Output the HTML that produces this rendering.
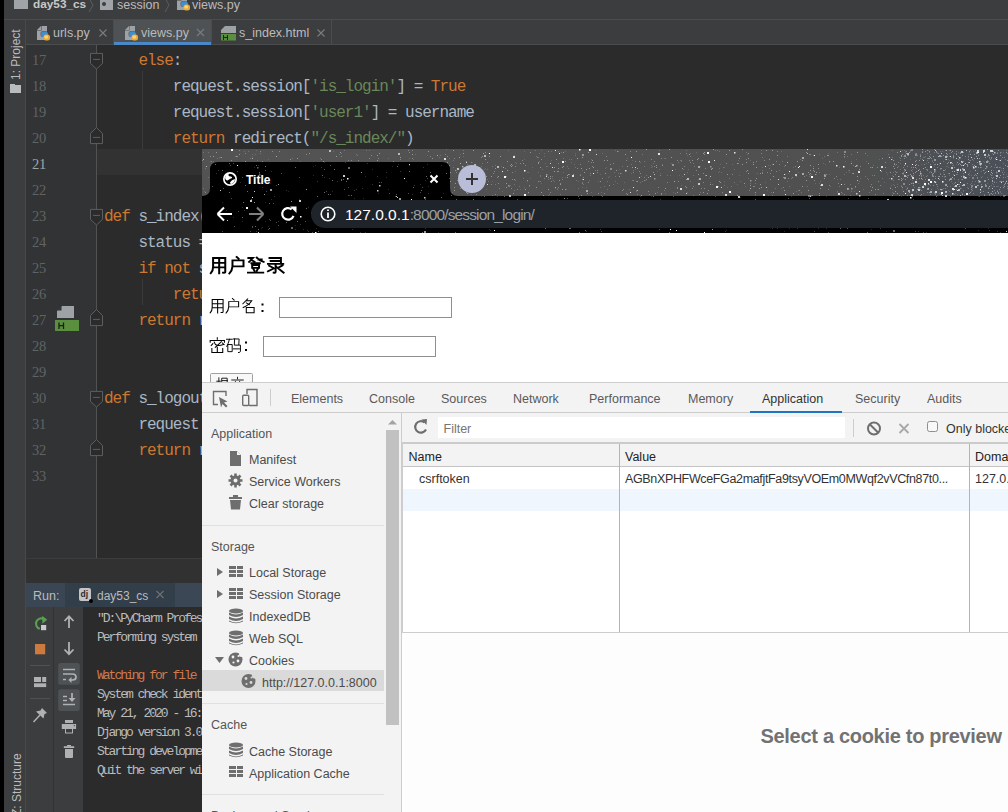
<!DOCTYPE html><html><head><meta charset="utf-8"><style>*{margin:0;padding:0;box-sizing:border-box}
html,body{width:1008px;height:812px;overflow:hidden;background:#2b2b2b;font-family:"Liberation Sans",sans-serif;position:relative}
.a{position:absolute}
.t{position:absolute;line-height:1;white-space:pre}
.kw{color:#cc7832}.st{color:#6a8759}
svg{position:absolute;overflow:visible}
</style></head><body><div class="a" style="left:0px;top:0px;width:4px;height:812px;background:#000000;"></div>
<div class="a" style="left:4px;top:0px;width:1004px;height:19px;background:#3c3d3f;"></div>
<div class="a" style="left:4px;top:19px;width:1004px;height:1px;background:#4a4c4e;"></div>
<div class="a" style="left:4px;top:20px;width:22px;height:792px;background:#3c3d3f;"></div>
<div class="a" style="left:25px;top:20px;width:1px;height:792px;background:#48494b;"></div>
<div class="a" style="left:26px;top:20px;width:982px;height:25px;background:#3c3d3f;"></div>
<div class="a" style="left:26px;top:44px;width:982px;height:1px;background:#4a4c4e;"></div>
<div class="a" style="left:114px;top:20px;width:97px;height:22px;background:#4e5254;"></div>
<div class="a" style="left:114px;top:42px;width:97px;height:3px;background:#4a88c7;"></div>
<div class="a" style="left:211px;top:20px;width:1px;height:25px;background:#4a4c4e;"></div>
<div class="a" style="left:113px;top:20px;width:1px;height:25px;background:#4a4c4e;"></div>
<div class="a" style="left:331px;top:20px;width:1px;height:25px;background:#4a4c4e;"></div>
<div class="a" style="left:14px;top:0px;width:14px;height:9px;background:#a0a4a8;"></div>
<div class="t" style="left:33px;top:-0.54px;font-size:11.8px;color:#c8c8c8;font-weight:bold;">day53_cs</div>
<svg style="left:0;top:0" width="1008" height="45"><path d="M89,-2 L93,5 L89,12 M165,-2 L169,5 L165,12" stroke="#5a5d60" stroke-width="1" fill="none"/><rect x="100" y="-2" width="13" height="12" fill="#a0a4a8"/><circle cx="104" cy="4" r="2" fill="#3c3d3f"/></svg>
<div class="t" style="left:117px;top:-1.08px;font-size:12.5px;color:#bbbbbb;">session</div>
<div class="t" style="left:192px;top:-1.08px;font-size:12.5px;color:#bbbbbb;">views.py</div>
<div class="t" style="left:53px;top:26.92px;font-size:12.5px;color:#bbbbbb;">urls.py</div>
<div class="t" style="left:141px;top:26.92px;font-size:12.5px;color:#bbbbbb;">views.py</div>
<div class="t" style="left:239px;top:26.92px;font-size:12.5px;color:#bbbbbb;">s_index.html</div>
<svg style="left:0;top:0" width="1008" height="45"><path d="M41.5,26 H47 V40 H37 V30.5 H41.5 Z" fill="#9ea2a6"/><path d="M37,30 L41,26 V30 Z" fill="#9ea2a6"/><rect x="40.5" y="31" width="7.5" height="6" rx="2.5" fill="#2b2b2b" opacity="0.6"/><rect x="41" y="31.5" width="7" height="5.5" rx="2.5" fill="#3d8fd1"/><rect x="43.5" y="34.5" width="6.5" height="6" rx="2.5" fill="#e9a93a"/><rect x="44.5" y="35.5" width="3.5" height="3" rx="1" fill="#f7d774"/><path d="M129.5,26 H135 V40 H125 V30.5 H129.5 Z" fill="#9ea2a6"/><path d="M125,30 L129,26 V30 Z" fill="#9ea2a6"/><rect x="128.5" y="31" width="7.5" height="6" rx="2.5" fill="#2b2b2b" opacity="0.6"/><rect x="129" y="31.5" width="7" height="5.5" rx="2.5" fill="#3d8fd1"/><rect x="131.5" y="34.5" width="6.5" height="6" rx="2.5" fill="#e9a93a"/><rect x="132.5" y="35.5" width="3.5" height="3" rx="1" fill="#f7d774"/><path d="M181.5,-4 H187 V10 H177 V0.5 H181.5 Z" fill="#9ea2a6"/><path d="M177,0 L181,-4 V0 Z" fill="#9ea2a6"/><rect x="180.5" y="1" width="7.5" height="6" rx="2.5" fill="#2b2b2b" opacity="0.6"/><rect x="181" y="1.5" width="7" height="5.5" rx="2.5" fill="#3d8fd1"/><rect x="183.5" y="4.5" width="6.5" height="6" rx="2.5" fill="#e9a93a"/><rect x="184.5" y="5.5" width="3.5" height="3" rx="1" fill="#f7d774"/><path d="M99.5,29.5 L106.5,36.5 M106.5,29.5 L99.5,36.5" stroke="#7a7d80" stroke-width="1.1"/><path d="M197.0,29.0 L204.0,36.0 M204.0,29.0 L197.0,36.0" stroke="#7a7d80" stroke-width="1.1"/><path d="M317.5,29.5 L324.5,36.5 M324.5,29.5 L317.5,36.5" stroke="#7a7d80" stroke-width="1.1"/><path d="M225,26 H236 V33 H221 V30 Z" fill="#9ea2a6"/><rect x="221" y="34" width="15" height="6.5" fill="#5a8f3f"/><path d="M223.5,35 V40 M227.5,35 V40 M223.5,37.5 H227.5" stroke="#222" stroke-width="1"/></svg>
<div class="t" style="left:10px;top:80px;font-size:12px;color:#bbbbbb;transform-origin:0 0;transform:rotate(-90deg);">1: Project</div>
<div class="a" style="left:10px;top:85px;width:11px;height:8px;background:#b9bcbf;"></div>
<div class="a" style="left:10px;top:84px;width:5px;height:2px;background:#b9bcbf;"></div>
<div class="t" style="left:10.5px;top:816px;font-size:12px;color:#bbbbbb;transform-origin:0 0;transform:rotate(-90deg);">Z: Structure</div>
<div class="a" style="left:26px;top:45px;width:70px;height:513px;background:#313335;"></div>
<div class="a" style="left:97px;top:149px;width:911px;height:26px;background:#323232;"></div>
<div class="a" style="left:96px;top:45px;width:1px;height:513px;background:#505254;"></div>
<div class="t" style="left:32px;top:52.86px;font-size:14.5px;color:#606366;font-family:'Liberation Serif',serif;letter-spacing:-0.3px;">17</div>
<div class="t" style="left:104px;top:52.74px;font-size:16px;color:#a9b7c6;font-family:'Liberation Mono',monospace;letter-spacing:-1px;">    <span class="kw">else</span>:</div>
<div class="t" style="left:32px;top:78.86px;font-size:14.5px;color:#606366;font-family:'Liberation Serif',serif;letter-spacing:-0.3px;">18</div>
<div class="t" style="left:104px;top:78.74px;font-size:16px;color:#a9b7c6;font-family:'Liberation Mono',monospace;letter-spacing:-1px;">        request.session[<span class="st">'is_login'</span>] = <span class="kw">True</span></div>
<div class="t" style="left:32px;top:104.86px;font-size:14.5px;color:#606366;font-family:'Liberation Serif',serif;letter-spacing:-0.3px;">19</div>
<div class="t" style="left:104px;top:104.74px;font-size:16px;color:#a9b7c6;font-family:'Liberation Mono',monospace;letter-spacing:-1px;">        request.session[<span class="st">'user1'</span>] = username</div>
<div class="t" style="left:32px;top:130.86px;font-size:14.5px;color:#606366;font-family:'Liberation Serif',serif;letter-spacing:-0.3px;">20</div>
<div class="t" style="left:104px;top:130.74px;font-size:16px;color:#a9b7c6;font-family:'Liberation Mono',monospace;letter-spacing:-1px;">        <span class="kw">return</span> redirect(<span class="st">"/s_index/"</span>)</div>
<div class="t" style="left:32px;top:156.86px;font-size:14.5px;color:#a4a3a3;font-family:'Liberation Serif',serif;letter-spacing:-0.3px;">21</div>
<div class="t" style="left:32px;top:182.86px;font-size:14.5px;color:#606366;font-family:'Liberation Serif',serif;letter-spacing:-0.3px;">22</div>
<div class="t" style="left:32px;top:208.86px;font-size:14.5px;color:#606366;font-family:'Liberation Serif',serif;letter-spacing:-0.3px;">23</div>
<div class="t" style="left:104px;top:208.74px;font-size:16px;color:#a9b7c6;font-family:'Liberation Mono',monospace;letter-spacing:-1px;"><span class="kw">def</span> s_index(request):</div>
<div class="t" style="left:32px;top:234.86px;font-size:14.5px;color:#606366;font-family:'Liberation Serif',serif;letter-spacing:-0.3px;">24</div>
<div class="t" style="left:104px;top:234.74px;font-size:16px;color:#a9b7c6;font-family:'Liberation Mono',monospace;letter-spacing:-1px;">    status = request.session.get()</div>
<div class="t" style="left:32px;top:260.86px;font-size:14.5px;color:#606366;font-family:'Liberation Serif',serif;letter-spacing:-0.3px;">25</div>
<div class="t" style="left:104px;top:260.74px;font-size:16px;color:#a9b7c6;font-family:'Liberation Mono',monospace;letter-spacing:-1px;">    <span class="kw">if not</span> status:</div>
<div class="t" style="left:32px;top:286.86px;font-size:14.5px;color:#606366;font-family:'Liberation Serif',serif;letter-spacing:-0.3px;">26</div>
<div class="t" style="left:104px;top:286.74px;font-size:16px;color:#a9b7c6;font-family:'Liberation Mono',monospace;letter-spacing:-1px;">        <span class="kw">return</span> redirect()</div>
<div class="t" style="left:32px;top:312.86px;font-size:14.5px;color:#606366;font-family:'Liberation Serif',serif;letter-spacing:-0.3px;">27</div>
<div class="t" style="left:104px;top:312.74px;font-size:16px;color:#a9b7c6;font-family:'Liberation Mono',monospace;letter-spacing:-1px;">    <span class="kw">return</span> render()</div>
<div class="t" style="left:32px;top:338.86px;font-size:14.5px;color:#606366;font-family:'Liberation Serif',serif;letter-spacing:-0.3px;">28</div>
<div class="t" style="left:32px;top:364.86px;font-size:14.5px;color:#606366;font-family:'Liberation Serif',serif;letter-spacing:-0.3px;">29</div>
<div class="t" style="left:32px;top:390.86px;font-size:14.5px;color:#606366;font-family:'Liberation Serif',serif;letter-spacing:-0.3px;">30</div>
<div class="t" style="left:104px;top:390.74px;font-size:16px;color:#a9b7c6;font-family:'Liberation Mono',monospace;letter-spacing:-1px;"><span class="kw">def</span> s_logout(request):</div>
<div class="t" style="left:32px;top:416.86px;font-size:14.5px;color:#606366;font-family:'Liberation Serif',serif;letter-spacing:-0.3px;">31</div>
<div class="t" style="left:104px;top:416.74px;font-size:16px;color:#a9b7c6;font-family:'Liberation Mono',monospace;letter-spacing:-1px;">    request.session.flush()</div>
<div class="t" style="left:32px;top:442.86px;font-size:14.5px;color:#606366;font-family:'Liberation Serif',serif;letter-spacing:-0.3px;">32</div>
<div class="t" style="left:104px;top:442.74px;font-size:16px;color:#a9b7c6;font-family:'Liberation Mono',monospace;letter-spacing:-1px;">    <span class="kw">return</span> redirect()</div>
<div class="t" style="left:32px;top:468.86px;font-size:14.5px;color:#606366;font-family:'Liberation Serif',serif;letter-spacing:-0.3px;">33</div>
<div class="a" style="left:142px;top:71px;width:1px;height:78px;background:#3b3b3b;"></div>
<div class="a" style="left:142px;top:279px;width:1px;height:26px;background:#3b3b3b;"></div>
<svg style="left:0;top:0" width="200" height="560"><path d="M90.5,53.4 H102.5 V63.4 L96.5,69 L90.5,63.4 Z" fill="#2b2b2b" stroke="#5c5f61" stroke-width="1"/><path d="M93,59.4 H100" stroke="#5c5f61"/><path d="M90.5,143.6 H102.5 V133.5 L96.5,127.5 L90.5,133.5 Z" fill="#2b2b2b" stroke="#5c5f61" stroke-width="1"/><path d="M93,137.4 H100" stroke="#5c5f61"/><path d="M90.5,209.4 H102.5 V219.4 L96.5,225 L90.5,219.4 Z" fill="#2b2b2b" stroke="#5c5f61" stroke-width="1"/><path d="M93,215.4 H100" stroke="#5c5f61"/><path d="M90.5,325.6 H102.5 V315.5 L96.5,309.5 L90.5,315.5 Z" fill="#2b2b2b" stroke="#5c5f61" stroke-width="1"/><path d="M93,319.4 H100" stroke="#5c5f61"/><path d="M90.5,391.4 H102.5 V401.4 L96.5,407 L90.5,401.4 Z" fill="#2b2b2b" stroke="#5c5f61" stroke-width="1"/><path d="M93,397.4 H100" stroke="#5c5f61"/><path d="M90.5,455.6 H102.5 V445.5 L96.5,439.5 L90.5,445.5 Z" fill="#2b2b2b" stroke="#5c5f61" stroke-width="1"/><path d="M93,449.4 H100" stroke="#5c5f61"/><path d="M62,306 H74 V318 H57 V311 Z" fill="#9ea2a6"/><path d="M57,310.5 L61.5,306 V310.5 Z" fill="#313335"/><rect x="55" y="320" width="24" height="11" fill="#5a8f3f"/><path d="M59,322.5 V329 M63.5,322.5 V329 M59,325.7 H63.5" stroke="#1e1e1e" stroke-width="1.3"/></svg>
<div class="a" style="left:26px;top:558px;width:982px;height:1px;background:#3a3c3e;"></div>
<div class="a" style="left:26px;top:559px;width:982px;height:24px;background:#313132;"></div>
<div class="a" style="left:26px;top:583px;width:982px;height:24px;background:#3b4754;"></div>
<div class="a" style="left:26px;top:583px;width:39px;height:24px;background:#3a4653;"></div>
<div class="a" style="left:65px;top:583px;width:110px;height:24px;background:#323e4a;"></div>
<div class="t" style="left:33px;top:589.92px;font-size:12.5px;color:#bbbbbb;">Run:</div>
<div class="t" style="left:97px;top:590.30px;font-size:12px;color:#bbbbbb;">day53_cs</div>
<svg style="left:0;top:583px" width="200" height="24"><rect x="79" y="5" width="12" height="13" rx="2" fill="#c2c4c6"/><text x="80.5" y="14" font-size="8.5" font-family="Liberation Sans" fill="#2b2b2b" font-weight="bold">dj</text><circle cx="91" cy="18" r="2" fill="#000"/><path d="M156.5,8.0 L163.5,15.0 M163.5,8.0 L156.5,15.0" stroke="#6e7275" stroke-width="1.1"/></svg>
<div class="a" style="left:26px;top:607px;width:28px;height:205px;background:#3c3d3f;"></div>
<div class="a" style="left:53px;top:607px;width:1px;height:205px;background:#323232;"></div>
<div class="a" style="left:54px;top:607px;width:29px;height:205px;background:#3c3d3f;"></div>
<div class="a" style="left:83px;top:607px;width:925px;height:205px;background:#2b2b2b;"></div>
<svg style="left:0;top:607px" width="90" height="205"><path d="M44.5,12.5 A5.3,5.3 0 1 0 39.8,21.8" fill="none" stroke="#59a14f" stroke-width="2.2"/><path d="M42.3,8.8 L47.2,12.8 L42.3,16.8 Z" fill="#59a14f"/><rect x="41" y="18" width="5.2" height="5.2" fill="#c9c9c9"/><rect x="35" y="37" width="10.2" height="10.3" fill="#cc7a3e"/><rect x="30" y="58" width="20" height="1" fill="#4f5254"/><rect x="34" y="70" width="7" height="5" fill="#afb1b3"/><rect x="42.2" y="70" width="4" height="5" fill="#afb1b3"/><rect x="34" y="76.3" width="12.2" height="3.8" fill="#afb1b3"/><rect x="30" y="91" width="20" height="1" fill="#4f5254"/><path d="M42,101 L47,106 L44.5,107 L43.5,111.5 L36,104.5 L40.5,103.5 Z" fill="#afb1b3"/><path d="M33.5,115 L40,108" stroke="#afb1b3" stroke-width="1.5"/><path d="M69,9.5 V21 M64.5,14 L69,9.3 L73.5,14" stroke="#afb1b3" stroke-width="1.8" fill="none"/><path d="M69,35 V47 M64.5,42.5 L69,47.2 L73.5,42.5" stroke="#afb1b3" stroke-width="1.8" fill="none"/><rect x="58.2" y="56" width="21.6" height="21.7" rx="2.5" fill="#4e5254"/><path d="M63,62.5 H75 M63,67 H72.5 Q76,67 76,70 Q76,73 72.5,73 H70 M63,72.5 H66" stroke="#afb1b3" stroke-width="1.7" fill="none"/><path d="M71.5,70 L68.3,73 L71.5,76 Z" fill="#afb1b3"/><rect x="58.2" y="82.2" width="21.6" height="21.8" rx="2.5" fill="#4e5254"/><path d="M63,89.5 H67 M63,93.5 H67 M63,97.5 H75 M72,86 V93.5" stroke="#afb1b3" stroke-width="1.7" fill="none"/><path d="M68.5,91 L72,95 L75.5,91 Z" fill="#afb1b3"/><rect x="65" y="113" width="8" height="3" fill="#afb1b3"/><rect x="61.8" y="117" width="14.3" height="5" fill="#afb1b3"/><rect x="65.5" y="121.5" width="7" height="4.5" fill="none" stroke="#afb1b3" stroke-width="1"/><circle cx="74.3" cy="118.6" r="0.6" fill="#3c3d3f"/><rect x="63.8" y="139.2" width="10.4" height="1.8" fill="#afb1b3"/><rect x="67" y="138" width="4" height="1.5" fill="#afb1b3"/><path d="M65,142 H73 V150 Q73,151 72,151 H66 Q65,151 65,150 Z" fill="#afb1b3"/></svg>
<div class="t" style="left:97px;top:612.04px;font-size:13px;color:#bbbbbb;font-family:'Liberation Mono',monospace;letter-spacing:-2px;">"D:\PyCharm Professional\bin\python.exe" manage.py runserver</div>
<div class="t" style="left:97px;top:631.04px;font-size:13px;color:#bbbbbb;font-family:'Liberation Mono',monospace;letter-spacing:-2px;">Performing system checks...</div>
<div class="t" style="left:97px;top:669.04px;font-size:13px;color:#cf7a4e;font-family:'Liberation Mono',monospace;letter-spacing:-2px;">Watching for file changes with StatReloader</div>
<div class="t" style="left:97px;top:688.04px;font-size:13px;color:#bbbbbb;font-family:'Liberation Mono',monospace;letter-spacing:-2px;">System check identified no issues (0 silenced).</div>
<div class="t" style="left:97px;top:707.04px;font-size:13px;color:#bbbbbb;font-family:'Liberation Mono',monospace;letter-spacing:-2px;">May 21, 2020 - 16:20:11</div>
<div class="t" style="left:97px;top:726.04px;font-size:13px;color:#bbbbbb;font-family:'Liberation Mono',monospace;letter-spacing:-2px;">Django version 3.0.6, using settings</div>
<div class="t" style="left:97px;top:745.04px;font-size:13px;color:#bbbbbb;font-family:'Liberation Mono',monospace;letter-spacing:-2px;">Starting development server at http://127.0.0.1:8000/</div>
<div class="t" style="left:97px;top:764.04px;font-size:13px;color:#bbbbbb;font-family:'Liberation Mono',monospace;letter-spacing:-2px;">Quit the server with CTRL-BREAK.</div>
<div class="a" style="left:202px;top:149px;width:806px;height:663px;overflow:hidden">
<div class="a" style="left:0;top:0;width:806px;height:47px;background:linear-gradient(90deg,#535353 0%,#505050 82%,#4b5059 100%)"></div>
<div class="a" style="left:0;top:47px;width:806px;height:37px;background:#000"></div>
<svg style="left:0;top:0" width="806" height="84"><rect x="365" y="26" width="1" height="1" fill="#fff" opacity="0.4"/><rect x="364" y="40" width="1" height="1" fill="#fff" opacity="0.2"/><rect x="149" y="24" width="1" height="1" fill="#fff" opacity="0.2"/><rect x="76" y="14" width="1" height="1" fill="#fff" opacity="0.15"/><rect x="434" y="42" width="1" height="1" fill="#fff" opacity="0.15"/><rect x="480" y="19" width="1" height="1" fill="#fff" opacity="0.4"/><rect x="527" y="29" width="1" height="1" fill="#fff" opacity="0.2"/><rect x="502" y="39" width="1" height="1" fill="#fff" opacity="0.15"/><rect x="48" y="9" width="1" height="1" fill="#fff" opacity="0.2"/><rect x="483" y="37" width="1" height="1" fill="#fff" opacity="0.3"/><rect x="355" y="40" width="1" height="1" fill="#fff" opacity="0.2"/><rect x="516" y="23" width="1" height="1" fill="#fff" opacity="0.15"/><rect x="369" y="13" width="1" height="1" fill="#fff" opacity="0.15"/><rect x="570" y="15" width="1" height="1" fill="#fff" opacity="0.2"/><rect x="413" y="1" width="1" height="1" fill="#fff" opacity="0.15"/><rect x="323" y="40" width="1" height="1" fill="#fff" opacity="0.4"/><rect x="54" y="1" width="1" height="1" fill="#fff" opacity="0.15"/><rect x="172" y="44" width="1" height="1" fill="#fff" opacity="0.15"/><rect x="379" y="46" width="1" height="1" fill="#fff" opacity="0.4"/><rect x="338" y="27" width="1" height="1" fill="#fff" opacity="0.2"/><rect x="627" y="13" width="1" height="1" fill="#fff" opacity="0.15"/><rect x="251" y="1" width="1" height="1" fill="#fff" opacity="0.4"/><rect x="611" y="6" width="1" height="1" fill="#fff" opacity="0.2"/><rect x="570" y="1" width="1" height="1" fill="#fff" opacity="0.4"/><rect x="642" y="8" width="1" height="1" fill="#fff" opacity="0.2"/><rect x="361" y="9" width="1" height="1" fill="#fff" opacity="0.2"/><rect x="338" y="18" width="1" height="1" fill="#fff" opacity="0.4"/><rect x="339" y="10" width="1" height="1" fill="#fff" opacity="0.3"/><rect x="697" y="46" width="1" height="1" fill="#fff" opacity="0.3"/><rect x="804" y="1" width="1" height="1" fill="#fff" opacity="0.2"/><rect x="318" y="40" width="1" height="1" fill="#fff" opacity="0.15"/><rect x="34" y="7" width="1" height="1" fill="#fff" opacity="0.4"/><rect x="208" y="36" width="1" height="1" fill="#fff" opacity="0.3"/><rect x="669" y="18" width="1" height="1" fill="#fff" opacity="0.15"/><rect x="73" y="27" width="1" height="1" fill="#fff" opacity="0.2"/><rect x="13" y="17" width="1" height="1" fill="#fff" opacity="0.4"/><rect x="103" y="28" width="1" height="1" fill="#fff" opacity="0.2"/><rect x="698" y="9" width="1" height="1" fill="#fff" opacity="0.2"/><rect x="251" y="11" width="1" height="1" fill="#fff" opacity="0.2"/><rect x="585" y="7" width="1" height="1" fill="#fff" opacity="0.2"/><rect x="554" y="18" width="1" height="1" fill="#fff" opacity="0.4"/><rect x="486" y="20" width="1" height="1" fill="#fff" opacity="0.15"/><rect x="88" y="24" width="1" height="1" fill="#fff" opacity="0.3"/><rect x="192" y="33" width="1" height="1" fill="#fff" opacity="0.3"/><rect x="339" y="43" width="1" height="1" fill="#fff" opacity="0.4"/><rect x="237" y="8" width="1" height="1" fill="#fff" opacity="0.15"/><rect x="102" y="23" width="1" height="1" fill="#fff" opacity="0.15"/><rect x="226" y="43" width="1" height="1" fill="#fff" opacity="0.2"/><rect x="604" y="3" width="1" height="1" fill="#fff" opacity="0.4"/><rect x="359" y="3" width="1" height="1" fill="#fff" opacity="0.2"/><rect x="227" y="25" width="1" height="1" fill="#fff" opacity="0.2"/><rect x="74" y="7" width="1" height="1" fill="#fff" opacity="0.4"/><rect x="790" y="31" width="1" height="1" fill="#fff" opacity="0.2"/><rect x="475" y="43" width="1" height="1" fill="#fff" opacity="0.4"/><rect x="734" y="33" width="1" height="1" fill="#fff" opacity="0.15"/><rect x="17" y="30" width="1" height="1" fill="#fff" opacity="0.4"/><rect x="54" y="15" width="1" height="1" fill="#fff" opacity="0.2"/><rect x="805" y="4" width="1" height="1" fill="#fff" opacity="0.3"/><rect x="594" y="42" width="1" height="1" fill="#fff" opacity="0.2"/><rect x="639" y="43" width="1" height="1" fill="#fff" opacity="0.3"/><rect x="68" y="22" width="1" height="1" fill="#fff" opacity="0.15"/><rect x="702" y="20" width="1" height="1" fill="#fff" opacity="0.15"/><rect x="696" y="27" width="1" height="1" fill="#fff" opacity="0.4"/><rect x="306" y="1" width="1" height="1" fill="#fff" opacity="0.15"/><rect x="65" y="30" width="1" height="1" fill="#fff" opacity="0.3"/><rect x="709" y="34" width="1" height="1" fill="#fff" opacity="0.4"/><rect x="753" y="33" width="1" height="1" fill="#fff" opacity="0.4"/><rect x="355" y="39" width="1" height="1" fill="#fff" opacity="0.15"/><rect x="418" y="24" width="1" height="1" fill="#fff" opacity="0.3"/><rect x="485" y="23" width="1" height="1" fill="#fff" opacity="0.2"/><rect x="772" y="5" width="1" height="1" fill="#fff" opacity="0.4"/><rect x="206" y="1" width="1" height="1" fill="#fff" opacity="0.3"/><rect x="115" y="29" width="1" height="1" fill="#fff" opacity="0.2"/><rect x="608" y="16" width="1" height="1" fill="#fff" opacity="0.4"/><rect x="402" y="11" width="1" height="1" fill="#fff" opacity="0.4"/><rect x="537" y="9" width="1" height="1" fill="#fff" opacity="0.4"/><rect x="648" y="35" width="1" height="1" fill="#fff" opacity="0.2"/><rect x="709" y="18" width="1" height="1" fill="#fff" opacity="0.3"/><rect x="169" y="6" width="1" height="1" fill="#fff" opacity="0.3"/><rect x="675" y="40" width="1" height="1" fill="#fff" opacity="0.15"/><rect x="766" y="13" width="1" height="1" fill="#fff" opacity="0.2"/><rect x="91" y="22" width="1" height="1" fill="#fff" opacity="0.2"/><rect x="670" y="18" width="1" height="1" fill="#fff" opacity="0.4"/><rect x="542" y="34" width="1" height="1" fill="#fff" opacity="0.4"/><rect x="258" y="39" width="1" height="1" fill="#fff" opacity="0.3"/><rect x="704" y="2" width="1" height="1" fill="#fff" opacity="0.3"/><rect x="460" y="15" width="1" height="1" fill="#fff" opacity="0.15"/><rect x="517" y="19" width="1" height="1" fill="#fff" opacity="0.2"/><rect x="20" y="39" width="1" height="1" fill="#fff" opacity="0.2"/><rect x="628" y="37" width="1" height="1" fill="#fff" opacity="0.15"/><rect x="360" y="30" width="1" height="1" fill="#fff" opacity="0.3"/><rect x="773" y="32" width="1" height="1" fill="#fff" opacity="0.2"/><rect x="664" y="12" width="1" height="1" fill="#fff" opacity="0.15"/><rect x="609" y="25" width="1" height="1" fill="#fff" opacity="0.15"/><rect x="144" y="13" width="1" height="1" fill="#fff" opacity="0.3"/><rect x="435" y="45" width="1" height="1" fill="#fff" opacity="0.2"/><rect x="317" y="37" width="1" height="1" fill="#fff" opacity="0.2"/><rect x="70" y="44" width="1" height="1" fill="#fff" opacity="0.4"/><rect x="105" y="21" width="1" height="1" fill="#fff" opacity="0.15"/><rect x="304" y="27" width="1" height="1" fill="#fff" opacity="0.3"/><rect x="374" y="31" width="1" height="1" fill="#fff" opacity="0.2"/><rect x="80" y="41" width="1" height="1" fill="#fff" opacity="0.15"/><rect x="172" y="42" width="1" height="1" fill="#fff" opacity="0.15"/><rect x="788" y="25" width="1" height="1" fill="#fff" opacity="0.3"/><rect x="211" y="34" width="1" height="1" fill="#fff" opacity="0.15"/><rect x="281" y="4" width="1" height="1" fill="#fff" opacity="0.4"/><rect x="276" y="20" width="1" height="1" fill="#fff" opacity="0.3"/><rect x="393" y="1" width="1" height="1" fill="#fff" opacity="0.15"/><rect x="346" y="2" width="1" height="1" fill="#fff" opacity="0.3"/><rect x="553" y="43" width="1" height="1" fill="#fff" opacity="0.4"/><rect x="120" y="24" width="1" height="1" fill="#fff" opacity="0.4"/><rect x="762" y="23" width="1" height="1" fill="#fff" opacity="0.15"/><rect x="611" y="21" width="1" height="1" fill="#fff" opacity="0.3"/><rect x="670" y="26" width="1" height="1" fill="#fff" opacity="0.2"/><rect x="421" y="40" width="1" height="1" fill="#fff" opacity="0.3"/><rect x="251" y="18" width="1" height="1" fill="#fff" opacity="0.2"/><rect x="245" y="7" width="1" height="1" fill="#fff" opacity="0.3"/><rect x="462" y="9" width="1" height="1" fill="#fff" opacity="0.15"/><rect x="406" y="28" width="1" height="1" fill="#fff" opacity="0.15"/><rect x="434" y="2" width="1" height="1" fill="#fff" opacity="0.4"/><rect x="438" y="47" width="1" height="1" fill="#fff" opacity="0.15"/><rect x="396" y="32" width="1" height="1" fill="#fff" opacity="0.15"/><rect x="750" y="22" width="1" height="1" fill="#fff" opacity="0.4"/><rect x="217" y="22" width="1" height="1" fill="#fff" opacity="0.2"/><rect x="274" y="42" width="1" height="1" fill="#fff" opacity="0.4"/><rect x="423" y="5" width="1" height="1" fill="#fff" opacity="0.4"/><rect x="498" y="43" width="1" height="1" fill="#fff" opacity="0.2"/><rect x="566" y="46" width="1" height="1" fill="#fff" opacity="0.15"/><rect x="156" y="11" width="1" height="1" fill="#fff" opacity="0.3"/><rect x="260" y="17" width="1" height="1" fill="#fff" opacity="0.4"/><rect x="85" y="34" width="1" height="1" fill="#fff" opacity="0.15"/><rect x="687" y="29" width="1" height="1" fill="#fff" opacity="0.2"/><rect x="565" y="41" width="1" height="1" fill="#fff" opacity="0.15"/><rect x="303" y="19" width="1" height="1" fill="#fff" opacity="0.2"/><rect x="434" y="41" width="1" height="1" fill="#fff" opacity="0.2"/><rect x="427" y="40" width="1" height="1" fill="#fff" opacity="0.2"/><rect x="188" y="35" width="1" height="1" fill="#fff" opacity="0.3"/><rect x="728" y="15" width="1" height="1" fill="#fff" opacity="0.3"/><rect x="718" y="9" width="1" height="1" fill="#fff" opacity="0.2"/><rect x="715" y="6" width="1" height="1" fill="#fff" opacity="0.2"/><rect x="107" y="4" width="1" height="1" fill="#fff" opacity="0.4"/><rect x="78" y="39" width="1" height="1" fill="#fff" opacity="0.4"/><rect x="438" y="33" width="1" height="1" fill="#fff" opacity="0.2"/><rect x="325" y="32" width="1" height="1" fill="#fff" opacity="0.15"/><rect x="77" y="27" width="1" height="1" fill="#fff" opacity="0.3"/><rect x="735" y="46" width="1" height="1" fill="#fff" opacity="0.15"/><rect x="568" y="30" width="1" height="1" fill="#fff" opacity="0.3"/><rect x="405" y="32" width="1" height="1" fill="#fff" opacity="0.2"/><rect x="647" y="23" width="1" height="1" fill="#fff" opacity="0.15"/><rect x="30" y="26" width="1" height="1" fill="#fff" opacity="0.4"/><rect x="118" y="9" width="1" height="1" fill="#fff" opacity="0.2"/><rect x="139" y="7" width="1" height="1" fill="#fff" opacity="0.3"/><rect x="747" y="4" width="1" height="1" fill="#fff" opacity="0.15"/><rect x="108" y="32" width="1" height="1" fill="#fff" opacity="0.15"/><rect x="616" y="15" width="1" height="1" fill="#fff" opacity="0.4"/><rect x="344" y="17" width="1" height="1" fill="#fff" opacity="0.2"/><rect x="484" y="1" width="1" height="1" fill="#fff" opacity="0.15"/><rect x="680" y="9" width="1" height="1" fill="#fff" opacity="0.4"/><rect x="290" y="17" width="1" height="1" fill="#fff" opacity="0.2"/><rect x="488" y="4" width="1" height="1" fill="#fff" opacity="0.15"/><rect x="261" y="4" width="1" height="1" fill="#fff" opacity="0.4"/><rect x="459" y="9" width="1" height="1" fill="#fff" opacity="0.3"/><rect x="649" y="12" width="1" height="1" fill="#fff" opacity="0.15"/><rect x="600" y="37" width="1" height="1" fill="#fff" opacity="0.4"/><rect x="107" y="16" width="1" height="1" fill="#fff" opacity="0.3"/><rect x="618" y="36" width="1" height="1" fill="#fff" opacity="0.4"/><rect x="167" y="9" width="1" height="1" fill="#fff" opacity="0.3"/><rect x="243" y="5" width="1" height="1" fill="#fff" opacity="0.3"/><rect x="798" y="42" width="1" height="1" fill="#fff" opacity="0.15"/><rect x="187" y="44" width="1" height="1" fill="#fff" opacity="0.3"/><rect x="272" y="31" width="1" height="1" fill="#fff" opacity="0.2"/><rect x="430" y="18" width="1" height="1" fill="#fff" opacity="0.4"/><rect x="518" y="33" width="1" height="1" fill="#fff" opacity="0.4"/><rect x="790" y="1" width="1" height="1" fill="#fff" opacity="0.15"/><rect x="595" y="12" width="1" height="1" fill="#fff" opacity="0.4"/><rect x="407" y="36" width="1" height="1" fill="#fff" opacity="0.4"/><rect x="9" y="12" width="1" height="1" fill="#fff" opacity="0.3"/><rect x="730" y="26" width="1" height="1" fill="#fff" opacity="0.4"/><rect x="780" y="27" width="1" height="1" fill="#fff" opacity="0.15"/><rect x="514" y="38" width="1" height="1" fill="#fff" opacity="0.15"/><rect x="443" y="31" width="1" height="1" fill="#fff" opacity="0.15"/><rect x="311" y="44" width="1" height="1" fill="#fff" opacity="0.4"/><rect x="380" y="8" width="1" height="1" fill="#fff" opacity="0.4"/><rect x="437" y="28" width="1" height="1" fill="#fff" opacity="0.4"/><rect x="762" y="20" width="1" height="1" fill="#fff" opacity="0.4"/><rect x="482" y="17" width="1" height="1" fill="#fff" opacity="0.3"/><rect x="389" y="13" width="1" height="1" fill="#fff" opacity="0.3"/><rect x="535" y="35" width="1" height="1" fill="#fff" opacity="0.15"/><rect x="11" y="12" width="1" height="1" fill="#fff" opacity="0.15"/><rect x="510" y="19" width="1" height="1" fill="#fff" opacity="0.4"/><rect x="43" y="15" width="1" height="1" fill="#fff" opacity="0.4"/><rect x="40" y="46" width="1" height="1" fill="#fff" opacity="0.3"/><rect x="59" y="43" width="1" height="1" fill="#fff" opacity="0.4"/><rect x="580" y="12" width="1" height="1" fill="#fff" opacity="0.2"/><rect x="37" y="5" width="1" height="1" fill="#fff" opacity="0.4"/><rect x="116" y="45" width="1" height="1" fill="#fff" opacity="0.2"/><rect x="487" y="5" width="1" height="1" fill="#fff" opacity="0.4"/><rect x="367" y="10" width="1" height="1" fill="#fff" opacity="0.15"/><rect x="287" y="7" width="1" height="1" fill="#fff" opacity="0.3"/><rect x="357" y="31" width="1" height="1" fill="#fff" opacity="0.4"/><rect x="484" y="30" width="1" height="1" fill="#fff" opacity="0.4"/><rect x="293" y="35" width="1" height="1" fill="#fff" opacity="0.2"/><rect x="768" y="35" width="1" height="1" fill="#fff" opacity="0.2"/><rect x="388" y="24" width="1" height="1" fill="#fff" opacity="0.3"/><rect x="632" y="29" width="1" height="1" fill="#fff" opacity="0.3"/><rect x="221" y="29" width="1" height="1" fill="#fff" opacity="0.2"/><rect x="510" y="35" width="1" height="1" fill="#fff" opacity="0.2"/><rect x="767" y="24" width="1" height="1" fill="#fff" opacity="0.2"/><rect x="708" y="2" width="1" height="1" fill="#fff" opacity="0.15"/><rect x="8" y="12" width="1" height="1" fill="#fff" opacity="0.15"/><rect x="502" y="5" width="1" height="1" fill="#fff" opacity="0.3"/><rect x="58" y="4" width="1" height="1" fill="#fff" opacity="0.2"/><rect x="444" y="30" width="1" height="1" fill="#fff" opacity="0.3"/><rect x="390" y="17" width="1" height="1" fill="#fff" opacity="0.3"/><rect x="277" y="35" width="1" height="1" fill="#fff" opacity="0.15"/><rect x="647" y="21" width="1" height="1" fill="#fff" opacity="0.2"/><rect x="358" y="35" width="1" height="1" fill="#fff" opacity="0.4"/><rect x="653" y="17" width="1" height="1" fill="#fff" opacity="0.3"/><rect x="234" y="36" width="1" height="1" fill="#fff" opacity="0.2"/><rect x="345" y="17" width="1" height="1" fill="#fff" opacity="0.15"/><rect x="372" y="15" width="1" height="1" fill="#fff" opacity="0.15"/><rect x="348" y="27" width="1" height="1" fill="#fff" opacity="0.4"/><rect x="241" y="36" width="1" height="1" fill="#fff" opacity="0.15"/><rect x="250" y="43" width="1" height="1" fill="#fff" opacity="0.15"/><rect x="560" y="23" width="1" height="1" fill="#fff" opacity="0.3"/><rect x="228" y="7" width="1" height="1" fill="#fff" opacity="0.3"/><rect x="530" y="15" width="1" height="1" fill="#fff" opacity="0.15"/><rect x="260" y="21" width="1" height="1" fill="#fff" opacity="0.3"/><rect x="353" y="38" width="1" height="1" fill="#fff" opacity="0.3"/><rect x="369" y="10" width="1" height="1" fill="#fff" opacity="0.2"/><rect x="68" y="39" width="1" height="1" fill="#fff" opacity="0.15"/><rect x="293" y="19" width="1" height="1" fill="#fff" opacity="0.4"/><rect x="642" y="35" width="1" height="1" fill="#fff" opacity="0.3"/><rect x="642" y="25" width="1" height="1" fill="#fff" opacity="0.2"/><rect x="142" y="36" width="1" height="1" fill="#fff" opacity="0.3"/><rect x="654" y="10" width="1" height="1" fill="#fff" opacity="0.15"/><rect x="439" y="27" width="1" height="1" fill="#fff" opacity="0.15"/><rect x="525" y="38" width="1" height="1" fill="#fff" opacity="0.15"/><rect x="469" y="14" width="1" height="1" fill="#fff" opacity="0.15"/><rect x="270" y="13" width="1" height="1" fill="#fff" opacity="0.15"/><rect x="725" y="4" width="1" height="1" fill="#fff" opacity="0.2"/><rect x="79" y="38" width="1" height="1" fill="#fff" opacity="0.4"/><rect x="198" y="10" width="1" height="1" fill="#fff" opacity="0.3"/><rect x="616" y="19" width="1" height="1" fill="#fff" opacity="0.3"/><rect x="651" y="16" width="1" height="1" fill="#fff" opacity="0.2"/><rect x="398" y="25" width="1" height="1" fill="#fff" opacity="0.15"/><rect x="571" y="43" width="1" height="1" fill="#fff" opacity="0.4"/><rect x="610" y="46" width="1" height="1" fill="#fff" opacity="0.3"/><rect x="688" y="38" width="1" height="1" fill="#fff" opacity="0.15"/><rect x="716" y="45" width="1" height="1" fill="#fff" opacity="0.15"/><rect x="422" y="33" width="1" height="1" fill="#fff" opacity="0.15"/><rect x="340" y="20" width="1" height="1" fill="#fff" opacity="0.2"/><rect x="198" y="8" width="1" height="1" fill="#fff" opacity="0.4"/><rect x="551" y="15" width="1" height="1" fill="#fff" opacity="0.4"/><rect x="343" y="14" width="1" height="1" fill="#fff" opacity="0.15"/><rect x="380" y="34" width="1" height="1" fill="#fff" opacity="0.3"/><rect x="522" y="36" width="1" height="1" fill="#fff" opacity="0.2"/><rect x="735" y="35" width="1" height="1" fill="#fff" opacity="0.15"/><rect x="471" y="43" width="1" height="1" fill="#fff" opacity="0.15"/><rect x="252" y="9" width="1" height="1" fill="#fff" opacity="0.3"/><rect x="175" y="11" width="1" height="1" fill="#fff" opacity="0.4"/><rect x="479" y="11" width="1" height="1" fill="#fff" opacity="0.2"/><rect x="721" y="19" width="1" height="1" fill="#fff" opacity="0.3"/><rect x="505" y="44" width="1" height="1" fill="#fff" opacity="0.4"/><rect x="688" y="23" width="1" height="1" fill="#fff" opacity="0.4"/><rect x="737" y="16" width="1" height="1" fill="#fff" opacity="0.15"/><rect x="389" y="10" width="1" height="1" fill="#fff" opacity="0.15"/><rect x="175" y="6" width="1" height="1" fill="#fff" opacity="0.4"/><rect x="787" y="37" width="1" height="1" fill="#fff" opacity="0.3"/><rect x="635" y="3" width="1" height="1" fill="#fff" opacity="0.2"/><rect x="719" y="41" width="1" height="1" fill="#fff" opacity="0.3"/><rect x="363" y="12" width="1" height="1" fill="#fff" opacity="0.4"/><rect x="488" y="7" width="1" height="1" fill="#fff" opacity="0.2"/><rect x="622" y="7" width="1" height="1" fill="#fff" opacity="0.2"/><rect x="513" y="47" width="1" height="1" fill="#fff" opacity="0.3"/><rect x="416" y="2" width="1" height="1" fill="#fff" opacity="0.2"/><rect x="1" y="39" width="1" height="1" fill="#fff" opacity="0.2"/><rect x="663" y="4" width="1" height="1" fill="#fff" opacity="0.3"/><rect x="496" y="25" width="1" height="1" fill="#fff" opacity="0.4"/><rect x="559" y="4" width="1" height="1" fill="#fff" opacity="0.3"/><rect x="15" y="9" width="1" height="1" fill="#fff" opacity="0.2"/><rect x="739" y="4" width="1" height="1" fill="#fff" opacity="0.4"/><rect x="168" y="26" width="1" height="1" fill="#fff" opacity="0.4"/><rect x="127" y="39" width="1" height="1" fill="#fff" opacity="0.3"/><rect x="255" y="19" width="1" height="1" fill="#fff" opacity="0.3"/><rect x="804" y="31" width="1" height="1" fill="#fff" opacity="0.15"/><rect x="290" y="32" width="1" height="1" fill="#fff" opacity="0.15"/><rect x="538" y="32" width="1" height="1" fill="#fff" opacity="0.15"/><rect x="527" y="1" width="1" height="1" fill="#fff" opacity="0.4"/><rect x="574" y="22" width="1" height="1" fill="#fff" opacity="0.3"/><rect x="455" y="22" width="1" height="1" fill="#fff" opacity="0.15"/><rect x="690" y="40" width="1" height="1" fill="#fff" opacity="0.2"/><rect x="727" y="7" width="1" height="1" fill="#fff" opacity="0.4"/><rect x="756" y="35" width="1" height="1" fill="#fff" opacity="0.3"/><rect x="608" y="26" width="1" height="1" fill="#fff" opacity="0.15"/><rect x="207" y="9" width="1" height="1" fill="#fff" opacity="0.15"/><rect x="265" y="44" width="1" height="1" fill="#fff" opacity="0.4"/><rect x="583" y="16" width="1" height="1" fill="#fff" opacity="0.4"/><rect x="74" y="7" width="1" height="1" fill="#fff" opacity="0.15"/><rect x="106" y="30" width="1" height="1" fill="#fff" opacity="0.2"/><rect x="145" y="19" width="1" height="1" fill="#fff" opacity="0.4"/><rect x="478" y="4" width="1" height="1" fill="#fff" opacity="0.2"/><rect x="26" y="46" width="1" height="1" fill="#fff" opacity="0.4"/><rect x="328" y="3" width="1" height="1" fill="#fff" opacity="0.4"/><rect x="747" y="7" width="1" height="1" fill="#fff" opacity="0.2"/><rect x="618" y="39" width="1" height="1" fill="#fff" opacity="0.4"/><rect x="389" y="43" width="1" height="1" fill="#fff" opacity="0.15"/><rect x="586" y="29" width="1" height="1" fill="#fff" opacity="0.3"/><rect x="791" y="37" width="1" height="1" fill="#fff" opacity="0.15"/><rect x="210" y="9" width="1" height="1" fill="#fff" opacity="0.3"/><rect x="524" y="5" width="1" height="1" fill="#fff" opacity="0.4"/><rect x="165" y="16" width="1" height="1" fill="#fff" opacity="0.3"/><rect x="665" y="29" width="1" height="1" fill="#fff" opacity="0.2"/><rect x="205" y="25" width="1" height="1" fill="#fff" opacity="0.3"/><rect x="442" y="17" width="1" height="1" fill="#fff" opacity="0.2"/><rect x="463" y="9" width="1" height="1" fill="#fff" opacity="0.2"/><rect x="457" y="1" width="1" height="1" fill="#fff" opacity="0.2"/><rect x="626" y="6" width="1" height="1" fill="#fff" opacity="0.4"/><rect x="465" y="33" width="1" height="1" fill="#fff" opacity="0.3"/><rect x="74" y="41" width="1" height="1" fill="#fff" opacity="0.3"/><rect x="373" y="6" width="1" height="1" fill="#fff" opacity="0.2"/><rect x="192" y="27" width="1" height="1" fill="#fff" opacity="0.15"/><rect x="452" y="12" width="1" height="1" fill="#fff" opacity="0.3"/><rect x="485" y="6" width="1" height="1" fill="#fff" opacity="0.15"/><rect x="233" y="42" width="1" height="1" fill="#fff" opacity="0.2"/><rect x="611" y="17" width="1" height="1" fill="#fff" opacity="0.2"/><rect x="150" y="26" width="1" height="1" fill="#fff" opacity="0.15"/><rect x="366" y="19" width="1" height="1" fill="#fff" opacity="0.2"/><rect x="248" y="32" width="1" height="1" fill="#fff" opacity="0.4"/><rect x="496" y="30" width="1" height="1" fill="#fff" opacity="0.15"/><rect x="128" y="19" width="1" height="1" fill="#fff" opacity="0.15"/><rect x="115" y="18" width="1" height="1" fill="#fff" opacity="0.4"/><rect x="140" y="24" width="1" height="1" fill="#fff" opacity="0.3"/><rect x="197" y="44" width="1" height="1" fill="#fff" opacity="0.15"/><rect x="517" y="2" width="1" height="1" fill="#fff" opacity="0.2"/><rect x="325" y="23" width="1" height="1" fill="#fff" opacity="0.15"/><rect x="379" y="19" width="1" height="1" fill="#fff" opacity="0.4"/><rect x="606" y="23" width="1" height="1" fill="#fff" opacity="0.4"/><rect x="676" y="40" width="1" height="1" fill="#fff" opacity="0.4"/><rect x="665" y="6" width="1" height="1" fill="#fff" opacity="0.15"/><rect x="730" y="25" width="1" height="1" fill="#fff" opacity="0.4"/><rect x="339" y="1" width="1" height="1" fill="#fff" opacity="0.15"/><rect x="239" y="29" width="1" height="1" fill="#fff" opacity="0.4"/><rect x="590" y="28" width="1" height="1" fill="#fff" opacity="0.3"/><rect x="711" y="41" width="1" height="1" fill="#fff" opacity="0.2"/><rect x="100" y="21" width="1" height="1" fill="#fff" opacity="0.4"/><rect x="784" y="22" width="1" height="1" fill="#fff" opacity="0.15"/><rect x="424" y="11" width="1" height="1" fill="#fff" opacity="0.3"/><rect x="529" y="44" width="1" height="1" fill="#fff" opacity="0.15"/><rect x="805" y="34" width="1" height="1" fill="#fff" opacity="0.3"/><rect x="698" y="20" width="1" height="1" fill="#fff" opacity="0.2"/><rect x="179" y="35" width="1" height="1" fill="#fff" opacity="0.15"/><rect x="728" y="5" width="1" height="1" fill="#fff" opacity="0.2"/><rect x="100" y="25" width="1" height="1" fill="#fff" opacity="0.4"/><rect x="0" y="11" width="1" height="1" fill="#fff" opacity="0.3"/><rect x="19" y="8" width="1" height="1" fill="#fff" opacity="0.4"/><rect x="721" y="38" width="1" height="1" fill="#fff" opacity="0.4"/><rect x="114" y="33" width="1" height="1" fill="#fff" opacity="0.2"/><rect x="37" y="1" width="1" height="1" fill="#fff" opacity="0.3"/><rect x="248" y="23" width="1" height="1" fill="#fff" opacity="0.4"/><rect x="708" y="10" width="1" height="1" fill="#fff" opacity="0.15"/><rect x="158" y="39" width="1" height="1" fill="#fff" opacity="0.3"/><rect x="725" y="1" width="1" height="1" fill="#fff" opacity="0.2"/><rect x="430" y="11" width="1" height="1" fill="#fff" opacity="0.15"/><rect x="524" y="14" width="1" height="1" fill="#fff" opacity="0.3"/><rect x="775" y="13" width="1" height="1" fill="#fff" opacity="0.4"/><rect x="575" y="6" width="1" height="1" fill="#fff" opacity="0.4"/><rect x="335" y="8" width="1" height="1" fill="#fff" opacity="0.3"/><rect x="97" y="32" width="1" height="1" fill="#fff" opacity="0.3"/><rect x="146" y="11" width="1" height="1" fill="#fff" opacity="0.3"/><rect x="637" y="18" width="1" height="1" fill="#fff" opacity="0.15"/><rect x="475" y="11" width="1" height="1" fill="#fff" opacity="0.3"/><rect x="722" y="8" width="1" height="1" fill="#fff" opacity="0.2"/><rect x="223" y="30" width="1" height="1" fill="#fff" opacity="0.15"/><rect x="373" y="4" width="1" height="1" fill="#fff" opacity="0.15"/><rect x="428" y="2" width="1" height="1" fill="#fff" opacity="0.3"/><rect x="433" y="20" width="1" height="1" fill="#fff" opacity="0.15"/><rect x="133" y="46" width="1" height="1" fill="#fff" opacity="0.2"/><rect x="198" y="13" width="1" height="1" fill="#fff" opacity="0.15"/><rect x="150" y="42" width="1" height="1" fill="#fff" opacity="0.15"/><rect x="501" y="43" width="1" height="1" fill="#fff" opacity="0.4"/><rect x="2" y="42" width="1" height="1" fill="#fff" opacity="0.15"/><rect x="145" y="26" width="1" height="1" fill="#fff" opacity="0.3"/><rect x="259" y="23" width="1" height="1" fill="#fff" opacity="0.15"/><rect x="416" y="24" width="1" height="1" fill="#fff" opacity="0.2"/><rect x="479" y="36" width="1" height="1" fill="#fff" opacity="0.15"/><rect x="490" y="11" width="1" height="1" fill="#fff" opacity="0.4"/><rect x="442" y="12" width="1" height="1" fill="#fff" opacity="0.2"/><rect x="209" y="26" width="1" height="1" fill="#fff" opacity="0.4"/><rect x="211" y="10" width="1" height="1" fill="#fff" opacity="0.15"/><rect x="462" y="41" width="1" height="1" fill="#fff" opacity="0.2"/><rect x="262" y="29" width="1" height="1" fill="#fff" opacity="0.4"/><rect x="650" y="24" width="1" height="1" fill="#fff" opacity="0.3"/><rect x="690" y="1" width="1" height="1" fill="#fff" opacity="0.15"/><rect x="731" y="27" width="1" height="1" fill="#fff" opacity="0.2"/><rect x="502" y="3" width="1" height="1" fill="#fff" opacity="0.4"/><rect x="34" y="15" width="1" height="1" fill="#fff" opacity="0.3"/><rect x="617" y="23" width="1" height="1" fill="#fff" opacity="0.2"/><rect x="305" y="12" width="1" height="1" fill="#fff" opacity="0.4"/><rect x="557" y="39" width="1" height="1" fill="#fff" opacity="0.4"/><rect x="49" y="19" width="1" height="1" fill="#fff" opacity="0.3"/><rect x="563" y="33" width="1" height="1" fill="#fff" opacity="0.15"/><rect x="104" y="36" width="1" height="1" fill="#fff" opacity="0.2"/><rect x="117" y="21" width="1" height="1" fill="#fff" opacity="0.15"/><rect x="3" y="19" width="1" height="1" fill="#fff" opacity="0.2"/><rect x="74" y="26" width="1" height="1" fill="#fff" opacity="0.4"/><rect x="342" y="4" width="1" height="1" fill="#fff" opacity="0.15"/><rect x="548" y="34" width="1" height="1" fill="#fff" opacity="0.2"/><rect x="238" y="6" width="1" height="1" fill="#fff" opacity="0.2"/><rect x="337" y="4" width="1" height="1" fill="#fff" opacity="0.2"/><rect x="293" y="16" width="1" height="1" fill="#fff" opacity="0.2"/><rect x="32" y="19" width="1" height="1" fill="#fff" opacity="0.15"/><rect x="594" y="27" width="1" height="1" fill="#fff" opacity="0.2"/><rect x="373" y="18" width="1" height="1" fill="#fff" opacity="0.2"/><rect x="307" y="37" width="1" height="1" fill="#fff" opacity="0.2"/><rect x="337" y="12" width="1" height="1" fill="#fff" opacity="0.2"/><rect x="387" y="19" width="1" height="1" fill="#fff" opacity="0.4"/><rect x="612" y="22" width="1" height="1" fill="#fff" opacity="0.4"/><rect x="801" y="32" width="1" height="1" fill="#fff" opacity="0.4"/><rect x="165" y="18" width="1" height="1" fill="#fff" opacity="0.15"/><rect x="38" y="13" width="1" height="1" fill="#fff" opacity="0.3"/><rect x="501" y="24" width="1" height="1" fill="#fff" opacity="0.3"/><rect x="413" y="27" width="1" height="1" fill="#fff" opacity="0.2"/><rect x="217" y="17" width="1" height="1" fill="#fff" opacity="0.2"/><rect x="587" y="37" width="1" height="1" fill="#fff" opacity="0.2"/><rect x="617" y="34" width="1" height="1" fill="#fff" opacity="0.15"/><rect x="16" y="15" width="1" height="1" fill="#fff" opacity="0.4"/><rect x="363" y="40" width="1" height="1" fill="#fff" opacity="0.4"/><rect x="262" y="36" width="1" height="1" fill="#fff" opacity="0.15"/><rect x="244" y="29" width="1" height="1" fill="#fff" opacity="0.4"/><rect x="33" y="7" width="1" height="1" fill="#fff" opacity="0.2"/><rect x="26" y="15" width="1" height="1" fill="#fff" opacity="0.4"/><rect x="386" y="33" width="1" height="1" fill="#fff" opacity="0.3"/><rect x="253" y="21" width="1" height="1" fill="#fff" opacity="0.4"/><rect x="119" y="10" width="1" height="1" fill="#fff" opacity="0.3"/><rect x="431" y="21" width="1" height="1" fill="#fff" opacity="0.2"/><rect x="312" y="41" width="1" height="1" fill="#fff" opacity="0.2"/><rect x="83" y="17" width="1" height="1" fill="#fff" opacity="0.2"/><rect x="113" y="40" width="1" height="1" fill="#fff" opacity="0.4"/><rect x="456" y="38" width="1" height="1" fill="#fff" opacity="0.3"/><rect x="532" y="3" width="1" height="1" fill="#fff" opacity="0.2"/><rect x="450" y="17" width="1" height="1" fill="#fff" opacity="0.15"/><rect x="770" y="41" width="1" height="1" fill="#fff" opacity="0.2"/><rect x="631" y="12" width="1" height="1" fill="#fff" opacity="0.4"/><rect x="97" y="23" width="1" height="1" fill="#fff" opacity="0.4"/><rect x="309" y="15" width="1" height="1" fill="#fff" opacity="0.4"/><rect x="567" y="10" width="1" height="1" fill="#fff" opacity="0.4"/><rect x="163" y="36" width="1" height="1" fill="#fff" opacity="0.3"/><rect x="536" y="11" width="1" height="1" fill="#fff" opacity="0.15"/><rect x="599" y="43" width="1" height="1" fill="#fff" opacity="0.2"/><rect x="386" y="12" width="1" height="1" fill="#fff" opacity="0.3"/><rect x="564" y="1" width="1" height="1" fill="#fff" opacity="0.4"/><rect x="97" y="43" width="1" height="1" fill="#fff" opacity="0.4"/><rect x="219" y="18" width="1" height="1" fill="#fff" opacity="0.3"/><rect x="378" y="15" width="1" height="1" fill="#fff" opacity="0.3"/><rect x="58" y="2" width="1" height="1" fill="#fff" opacity="0.3"/><rect x="719" y="27" width="1" height="1" fill="#fff" opacity="0.3"/><rect x="657" y="42" width="1" height="1" fill="#fff" opacity="0.4"/><rect x="310" y="16" width="1" height="1" fill="#fff" opacity="0.3"/><rect x="25" y="33" width="1" height="1" fill="#fff" opacity="0.2"/><rect x="622" y="29" width="1" height="1" fill="#fff" opacity="0.4"/><rect x="494" y="3" width="1" height="1" fill="#fff" opacity="0.15"/><rect x="669" y="41" width="1" height="1" fill="#fff" opacity="0.4"/><rect x="779" y="18" width="1" height="1" fill="#fff" opacity="0.2"/><rect x="551" y="13" width="1" height="1" fill="#fff" opacity="0.4"/><rect x="290" y="46" width="1" height="1" fill="#fff" opacity="0.2"/><rect x="488" y="13" width="1" height="1" fill="#fff" opacity="0.3"/><rect x="548" y="11" width="1" height="1" fill="#fff" opacity="0.15"/><rect x="747" y="46" width="1" height="1" fill="#fff" opacity="0.15"/><rect x="193" y="23" width="1" height="1" fill="#fff" opacity="0.15"/><rect x="503" y="26" width="1" height="1" fill="#fff" opacity="0.3"/><rect x="213" y="5" width="1" height="1" fill="#fff" opacity="0.15"/><rect x="253" y="34" width="1" height="1" fill="#fff" opacity="0.4"/><rect x="553" y="45" width="1" height="1" fill="#fff" opacity="0.2"/><rect x="129" y="29" width="1" height="1" fill="#fff" opacity="0.4"/><rect x="649" y="14" width="1" height="1" fill="#fff" opacity="0.4"/><rect x="230" y="35" width="1" height="1" fill="#fff" opacity="0.4"/><rect x="191" y="12" width="1" height="1" fill="#fff" opacity="0.3"/><rect x="569" y="43" width="1" height="1" fill="#fff" opacity="0.2"/><rect x="707" y="46" width="1" height="1" fill="#fff" opacity="0.15"/><rect x="714" y="15" width="1" height="1" fill="#fff" opacity="0.4"/><rect x="413" y="32" width="1" height="1" fill="#fff" opacity="0.15"/><rect x="131" y="41" width="1" height="1" fill="#fff" opacity="0.4"/><rect x="43" y="12" width="1" height="1" fill="#fff" opacity="0.4"/><rect x="204" y="30" width="1" height="1" fill="#fff" opacity="0.3"/><rect x="577" y="15" width="1" height="1" fill="#fff" opacity="0.3"/><rect x="690" y="10" width="1" height="1" fill="#fff" opacity="0.2"/><rect x="457" y="20" width="1" height="1" fill="#fff" opacity="0.2"/><rect x="502" y="39" width="1" height="1" fill="#fff" opacity="0.2"/><rect x="101" y="18" width="1" height="1" fill="#fff" opacity="0.3"/><rect x="186" y="9" width="1" height="1" fill="#fff" opacity="0.15"/><rect x="380" y="33" width="1" height="1" fill="#fff" opacity="0.2"/><rect x="216" y="13" width="1" height="1" fill="#fff" opacity="0.3"/><rect x="509" y="19" width="1" height="1" fill="#fff" opacity="0.2"/><rect x="39" y="34" width="1" height="1" fill="#fff" opacity="0.15"/><rect x="702" y="9" width="1" height="1" fill="#fff" opacity="0.3"/><rect x="589" y="47" width="1" height="1" fill="#fff" opacity="0.15"/><rect x="326" y="43" width="1" height="1" fill="#fff" opacity="0.4"/><rect x="138" y="3" width="1" height="1" fill="#fff" opacity="0.4"/><rect x="645" y="39" width="1" height="1" fill="#fff" opacity="0.3"/><rect x="180" y="34" width="1" height="1" fill="#fff" opacity="0.4"/><rect x="617" y="46" width="1" height="1" fill="#fff" opacity="0.4"/><rect x="544" y="10" width="1" height="1" fill="#fff" opacity="0.3"/><rect x="645" y="7" width="1" height="1" fill="#fff" opacity="0.2"/><rect x="672" y="26" width="1" height="1" fill="#fff" opacity="0.3"/><rect x="710" y="20" width="1" height="1" fill="#fff" opacity="0.2"/><rect x="261" y="1" width="1" height="1" fill="#fff" opacity="0.2"/><rect x="221" y="19" width="1" height="1" fill="#fff" opacity="0.3"/><rect x="183" y="23" width="1" height="1" fill="#fff" opacity="0.3"/><rect x="444" y="26" width="1" height="1" fill="#fff" opacity="0.2"/><rect x="52" y="42" width="1" height="1" fill="#fff" opacity="0.3"/><rect x="540" y="0" width="1" height="1" fill="#fff" opacity="0.3"/><rect x="390" y="47" width="1" height="1" fill="#fff" opacity="0.2"/><rect x="799" y="19" width="1" height="1" fill="#fff" opacity="0.15"/><rect x="334" y="38" width="1" height="1" fill="#fff" opacity="0.4"/><rect x="449" y="10" width="1" height="1" fill="#fff" opacity="0.3"/><rect x="223" y="44" width="1" height="1" fill="#fff" opacity="0.2"/><rect x="801" y="21" width="1" height="1" fill="#fff" opacity="0.15"/><rect x="142" y="1" width="1" height="1" fill="#fff" opacity="0.2"/><rect x="434" y="32" width="1" height="1" fill="#fff" opacity="0.3"/><rect x="289" y="35" width="1" height="1" fill="#fff" opacity="0.3"/><rect x="51" y="22" width="1" height="1" fill="#fff" opacity="0.2"/><rect x="51" y="17" width="1" height="1" fill="#fff" opacity="0.3"/><rect x="653" y="37" width="1" height="1" fill="#fff" opacity="0.4"/><rect x="322" y="38" width="1" height="1" fill="#fff" opacity="0.15"/><rect x="755" y="23" width="1" height="1" fill="#fff" opacity="0.4"/><rect x="202" y="43" width="1" height="1" fill="#fff" opacity="0.15"/><rect x="8" y="7" width="1" height="1" fill="#fff" opacity="0.3"/><rect x="313" y="17" width="1" height="1" fill="#fff" opacity="0.3"/><rect x="653" y="17" width="1" height="1" fill="#fff" opacity="0.4"/><rect x="285" y="13" width="1" height="1" fill="#fff" opacity="0.3"/><rect x="479" y="12" width="1" height="1" fill="#fff" opacity="0.2"/><rect x="598" y="10" width="1" height="1" fill="#fff" opacity="0.2"/><rect x="440" y="32" width="1" height="1" fill="#fff" opacity="0.2"/><rect x="280" y="7" width="1" height="1" fill="#fff" opacity="0.3"/><rect x="282" y="20" width="1" height="1" fill="#fff" opacity="0.15"/><rect x="322" y="2" width="1" height="1" fill="#fff" opacity="0.15"/><rect x="259" y="25" width="1" height="1" fill="#fff" opacity="0.2"/><rect x="17" y="8" width="1" height="1" fill="#fff" opacity="0.15"/><rect x="608" y="5" width="1" height="1" fill="#fff" opacity="0.3"/><rect x="347" y="45" width="1" height="1" fill="#fff" opacity="0.2"/><rect x="402" y="37" width="1" height="1" fill="#fff" opacity="0.2"/><rect x="655" y="3" width="1" height="1" fill="#fff" opacity="0.4"/><rect x="764" y="15" width="1" height="1" fill="#fff" opacity="0.2"/><rect x="627" y="25" width="1" height="1" fill="#fff" opacity="0.15"/><rect x="119" y="30" width="1" height="1" fill="#fff" opacity="0.4"/><rect x="734" y="3" width="1" height="1" fill="#fff" opacity="0.3"/><rect x="715" y="40" width="1" height="1" fill="#fff" opacity="0.4"/><rect x="407" y="27" width="1" height="1" fill="#fff" opacity="0.15"/><rect x="98" y="35" width="1" height="1" fill="#fff" opacity="0.4"/><rect x="352" y="22" width="1" height="1" fill="#fff" opacity="0.4"/><rect x="404" y="18" width="1" height="1" fill="#fff" opacity="0.15"/><rect x="415" y="2" width="1" height="1" fill="#fff" opacity="0.4"/><rect x="360" y="28" width="1" height="1" fill="#fff" opacity="0.15"/><rect x="751" y="7" width="1" height="1" fill="#fff" opacity="0.4"/><rect x="264" y="12" width="1" height="1" fill="#fff" opacity="0.3"/><rect x="152" y="22" width="1" height="1" fill="#fff" opacity="0.4"/><rect x="42" y="46" width="1" height="1" fill="#fff" opacity="0.4"/><rect x="90" y="9" width="1" height="1" fill="#fff" opacity="0.2"/><rect x="668" y="37" width="1" height="1" fill="#fff" opacity="0.3"/><rect x="801" y="3" width="1" height="1" fill="#fff" opacity="0.15"/><rect x="574" y="12" width="1" height="1" fill="#fff" opacity="0.3"/><rect x="366" y="25" width="1" height="1" fill="#fff" opacity="0.4"/><rect x="158" y="13" width="1" height="1" fill="#fff" opacity="0.2"/><rect x="59" y="26" width="1" height="1" fill="#fff" opacity="0.4"/><rect x="707" y="3" width="1" height="1" fill="#fff" opacity="0.4"/><rect x="689" y="36" width="1" height="1" fill="#fff" opacity="0.15"/><rect x="642" y="7" width="1" height="1" fill="#fff" opacity="0.3"/><rect x="144" y="16" width="1" height="1" fill="#fff" opacity="0.3"/><rect x="770" y="10" width="1" height="1" fill="#fff" opacity="0.3"/><rect x="95" y="9" width="1" height="1" fill="#fff" opacity="0.4"/><rect x="25" y="32" width="1" height="1" fill="#fff" opacity="0.4"/><rect x="727" y="3" width="1" height="1" fill="#fff" opacity="0.2"/><rect x="429" y="15" width="1" height="1" fill="#fff" opacity="0.2"/><rect x="451" y="47" width="1" height="1" fill="#fff" opacity="0.4"/><rect x="12" y="16" width="1" height="1" fill="#fff" opacity="0.3"/><rect x="681" y="44" width="1" height="1" fill="#fff" opacity="0.2"/><rect x="560" y="8" width="1" height="1" fill="#fff" opacity="0.2"/><rect x="138" y="27" width="1" height="1" fill="#fff" opacity="0.15"/><rect x="104" y="5" width="1" height="1" fill="#fff" opacity="0.3"/><rect x="492" y="17" width="1" height="1" fill="#fff" opacity="0.2"/><rect x="6" y="3" width="1" height="1" fill="#fff" opacity="0.2"/><rect x="593" y="17" width="1" height="1" fill="#fff" opacity="0.3"/><rect x="620" y="9" width="1" height="1" fill="#fff" opacity="0.15"/><rect x="509" y="20" width="1" height="1" fill="#fff" opacity="0.4"/><rect x="225" y="6" width="1" height="1" fill="#fff" opacity="0.15"/><rect x="759" y="16" width="1" height="1" fill="#fff" opacity="0.4"/><rect x="189" y="27" width="1" height="1" fill="#fff" opacity="0.3"/><rect x="99" y="41" width="1" height="1" fill="#fff" opacity="0.15"/><rect x="545" y="21" width="1" height="1" fill="#fff" opacity="0.4"/><rect x="312" y="35" width="1" height="1" fill="#fff" opacity="0.2"/><rect x="361" y="3" width="1" height="1" fill="#fff" opacity="0.4"/><rect x="269" y="27" width="1" height="1" fill="#fff" opacity="0.3"/><rect x="236" y="33" width="1" height="1" fill="#fff" opacity="0.2"/><rect x="12" y="18" width="1" height="1" fill="#fff" opacity="0.3"/><rect x="313" y="13" width="1" height="1" fill="#fff" opacity="0.15"/><rect x="661" y="40" width="1" height="1" fill="#fff" opacity="0.15"/><rect x="440" y="5" width="1" height="1" fill="#fff" opacity="0.2"/><rect x="71" y="17" width="1" height="1" fill="#fff" opacity="0.3"/><rect x="24" y="28" width="1" height="1" fill="#fff" opacity="0.3"/><rect x="798" y="38" width="1" height="1" fill="#fff" opacity="0.15"/><rect x="538" y="7" width="1" height="1" fill="#fff" opacity="0.15"/><rect x="292" y="22" width="1" height="1" fill="#fff" opacity="0.3"/><rect x="387" y="31" width="1" height="1" fill="#fff" opacity="0.15"/><rect x="782" y="46" width="1" height="1" fill="#fff" opacity="0.4"/><rect x="349" y="11" width="1" height="1" fill="#fff" opacity="0.15"/><rect x="804" y="3" width="1" height="1" fill="#fff" opacity="0.4"/><rect x="529" y="37" width="1" height="1" fill="#fff" opacity="0.2"/><rect x="417" y="27" width="1" height="1" fill="#fff" opacity="0.4"/><rect x="298" y="7" width="1" height="1" fill="#fff" opacity="0.4"/><rect x="77" y="37" width="1" height="1" fill="#fff" opacity="0.15"/><rect x="134" y="31" width="1" height="1" fill="#fff" opacity="0.3"/><rect x="535" y="46" width="1" height="1" fill="#fff" opacity="0.4"/><rect x="625" y="6" width="1" height="1" fill="#fff" opacity="0.4"/><rect x="126" y="17" width="1" height="1" fill="#fff" opacity="0.3"/><rect x="761" y="42" width="1" height="1" fill="#fff" opacity="0.15"/><rect x="88" y="19" width="1" height="1" fill="#fff" opacity="0.15"/><rect x="626" y="4" width="1" height="1" fill="#fff" opacity="0.15"/><rect x="55" y="11" width="1" height="1" fill="#fff" opacity="0.15"/><rect x="411" y="14" width="1" height="1" fill="#fff" opacity="0.3"/><rect x="627" y="12" width="1" height="1" fill="#fff" opacity="0.4"/><rect x="376" y="47" width="1" height="1" fill="#fff" opacity="0.4"/><rect x="137" y="5" width="1" height="1" fill="#fff" opacity="0.2"/><rect x="686" y="5" width="1" height="1" fill="#fff" opacity="0.2"/><rect x="116" y="27" width="1" height="1" fill="#fff" opacity="0.2"/><rect x="328" y="29" width="1" height="1" fill="#fff" opacity="0.15"/><rect x="333" y="1" width="1" height="1" fill="#fff" opacity="0.2"/><rect x="642" y="5" width="1" height="1" fill="#fff" opacity="0.4"/><rect x="126" y="25" width="1" height="1" fill="#fff" opacity="0.15"/><rect x="326" y="23" width="1" height="1" fill="#fff" opacity="0.15"/><rect x="314" y="14" width="1" height="1" fill="#fff" opacity="0.2"/><rect x="210" y="5" width="1" height="1" fill="#fff" opacity="0.4"/><rect x="265" y="23" width="1" height="1" fill="#fff" opacity="0.2"/><rect x="458" y="24" width="1" height="1" fill="#fff" opacity="0.15"/><rect x="318" y="14" width="1" height="1" fill="#fff" opacity="0.3"/><rect x="177" y="4" width="1" height="1" fill="#fff" opacity="0.4"/><rect x="310" y="30" width="1" height="1" fill="#fff" opacity="0.3"/><rect x="363" y="2" width="1" height="1" fill="#fff" opacity="0.15"/><rect x="132" y="18" width="1" height="1" fill="#fff" opacity="0.3"/><rect x="322" y="10" width="1" height="1" fill="#fff" opacity="0.15"/><rect x="575" y="2" width="1" height="1" fill="#fff" opacity="0.3"/><rect x="390" y="11" width="1" height="1" fill="#fff" opacity="0.4"/><rect x="591" y="18" width="1" height="1" fill="#fff" opacity="0.15"/><rect x="6" y="28" width="1" height="1" fill="#fff" opacity="0.2"/><rect x="295" y="28" width="1" height="1" fill="#fff" opacity="0.3"/><rect x="677" y="10" width="1" height="1" fill="#fff" opacity="0.15"/><rect x="254" y="23" width="1" height="1" fill="#fff" opacity="0.3"/><rect x="43" y="4" width="1" height="1" fill="#fff" opacity="0.3"/><rect x="475" y="38" width="1" height="1" fill="#fff" opacity="0.4"/><rect x="522" y="18" width="1" height="1" fill="#fff" opacity="0.15"/><rect x="230" y="32" width="1" height="1" fill="#fff" opacity="0.15"/><rect x="320" y="11" width="1" height="1" fill="#fff" opacity="0.3"/><rect x="265" y="15" width="1" height="1" fill="#fff" opacity="0.2"/><rect x="635" y="30" width="1" height="1" fill="#fff" opacity="0.15"/><rect x="806" y="23" width="1" height="1" fill="#fff" opacity="0.4"/><rect x="504" y="26" width="1" height="1" fill="#fff" opacity="0.3"/><rect x="515" y="1" width="1" height="1" fill="#fff" opacity="0.2"/><rect x="467" y="0" width="1" height="1" fill="#fff" opacity="0.4"/><rect x="337" y="32" width="1" height="1" fill="#fff" opacity="0.15"/><rect x="139" y="4" width="1" height="1" fill="#fff" opacity="0.2"/><rect x="305" y="21" width="1" height="1" fill="#fff" opacity="0.4"/><rect x="646" y="21" width="1" height="1" fill="#fff" opacity="0.15"/><rect x="673" y="45" width="1" height="1" fill="#fff" opacity="0.3"/><rect x="537" y="26" width="1" height="1" fill="#fff" opacity="0.15"/><rect x="567" y="19" width="1" height="1" fill="#fff" opacity="0.15"/><rect x="743" y="10" width="1" height="1" fill="#fff" opacity="0.4"/><rect x="261" y="7" width="1" height="1" fill="#fff" opacity="0.15"/><rect x="125" y="13" width="1" height="1" fill="#fff" opacity="0.4"/><rect x="25" y="20" width="1" height="1" fill="#fff" opacity="0.4"/><rect x="161" y="33" width="1" height="1" fill="#fff" opacity="0.4"/><rect x="398" y="32" width="1" height="1" fill="#fff" opacity="0.4"/><rect x="412" y="23" width="1" height="1" fill="#fff" opacity="0.2"/><rect x="623" y="15" width="1" height="1" fill="#fff" opacity="0.15"/><rect x="279" y="8" width="1" height="1" fill="#fff" opacity="0.3"/><rect x="304" y="38" width="1" height="1" fill="#fff" opacity="0.4"/><rect x="365" y="28" width="1" height="1" fill="#fff" opacity="0.4"/><rect x="289" y="27" width="1" height="1" fill="#fff" opacity="0.4"/><rect x="567" y="19" width="1" height="1" fill="#fff" opacity="0.15"/><rect x="562" y="11" width="1" height="1" fill="#fff" opacity="0.3"/><rect x="283" y="19" width="1" height="1" fill="#fff" opacity="0.15"/><rect x="207" y="3" width="1" height="1" fill="#fff" opacity="0.3"/><rect x="304" y="34" width="1" height="1" fill="#fff" opacity="0.4"/><rect x="732" y="3" width="1" height="1" fill="#fff" opacity="0.2"/><rect x="786" y="43" width="1" height="1" fill="#fff" opacity="0.4"/><rect x="312" y="6" width="1" height="1" fill="#fff" opacity="0.2"/><rect x="607" y="5" width="1" height="1" fill="#fff" opacity="0.3"/><rect x="404" y="7" width="1" height="1" fill="#fff" opacity="0.3"/><rect x="458" y="26" width="1" height="1" fill="#fff" opacity="0.3"/><rect x="395" y="21" width="1" height="1" fill="#fff" opacity="0.3"/><rect x="649" y="5" width="1" height="1" fill="#fff" opacity="0.2"/><rect x="176" y="9" width="1" height="1" fill="#fff" opacity="0.3"/><rect x="97" y="36" width="1" height="1" fill="#fff" opacity="0.2"/><rect x="725" y="43" width="1" height="1" fill="#fff" opacity="0.3"/><rect x="293" y="45" width="1" height="1" fill="#fff" opacity="0.3"/><rect x="490" y="39" width="1" height="1" fill="#fff" opacity="0.3"/><rect x="89" y="17" width="1" height="1" fill="#fff" opacity="0.2"/><rect x="433" y="12" width="1" height="1" fill="#fff" opacity="0.3"/><rect x="231" y="26" width="1" height="1" fill="#fff" opacity="0.3"/><rect x="391" y="13" width="1" height="1" fill="#fff" opacity="0.3"/><rect x="640" y="44" width="1" height="1" fill="#fff" opacity="0.2"/><rect x="704" y="8" width="1" height="1" fill="#fff" opacity="0.2"/><rect x="491" y="26" width="1" height="1" fill="#fff" opacity="0.2"/><rect x="431" y="31" width="1" height="1" fill="#fff" opacity="0.3"/><rect x="247" y="20" width="1" height="1" fill="#fff" opacity="0.3"/><rect x="525" y="25" width="1" height="1" fill="#fff" opacity="0.4"/><rect x="365" y="17" width="1" height="1" fill="#fff" opacity="0.2"/><rect x="761" y="24" width="1" height="1" fill="#fff" opacity="0.3"/><rect x="714" y="4" width="1" height="1" fill="#fff" opacity="0.15"/><rect x="463" y="44" width="1" height="1" fill="#fff" opacity="0.15"/><rect x="244" y="0" width="1" height="1" fill="#fff" opacity="0.15"/><rect x="157" y="17" width="1" height="1" fill="#fff" opacity="0.3"/><rect x="703" y="3" width="1" height="1" fill="#fff" opacity="0.15"/><rect x="113" y="19" width="1" height="1" fill="#fff" opacity="0.2"/><rect x="792" y="32" width="1" height="1" fill="#fff" opacity="0.15"/><rect x="352" y="32" width="1" height="1" fill="#fff" opacity="0.15"/><rect x="425" y="17" width="1" height="1" fill="#fff" opacity="0.4"/><rect x="746" y="41" width="1" height="1" fill="#fff" opacity="0.15"/><rect x="336" y="23" width="1" height="1" fill="#fff" opacity="0.15"/><rect x="559" y="1" width="1" height="1" fill="#fff" opacity="0.15"/><rect x="109" y="14" width="1" height="1" fill="#fff" opacity="0.3"/><rect x="177" y="13" width="1" height="1" fill="#fff" opacity="0.2"/><rect x="787" y="45" width="1" height="1" fill="#fff" opacity="0.2"/><rect x="692" y="44" width="1" height="1" fill="#fff" opacity="0.15"/><rect x="491" y="37" width="1" height="1" fill="#fff" opacity="0.3"/><rect x="752" y="4" width="1" height="1" fill="#fff" opacity="0.2"/><rect x="773" y="1" width="1" height="1" fill="#fff" opacity="0.15"/><rect x="240" y="14" width="1" height="1" fill="#fff" opacity="0.15"/><rect x="334" y="7" width="1" height="1" fill="#fff" opacity="0.2"/><rect x="555" y="24" width="1" height="1" fill="#fff" opacity="0.15"/><rect x="1" y="3" width="1" height="1" fill="#fff" opacity="0.2"/><rect x="786" y="39" width="1" height="1" fill="#fff" opacity="0.4"/><rect x="283" y="10" width="1" height="1" fill="#fff" opacity="0.4"/><rect x="12" y="36" width="1" height="1" fill="#fff" opacity="0.3"/><rect x="39" y="17" width="1" height="1" fill="#fff" opacity="0.3"/><rect x="420" y="17" width="1" height="1" fill="#fff" opacity="0.2"/><rect x="750" y="19" width="1" height="1" fill="#fff" opacity="0.2"/><rect x="121" y="12" width="1" height="1" fill="#fff" opacity="0.4"/><rect x="178" y="43" width="1" height="1" fill="#fff" opacity="0.2"/><rect x="192" y="31" width="1" height="1" fill="#fff" opacity="0.3"/><rect x="480" y="27" width="1" height="1" fill="#fff" opacity="0.15"/><rect x="149" y="11" width="1" height="1" fill="#fff" opacity="0.3"/><rect x="411" y="35" width="1" height="1" fill="#fff" opacity="0.2"/><rect x="543" y="37" width="1" height="1" fill="#fff" opacity="0.15"/><rect x="63" y="36" width="1" height="1" fill="#fff" opacity="0.2"/><rect x="356" y="2" width="1" height="1" fill="#fff" opacity="0.2"/><rect x="299" y="17" width="1" height="1" fill="#fff" opacity="0.15"/><rect x="798" y="18" width="1" height="1" fill="#fff" opacity="0.2"/><rect x="338" y="32" width="1" height="1" fill="#fff" opacity="0.2"/><rect x="273" y="37" width="1" height="1" fill="#fff" opacity="0.4"/><rect x="731" y="26" width="1" height="1" fill="#fff" opacity="0.15"/><rect x="384" y="38" width="1" height="1" fill="#fff" opacity="0.15"/><rect x="42" y="2" width="1" height="1" fill="#fff" opacity="0.15"/><rect x="342" y="7" width="1" height="1" fill="#fff" opacity="0.15"/><rect x="166" y="41" width="1" height="1" fill="#fff" opacity="0.2"/><rect x="751" y="16" width="1" height="1" fill="#fff" opacity="0.2"/><rect x="114" y="34" width="1" height="1" fill="#fff" opacity="0.15"/><rect x="155" y="6" width="1" height="1" fill="#fff" opacity="0.2"/><rect x="711" y="34" width="1" height="1" fill="#fff" opacity="0.4"/><rect x="296" y="34" width="1" height="1" fill="#fff" opacity="0.3"/><rect x="118" y="41" width="1" height="1" fill="#fff" opacity="0.2"/><rect x="585" y="32" width="1" height="1" fill="#fff" opacity="0.15"/><rect x="247" y="9" width="1" height="1" fill="#fff" opacity="0.15"/><rect x="221" y="25" width="1" height="1" fill="#fff" opacity="0.4"/><rect x="614" y="25" width="1" height="1" fill="#fff" opacity="0.15"/><rect x="66" y="10" width="1" height="1" fill="#fff" opacity="0.15"/><rect x="743" y="46" width="1" height="1" fill="#fff" opacity="0.2"/><rect x="129" y="16" width="1" height="1" fill="#fff" opacity="0.15"/><rect x="237" y="37" width="1" height="1" fill="#fff" opacity="0.4"/><rect x="282" y="47" width="1" height="1" fill="#fff" opacity="0.4"/><rect x="375" y="9" width="1" height="1" fill="#fff" opacity="0.4"/><rect x="788" y="1" width="1" height="1" fill="#fff" opacity="0.4"/><rect x="438" y="13" width="1" height="1" fill="#fff" opacity="0.15"/><rect x="139" y="35" width="1" height="1" fill="#fff" opacity="0.2"/><rect x="775" y="1" width="1" height="1" fill="#fff" opacity="0.4"/><rect x="644" y="23" width="1" height="1" fill="#fff" opacity="0.15"/><rect x="375" y="9" width="1" height="1" fill="#fff" opacity="0.15"/><rect x="134" y="46" width="1" height="1" fill="#fff" opacity="0.3"/><rect x="210" y="29" width="1" height="1" fill="#fff" opacity="0.3"/><rect x="554" y="12" width="1" height="1" fill="#fff" opacity="0.3"/><rect x="134" y="7" width="1" height="1" fill="#fff" opacity="0.4"/><rect x="346" y="28" width="1" height="1" fill="#fff" opacity="0.3"/><rect x="268" y="43" width="1" height="1" fill="#fff" opacity="0.2"/><rect x="546" y="29" width="1" height="1" fill="#fff" opacity="0.2"/><rect x="378" y="26" width="1" height="1" fill="#fff" opacity="0.3"/><rect x="617" y="44" width="1" height="1" fill="#fff" opacity="0.3"/><rect x="190" y="27" width="1" height="1" fill="#fff" opacity="0.2"/><rect x="566" y="16" width="1" height="1" fill="#fff" opacity="0.15"/><rect x="511" y="0" width="1" height="1" fill="#fff" opacity="0.4"/><rect x="451" y="23" width="1" height="1" fill="#fff" opacity="0.4"/><rect x="553" y="31" width="1" height="1" fill="#fff" opacity="0.4"/><rect x="217" y="27" width="1" height="1" fill="#fff" opacity="0.4"/><rect x="45" y="15" width="1" height="1" fill="#fff" opacity="0.4"/><rect x="50" y="7" width="1" height="1" fill="#fff" opacity="0.15"/><rect x="226" y="21" width="1" height="1" fill="#fff" opacity="0.15"/><rect x="226" y="2" width="1" height="1" fill="#fff" opacity="0.4"/><rect x="643" y="12" width="1" height="1" fill="#fff" opacity="0.15"/><rect x="344" y="26" width="1" height="1" fill="#fff" opacity="0.15"/><rect x="395" y="23" width="1" height="1" fill="#fff" opacity="0.3"/><rect x="255" y="31" width="1" height="1" fill="#fff" opacity="0.3"/><rect x="747" y="30" width="1" height="1" fill="#fff" opacity="0.4"/><rect x="648" y="46" width="1" height="1" fill="#fff" opacity="0.2"/><rect x="552" y="37" width="1" height="1" fill="#fff" opacity="0.3"/><rect x="653" y="38" width="1" height="1" fill="#fff" opacity="0.2"/><rect x="95" y="22" width="1" height="1" fill="#fff" opacity="0.2"/><rect x="36" y="38" width="1" height="1" fill="#fff" opacity="0.3"/><rect x="380" y="30" width="1" height="1" fill="#fff" opacity="0.4"/><rect x="752" y="30" width="1" height="1" fill="#fff" opacity="0.15"/><rect x="787" y="8" width="1" height="1" fill="#fff" opacity="0.3"/><rect x="792" y="41" width="1" height="1" fill="#fff" opacity="0.3"/><rect x="205" y="29" width="1" height="1" fill="#fff" opacity="0.3"/><rect x="794" y="29" width="1" height="1" fill="#fff" opacity="0.2"/><rect x="604" y="31" width="1" height="1" fill="#fff" opacity="0.4"/><rect x="699" y="36" width="1" height="1" fill="#fff" opacity="0.15"/><rect x="459" y="44" width="1" height="1" fill="#fff" opacity="0.4"/><rect x="181" y="33" width="1" height="1" fill="#fff" opacity="0.15"/><rect x="18" y="8" width="1" height="1" fill="#fff" opacity="0.2"/><rect x="186" y="29" width="1" height="1" fill="#fff" opacity="0.15"/><rect x="560" y="24" width="1" height="1" fill="#fff" opacity="0.3"/><rect x="376" y="32" width="1" height="1" fill="#fff" opacity="0.15"/><rect x="522" y="32" width="1" height="1" fill="#fff" opacity="0.15"/><rect x="266" y="44" width="1" height="1" fill="#fff" opacity="0.15"/><rect x="234" y="45" width="1" height="1" fill="#fff" opacity="0.3"/><rect x="776" y="36" width="1" height="1" fill="#fff" opacity="0.3"/><rect x="88" y="10" width="1" height="1" fill="#fff" opacity="0.4"/><rect x="53" y="5" width="1" height="1" fill="#fff" opacity="0.15"/><rect x="381" y="35" width="1" height="1" fill="#fff" opacity="0.2"/><rect x="232" y="44" width="1" height="1" fill="#fff" opacity="0.3"/><rect x="195" y="15" width="1" height="1" fill="#fff" opacity="0.15"/><rect x="274" y="45" width="1" height="1" fill="#fff" opacity="0.3"/><rect x="425" y="45" width="1" height="1" fill="#fff" opacity="0.4"/><rect x="174" y="43" width="1" height="1" fill="#fff" opacity="0.4"/><rect x="739" y="4" width="1" height="1" fill="#fff" opacity="0.4"/><rect x="349" y="32" width="1" height="1" fill="#fff" opacity="0.3"/><rect x="473" y="20" width="1" height="1" fill="#fff" opacity="0.15"/><rect x="425" y="9" width="1" height="1" fill="#fff" opacity="0.15"/><rect x="496" y="9" width="1" height="1" fill="#fff" opacity="0.3"/><rect x="634" y="27" width="1" height="1" fill="#fff" opacity="0.3"/><rect x="216" y="37" width="1" height="1" fill="#fff" opacity="0.15"/><rect x="569" y="21" width="1" height="1" fill="#fff" opacity="0.4"/><rect x="787" y="45" width="1" height="1" fill="#fff" opacity="0.2"/><rect x="769" y="42" width="1" height="1" fill="#fff" opacity="0.15"/><rect x="444" y="0" width="1" height="1" fill="#fff" opacity="0.4"/><rect x="560" y="21" width="1" height="1" fill="#fff" opacity="0.2"/><rect x="802" y="23" width="1" height="1" fill="#fff" opacity="0.2"/><rect x="325" y="31" width="1" height="1" fill="#fff" opacity="0.4"/><rect x="37" y="33" width="1" height="1" fill="#fff" opacity="0.2"/><rect x="198" y="27" width="1" height="1" fill="#fff" opacity="0.4"/><rect x="14" y="3" width="1" height="1" fill="#fff" opacity="0.4"/><rect x="589" y="29" width="1" height="1" fill="#fff" opacity="0.2"/><rect x="769" y="40" width="1" height="1" fill="#fff" opacity="0.4"/><rect x="795" y="41" width="1" height="1" fill="#fff" opacity="0.15"/><rect x="271" y="1" width="1" height="1" fill="#fff" opacity="0.4"/><rect x="596" y="41" width="1" height="1" fill="#fff" opacity="0.2"/><rect x="207" y="37" width="1" height="1" fill="#fff" opacity="0.3"/><rect x="361" y="17" width="1" height="1" fill="#fff" opacity="0.4"/><rect x="165" y="20" width="1" height="1" fill="#fff" opacity="0.2"/><rect x="503" y="19" width="1" height="1" fill="#fff" opacity="0.3"/><rect x="501" y="4" width="1" height="1" fill="#fff" opacity="0.4"/><rect x="504" y="26" width="1" height="1" fill="#fff" opacity="0.4"/><rect x="546" y="24" width="1" height="1" fill="#fff" opacity="0.4"/><rect x="714" y="4" width="1" height="1" fill="#fff" opacity="0.2"/><rect x="239" y="34" width="1" height="1" fill="#fff" opacity="0.4"/><rect x="351" y="31" width="1" height="1" fill="#fff" opacity="0.2"/><rect x="484" y="4" width="1" height="1" fill="#fff" opacity="0.3"/><rect x="454" y="18" width="1" height="1" fill="#fff" opacity="0.4"/><rect x="278" y="20" width="1" height="1" fill="#fff" opacity="0.15"/><rect x="495" y="10" width="1" height="1" fill="#fff" opacity="0.4"/><rect x="242" y="45" width="1" height="1" fill="#fff" opacity="0.4"/><rect x="48" y="27" width="1" height="1" fill="#fff" opacity="0.2"/><rect x="675" y="18" width="1" height="1" fill="#fff" opacity="0.3"/><rect x="602" y="27" width="1" height="1" fill="#fff" opacity="0.3"/><rect x="207" y="32" width="1" height="1" fill="#fff" opacity="0.4"/><rect x="439" y="46" width="1" height="1" fill="#fff" opacity="0.2"/><rect x="607" y="27" width="1" height="1" fill="#fff" opacity="0.15"/><rect x="221" y="27" width="1" height="1" fill="#fff" opacity="0.4"/><rect x="264" y="43" width="1" height="1" fill="#fff" opacity="0.4"/><rect x="535" y="14" width="1" height="1" fill="#fff" opacity="0.4"/><rect x="545" y="5" width="1" height="1" fill="#fff" opacity="0.15"/><rect x="371" y="25" width="1" height="1" fill="#fff" opacity="0.4"/><rect x="459" y="45" width="1" height="1" fill="#fff" opacity="0.3"/><rect x="349" y="2" width="1" height="1" fill="#fff" opacity="0.15"/><rect x="242" y="33" width="1" height="1" fill="#fff" opacity="0.3"/><rect x="668" y="18" width="1" height="1" fill="#fff" opacity="0.3"/><rect x="118" y="27" width="1" height="1" fill="#fff" opacity="0.15"/><rect x="435" y="19" width="1" height="1" fill="#fff" opacity="0.4"/><rect x="120" y="15" width="1" height="1" fill="#fff" opacity="0.2"/><rect x="167" y="1" width="1" height="1" fill="#fff" opacity="0.15"/><rect x="513" y="1" width="1" height="1" fill="#fff" opacity="0.2"/><rect x="213" y="23" width="1" height="1" fill="#fff" opacity="0.15"/><rect x="536" y="14" width="1" height="1" fill="#fff" opacity="0.3"/><rect x="170" y="33" width="1" height="1" fill="#fff" opacity="0.3"/><rect x="272" y="41" width="1" height="1" fill="#fff" opacity="0.2"/><rect x="682" y="33" width="1" height="1" fill="#fff" opacity="0.15"/><rect x="356" y="38" width="1" height="1" fill="#fff" opacity="0.3"/><rect x="491" y="46" width="1" height="1" fill="#fff" opacity="0.2"/><rect x="442" y="28" width="1" height="1" fill="#fff" opacity="0.3"/><rect x="121" y="45" width="1" height="1" fill="#fff" opacity="0.3"/><rect x="635" y="42" width="1" height="1" fill="#fff" opacity="0.2"/><rect x="667" y="43" width="1" height="1" fill="#fff" opacity="0.2"/><rect x="381" y="28" width="1" height="1" fill="#fff" opacity="0.3"/><rect x="174" y="41" width="1" height="1" fill="#fff" opacity="0.2"/><rect x="386" y="3" width="1" height="1" fill="#fff" opacity="0.4"/><rect x="579" y="2" width="1" height="1" fill="#fff" opacity="0.15"/><rect x="618" y="32" width="1" height="1" fill="#fff" opacity="0.15"/><rect x="77" y="2" width="1" height="1" fill="#fff" opacity="0.3"/><rect x="614" y="23" width="1" height="1" fill="#fff" opacity="0.4"/><rect x="50" y="5" width="1" height="1" fill="#fff" opacity="0.15"/><rect x="733" y="29" width="1" height="1" fill="#fff" opacity="0.3"/><rect x="35" y="7" width="1" height="1" fill="#fff" opacity="0.3"/><rect x="43" y="37" width="1" height="1" fill="#fff" opacity="0.2"/><rect x="452" y="17" width="1" height="1" fill="#fff" opacity="0.3"/><rect x="3" y="43" width="1" height="1" fill="#fff" opacity="0.3"/><rect x="210" y="1" width="1" height="1" fill="#fff" opacity="0.3"/><rect x="336" y="8" width="1" height="1" fill="#fff" opacity="0.2"/><rect x="91" y="40" width="1" height="1" fill="#fff" opacity="0.4"/><rect x="546" y="9" width="1" height="1" fill="#fff" opacity="0.4"/><rect x="558" y="24" width="1" height="1" fill="#fff" opacity="0.4"/><rect x="658" y="17" width="1" height="1" fill="#fff" opacity="0.3"/><rect x="378" y="25" width="1" height="1" fill="#fff" opacity="0.2"/><rect x="230" y="14" width="1" height="1" fill="#fff" opacity="0.4"/><rect x="26" y="37" width="1" height="1" fill="#fff" opacity="0.4"/><rect x="230" y="9" width="1" height="1" fill="#fff" opacity="0.4"/><rect x="558" y="35" width="1" height="1" fill="#fff" opacity="0.4"/><rect x="73" y="24" width="1" height="1" fill="#fff" opacity="0.2"/><rect x="710" y="47" width="1" height="1" fill="#fff" opacity="0.2"/><rect x="60" y="12" width="1" height="1" fill="#fff" opacity="0.3"/><rect x="438" y="24" width="1" height="1" fill="#fff" opacity="0.3"/><rect x="31" y="14" width="1" height="1" fill="#fff" opacity="0.3"/><rect x="798" y="4" width="1" height="1" fill="#fff" opacity="0.15"/><rect x="11" y="7" width="1" height="1" fill="#fff" opacity="0.4"/><rect x="576" y="35" width="1" height="1" fill="#fff" opacity="0.4"/><rect x="453" y="44" width="1" height="1" fill="#fff" opacity="0.4"/><rect x="477" y="26" width="1" height="1" fill="#fff" opacity="0.15"/><rect x="469" y="8" width="1" height="1" fill="#fff" opacity="0.4"/><rect x="600" y="11" width="1" height="1" fill="#fff" opacity="0.4"/><rect x="175" y="21" width="1" height="1" fill="#fff" opacity="0.3"/><rect x="798" y="43" width="1" height="1" fill="#fff" opacity="0.15"/><rect x="10" y="34" width="1" height="1" fill="#fff" opacity="0.2"/><rect x="487" y="11" width="1" height="1" fill="#fff" opacity="0.3"/><rect x="269" y="45" width="1" height="1" fill="#fff" opacity="0.15"/><rect x="787" y="9" width="1" height="1" fill="#fff" opacity="0.2"/><rect x="656" y="34" width="1" height="1" fill="#fff" opacity="0.2"/><rect x="46" y="2" width="1" height="1" fill="#fff" opacity="0.2"/><rect x="638" y="30" width="1" height="1" fill="#fff" opacity="0.2"/><rect x="714" y="30" width="1" height="1" fill="#fff" opacity="0.3"/><rect x="649" y="42" width="1" height="1" fill="#fff" opacity="0.2"/><rect x="258" y="5" width="1" height="1" fill="#fff" opacity="0.15"/><rect x="754" y="2" width="1" height="1" fill="#fff" opacity="0.3"/><rect x="309" y="39" width="1" height="1" fill="#fff" opacity="0.3"/><rect x="312" y="30" width="1" height="1" fill="#fff" opacity="0.4"/><rect x="399" y="46" width="1" height="1" fill="#fff" opacity="0.2"/><rect x="476" y="13" width="1" height="1" fill="#fff" opacity="0.2"/><rect x="544" y="3" width="1" height="1" fill="#fff" opacity="0.2"/><rect x="560" y="18" width="1" height="1" fill="#fff" opacity="0.15"/><rect x="790" y="31" width="1" height="1" fill="#fff" opacity="0.4"/><rect x="754" y="15" width="1" height="1" fill="#fff" opacity="0.15"/><rect x="47" y="23" width="1" height="1" fill="#fff" opacity="0.4"/><rect x="98" y="12" width="1" height="1" fill="#fff" opacity="0.15"/><rect x="23" y="46" width="1" height="1" fill="#fff" opacity="0.3"/><rect x="449" y="18" width="1" height="1" fill="#fff" opacity="0.2"/><rect x="164" y="1" width="1" height="1" fill="#fff" opacity="0.2"/><rect x="361" y="23" width="1" height="1" fill="#fff" opacity="0.15"/><rect x="63" y="41" width="1" height="1" fill="#fff" opacity="0.15"/><rect x="105" y="18" width="1" height="1" fill="#fff" opacity="0.2"/><rect x="680" y="29" width="1" height="1" fill="#fff" opacity="0.2"/><rect x="613" y="34" width="1" height="1" fill="#fff" opacity="0.15"/><rect x="283" y="3" width="1" height="1" fill="#fff" opacity="0.3"/><rect x="131" y="2" width="1" height="1" fill="#fff" opacity="0.15"/><rect x="195" y="30" width="1" height="1" fill="#fff" opacity="0.2"/><rect x="70" y="2" width="1" height="1" fill="#fff" opacity="0.3"/><rect x="485" y="43" width="1" height="1" fill="#fff" opacity="0.15"/><rect x="478" y="11" width="1" height="1" fill="#fff" opacity="0.2"/><rect x="154" y="5" width="1" height="1" fill="#fff" opacity="0.2"/><rect x="59" y="25" width="1" height="1" fill="#fff" opacity="0.15"/><rect x="136" y="25" width="1" height="1" fill="#fff" opacity="0.4"/><rect x="330" y="18" width="1" height="1" fill="#fff" opacity="0.15"/><rect x="313" y="22" width="1" height="1" fill="#fff" opacity="0.15"/><rect x="796" y="1" width="1" height="1" fill="#fff" opacity="0.3"/><rect x="754" y="20" width="1" height="1" fill="#fff" opacity="0.4"/><rect x="233" y="13" width="1" height="1" fill="#fff" opacity="0.2"/><rect x="129" y="38" width="1" height="1" fill="#fff" opacity="0.3"/><rect x="745" y="5" width="1" height="1" fill="#fff" opacity="0.15"/><rect x="213" y="14" width="1" height="1" fill="#fff" opacity="0.2"/><rect x="605" y="37" width="1" height="1" fill="#fff" opacity="0.2"/><rect x="506" y="41" width="1" height="1" fill="#fff" opacity="0.3"/><rect x="617" y="5" width="1" height="1" fill="#fff" opacity="0.15"/><rect x="597" y="41" width="1" height="1" fill="#fff" opacity="0.3"/><rect x="476" y="32" width="1" height="1" fill="#fff" opacity="0.3"/><rect x="805" y="39" width="1" height="1" fill="#fff" opacity="0.3"/><rect x="774" y="7" width="1" height="1" fill="#fff" opacity="0.4"/><rect x="400" y="4" width="1" height="1" fill="#fff" opacity="0.15"/><rect x="350" y="27" width="1" height="1" fill="#fff" opacity="0.2"/><rect x="260" y="29" width="1" height="1" fill="#fff" opacity="0.2"/><rect x="216" y="31" width="1" height="1" fill="#fff" opacity="0.15"/><rect x="212" y="17" width="1" height="1" fill="#fff" opacity="0.2"/><rect x="437" y="12" width="1" height="1" fill="#fff" opacity="0.4"/><rect x="449" y="16" width="1" height="1" fill="#fff" opacity="0.15"/><rect x="93" y="32" width="1" height="1" fill="#fff" opacity="0.3"/><rect x="517" y="22" width="1" height="1" fill="#fff" opacity="0.15"/><rect x="53" y="34" width="1" height="1" fill="#fff" opacity="0.2"/><rect x="783" y="8" width="1" height="1" fill="#fff" opacity="0.4"/><rect x="789" y="44" width="1" height="1" fill="#fff" opacity="0.4"/><rect x="721" y="26" width="1" height="1" fill="#fff" opacity="0.2"/><rect x="726" y="35" width="1" height="1" fill="#fff" opacity="0.4"/><rect x="752" y="29" width="1" height="1" fill="#fff" opacity="0.2"/><rect x="705" y="28" width="1" height="1" fill="#fff" opacity="0.15"/><rect x="739" y="40" width="1" height="1" fill="#fff" opacity="0.2"/><rect x="756" y="32" width="1" height="1" fill="#fff" opacity="0.15"/><rect x="733" y="44" width="1" height="1" fill="#fff" opacity="0.2"/><rect x="743" y="39" width="1" height="1" fill="#fff" opacity="0.3"/><rect x="754" y="40" width="1" height="1" fill="#fff" opacity="0.3"/><rect x="799" y="3" width="1" height="1" fill="#fff" opacity="0.15"/><rect x="745" y="5" width="1" height="1" fill="#fff" opacity="0.2"/><rect x="789" y="8" width="1" height="1" fill="#fff" opacity="0.3"/><rect x="705" y="28" width="1" height="1" fill="#fff" opacity="0.3"/><rect x="797" y="18" width="1" height="1" fill="#fff" opacity="0.3"/><rect x="793" y="26" width="1" height="1" fill="#fff" opacity="0.2"/><rect x="790" y="32" width="1" height="1" fill="#fff" opacity="0.3"/><rect x="723" y="36" width="1" height="1" fill="#fff" opacity="0.4"/><rect x="744" y="1" width="1" height="1" fill="#fff" opacity="0.4"/><rect x="789" y="23" width="1" height="1" fill="#fff" opacity="0.2"/><rect x="749" y="3" width="1" height="1" fill="#fff" opacity="0.2"/><rect x="732" y="17" width="1" height="1" fill="#fff" opacity="0.15"/><rect x="805" y="37" width="1" height="1" fill="#fff" opacity="0.3"/><rect x="699" y="29" width="1" height="1" fill="#fff" opacity="0.4"/><rect x="783" y="19" width="1" height="1" fill="#fff" opacity="0.4"/><rect x="798" y="32" width="1" height="1" fill="#fff" opacity="0.3"/><rect x="699" y="6" width="1" height="1" fill="#fff" opacity="0.4"/><rect x="752" y="45" width="1" height="1" fill="#fff" opacity="0.2"/><rect x="742" y="27" width="1" height="1" fill="#fff" opacity="0.15"/><rect x="760" y="36" width="1" height="1" fill="#fff" opacity="0.4"/><rect x="765" y="15" width="1" height="1" fill="#fff" opacity="0.4"/><rect x="793" y="10" width="1" height="1" fill="#fff" opacity="0.15"/><rect x="690" y="8" width="1" height="1" fill="#fff" opacity="0.2"/><rect x="705" y="6" width="1" height="1" fill="#fff" opacity="0.15"/><rect x="756" y="7" width="1" height="1" fill="#fff" opacity="0.3"/><rect x="742" y="28" width="1" height="1" fill="#fff" opacity="0.15"/><rect x="723" y="2" width="1" height="1" fill="#fff" opacity="0.2"/><rect x="739" y="4" width="1" height="1" fill="#fff" opacity="0.15"/><rect x="803" y="16" width="1" height="1" fill="#fff" opacity="0.4"/><rect x="794" y="37" width="1" height="1" fill="#fff" opacity="0.2"/><rect x="786" y="43" width="1" height="1" fill="#fff" opacity="0.2"/><rect x="745" y="14" width="1" height="1" fill="#fff" opacity="0.4"/><rect x="714" y="30" width="1" height="1" fill="#fff" opacity="0.15"/><rect x="739" y="7" width="1" height="1" fill="#fff" opacity="0.4"/><rect x="762" y="15" width="1" height="1" fill="#fff" opacity="0.4"/><rect x="795" y="37" width="1" height="1" fill="#fff" opacity="0.15"/><rect x="785" y="11" width="1" height="1" fill="#fff" opacity="0.3"/><rect x="719" y="26" width="1" height="1" fill="#fff" opacity="0.3"/><rect x="791" y="28" width="1" height="1" fill="#fff" opacity="0.3"/><rect x="778" y="16" width="1" height="1" fill="#fff" opacity="0.4"/><rect x="791" y="44" width="1" height="1" fill="#fff" opacity="0.2"/><rect x="744" y="6" width="1" height="1" fill="#fff" opacity="0.15"/><rect x="717" y="11" width="1" height="1" fill="#fff" opacity="0.4"/><rect x="748" y="30" width="1" height="1" fill="#fff" opacity="0.3"/><rect x="713" y="4" width="1" height="1" fill="#fff" opacity="0.2"/><rect x="803" y="28" width="1" height="1" fill="#fff" opacity="0.2"/><rect x="700" y="24" width="1" height="1" fill="#fff" opacity="0.4"/><rect x="737" y="30" width="1" height="1" fill="#fff" opacity="0.3"/><rect x="796" y="37" width="1" height="1" fill="#fff" opacity="0.15"/><rect x="765" y="17" width="1" height="1" fill="#fff" opacity="0.3"/><rect x="755" y="13" width="1" height="1" fill="#fff" opacity="0.2"/><rect x="788" y="18" width="1" height="1" fill="#fff" opacity="0.15"/><rect x="719" y="15" width="1" height="1" fill="#fff" opacity="0.15"/><rect x="802" y="8" width="1" height="1" fill="#fff" opacity="0.3"/><rect x="759" y="30" width="1" height="1" fill="#fff" opacity="0.2"/><rect x="804" y="25" width="1" height="1" fill="#fff" opacity="0.15"/><rect x="752" y="37" width="1" height="1" fill="#fff" opacity="0.4"/><rect x="716" y="41" width="1" height="1" fill="#fff" opacity="0.3"/><rect x="771" y="44" width="1" height="1" fill="#fff" opacity="0.3"/><rect x="798" y="38" width="1" height="1" fill="#fff" opacity="0.3"/><rect x="775" y="1" width="1" height="1" fill="#fff" opacity="0.3"/><rect x="748" y="1" width="1" height="1" fill="#fff" opacity="0.4"/><rect x="699" y="37" width="1" height="1" fill="#fff" opacity="0.15"/><rect x="718" y="22" width="1" height="1" fill="#fff" opacity="0.4"/><rect x="727" y="2" width="1" height="1" fill="#fff" opacity="0.4"/><rect x="741" y="12" width="1" height="1" fill="#fff" opacity="0.2"/><rect x="732" y="43" width="1" height="1" fill="#fff" opacity="0.15"/><rect x="705" y="38" width="1" height="1" fill="#fff" opacity="0.15"/><rect x="710" y="31" width="1" height="1" fill="#fff" opacity="0.15"/><rect x="711" y="29" width="1" height="1" fill="#fff" opacity="0.3"/><rect x="805" y="27" width="1" height="1" fill="#fff" opacity="0.3"/><rect x="801" y="36" width="1" height="1" fill="#fff" opacity="0.15"/><rect x="745" y="37" width="1" height="1" fill="#fff" opacity="0.15"/><rect x="708" y="25" width="1" height="1" fill="#fff" opacity="0.4"/><rect x="783" y="35" width="1" height="1" fill="#fff" opacity="0.4"/><rect x="701" y="7" width="1" height="1" fill="#fff" opacity="0.15"/><rect x="790" y="45" width="1" height="1" fill="#fff" opacity="0.3"/><rect x="703" y="7" width="1" height="1" fill="#fff" opacity="0.2"/><rect x="755" y="13" width="1" height="1" fill="#fff" opacity="0.3"/><rect x="702" y="16" width="1" height="1" fill="#fff" opacity="0.4"/><rect x="690" y="26" width="1" height="1" fill="#fff" opacity="0.15"/><rect x="795" y="10" width="1" height="1" fill="#fff" opacity="0.3"/><rect x="721" y="36" width="1" height="1" fill="#fff" opacity="0.2"/><rect x="738" y="24" width="1" height="1" fill="#fff" opacity="0.2"/><rect x="740" y="2" width="1" height="1" fill="#fff" opacity="0.15"/><rect x="768" y="5" width="1" height="1" fill="#fff" opacity="0.2"/><rect x="759" y="27" width="1" height="1" fill="#fff" opacity="0.4"/><rect x="690" y="46" width="1" height="1" fill="#fff" opacity="0.4"/><rect x="763" y="22" width="1" height="1" fill="#fff" opacity="0.4"/><rect x="711" y="36" width="1" height="1" fill="#fff" opacity="0.4"/><rect x="799" y="10" width="1" height="1" fill="#fff" opacity="0.15"/><rect x="732" y="20" width="1" height="1" fill="#fff" opacity="0.15"/><rect x="796" y="22" width="1" height="1" fill="#fff" opacity="0.2"/><rect x="795" y="4" width="1" height="1" fill="#fff" opacity="0.3"/><rect x="765" y="34" width="1" height="1" fill="#fff" opacity="0.3"/><rect x="741" y="21" width="1" height="1" fill="#fff" opacity="0.4"/><rect x="780" y="37" width="1" height="1" fill="#fff" opacity="0.3"/><rect x="803" y="33" width="1" height="1" fill="#fff" opacity="0.2"/><rect x="695" y="18" width="1" height="1" fill="#fff" opacity="0.3"/><rect x="798" y="26" width="1" height="1" fill="#fff" opacity="0.4"/><rect x="768" y="11" width="1" height="1" fill="#fff" opacity="0.3"/><rect x="694" y="15" width="1" height="1" fill="#fff" opacity="0.3"/><rect x="703" y="37" width="1" height="1" fill="#fff" opacity="0.15"/><rect x="758" y="39" width="1" height="1" fill="#fff" opacity="0.4"/><rect x="729" y="9" width="1" height="1" fill="#fff" opacity="0.3"/><rect x="692" y="36" width="1" height="1" fill="#fff" opacity="0.2"/><rect x="712" y="38" width="1" height="1" fill="#fff" opacity="0.15"/><rect x="713" y="18" width="1" height="1" fill="#fff" opacity="0.4"/><rect x="779" y="35" width="1" height="1" fill="#fff" opacity="0.3"/><rect x="695" y="23" width="1" height="1" fill="#fff" opacity="0.15"/><rect x="745" y="37" width="1" height="1" fill="#fff" opacity="0.3"/><rect x="798" y="3" width="1" height="1" fill="#fff" opacity="0.3"/><rect x="760" y="45" width="1" height="1" fill="#fff" opacity="0.15"/><rect x="710" y="47" width="1" height="1" fill="#fff" opacity="0.2"/><rect x="798" y="11" width="1" height="1" fill="#fff" opacity="0.4"/><rect x="725" y="21" width="1" height="1" fill="#fff" opacity="0.3"/><rect x="714" y="42" width="1" height="1" fill="#fff" opacity="0.15"/><rect x="696" y="13" width="1" height="1" fill="#fff" opacity="0.3"/><rect x="784" y="19" width="1" height="1" fill="#fff" opacity="0.15"/><rect x="759" y="39" width="1" height="1" fill="#fff" opacity="0.15"/><rect x="738" y="19" width="1" height="1" fill="#fff" opacity="0.3"/><rect x="741" y="23" width="1" height="1" fill="#fff" opacity="0.15"/><rect x="726" y="13" width="1" height="1" fill="#fff" opacity="0.3"/><rect x="736" y="27" width="1" height="1" fill="#fff" opacity="0.3"/><rect x="733" y="21" width="1" height="1" fill="#fff" opacity="0.15"/><rect x="729" y="23" width="1" height="1" fill="#fff" opacity="0.4"/><rect x="701" y="29" width="1" height="1" fill="#fff" opacity="0.15"/><rect x="724" y="14" width="1" height="1" fill="#fff" opacity="0.15"/><rect x="718" y="38" width="1" height="1" fill="#fff" opacity="0.15"/><rect x="775" y="1" width="1" height="1" fill="#fff" opacity="0.15"/><rect x="741" y="25" width="1" height="1" fill="#fff" opacity="0.15"/><rect x="739" y="19" width="1" height="1" fill="#fff" opacity="0.4"/><rect x="701" y="18" width="1" height="1" fill="#fff" opacity="0.3"/><rect x="748" y="37" width="1" height="1" fill="#fff" opacity="0.2"/><rect x="768" y="22" width="1" height="1" fill="#fff" opacity="0.15"/><rect x="787" y="39" width="1" height="1" fill="#fff" opacity="0.15"/><rect x="760" y="6" width="1" height="1" fill="#fff" opacity="0.15"/><rect x="800" y="8" width="1" height="1" fill="#fff" opacity="0.3"/><rect x="707" y="35" width="1" height="1" fill="#fff" opacity="0.4"/><rect x="703" y="30" width="1" height="1" fill="#fff" opacity="0.4"/><rect x="691" y="11" width="1" height="1" fill="#fff" opacity="0.4"/><rect x="792" y="37" width="1" height="1" fill="#fff" opacity="0.3"/><rect x="801" y="19" width="1" height="1" fill="#fff" opacity="0.4"/><rect x="775" y="3" width="1" height="1" fill="#fff" opacity="0.15"/><rect x="694" y="23" width="1" height="1" fill="#fff" opacity="0.3"/><rect x="710" y="27" width="1" height="1" fill="#fff" opacity="0.4"/><rect x="798" y="6" width="1" height="1" fill="#fff" opacity="0.4"/><rect x="705" y="26" width="1" height="1" fill="#fff" opacity="0.15"/><rect x="711" y="18" width="1" height="1" fill="#fff" opacity="0.4"/><rect x="751" y="6" width="1" height="1" fill="#fff" opacity="0.3"/><rect x="799" y="44" width="1" height="1" fill="#fff" opacity="0.2"/><rect x="772" y="9" width="1" height="1" fill="#fff" opacity="0.4"/><rect x="760" y="16" width="1" height="1" fill="#fff" opacity="0.3"/><rect x="726" y="1" width="1" height="1" fill="#fff" opacity="0.15"/><rect x="798" y="47" width="1" height="1" fill="#fff" opacity="0.15"/><rect x="766" y="5" width="1" height="1" fill="#fff" opacity="0.15"/><rect x="781" y="42" width="1" height="1" fill="#fff" opacity="0.3"/><rect x="754" y="21" width="1" height="1" fill="#fff" opacity="0.3"/><rect x="803" y="34" width="1" height="1" fill="#fff" opacity="0.4"/><rect x="705" y="17" width="1" height="1" fill="#fff" opacity="0.3"/><rect x="801" y="28" width="1" height="1" fill="#fff" opacity="0.3"/><rect x="776" y="6" width="1" height="1" fill="#fff" opacity="0.3"/><rect x="803" y="10" width="1" height="1" fill="#fff" opacity="0.2"/><rect x="776" y="5" width="1" height="1" fill="#fff" opacity="0.15"/><rect x="797" y="40" width="1" height="1" fill="#fff" opacity="0.3"/><rect x="756" y="3" width="1" height="1" fill="#fff" opacity="0.15"/><rect x="695" y="3" width="1" height="1" fill="#fff" opacity="0.4"/><rect x="696" y="27" width="1" height="1" fill="#fff" opacity="0.4"/><rect x="789" y="9" width="1" height="1" fill="#fff" opacity="0.3"/><rect x="770" y="17" width="1" height="1" fill="#fff" opacity="0.15"/><rect x="778" y="18" width="1" height="1" fill="#fff" opacity="0.4"/><rect x="744" y="10" width="1" height="1" fill="#fff" opacity="0.4"/><rect x="741" y="39" width="1" height="1" fill="#fff" opacity="0.15"/><rect x="708" y="46" width="1" height="1" fill="#fff" opacity="0.2"/><rect x="787" y="6" width="1" height="1" fill="#fff" opacity="0.4"/><rect x="785" y="28" width="1" height="1" fill="#fff" opacity="0.2"/><rect x="768" y="1" width="1" height="1" fill="#fff" opacity="0.2"/><rect x="775" y="29" width="1" height="1" fill="#fff" opacity="0.3"/><rect x="700" y="30" width="1" height="1" fill="#fff" opacity="0.3"/><rect x="767" y="3" width="1" height="1" fill="#fff" opacity="0.15"/><rect x="767" y="28" width="1" height="1" fill="#fff" opacity="0.15"/><rect x="801" y="38" width="1" height="1" fill="#fff" opacity="0.4"/><rect x="743" y="1" width="1" height="1" fill="#fff" opacity="0.2"/><rect x="790" y="29" width="1" height="1" fill="#fff" opacity="0.3"/><rect x="697" y="30" width="1" height="1" fill="#fff" opacity="0.3"/><rect x="762" y="46" width="1" height="1" fill="#fff" opacity="0.2"/><rect x="789" y="36" width="1" height="1" fill="#fff" opacity="0.2"/><rect x="744" y="42" width="1" height="1" fill="#fff" opacity="0.4"/><rect x="772" y="26" width="1" height="1" fill="#fff" opacity="0.3"/><rect x="697" y="27" width="1" height="1" fill="#fff" opacity="0.3"/><rect x="722" y="32" width="1" height="1" fill="#fff" opacity="0.15"/><rect x="757" y="35" width="1" height="1" fill="#fff" opacity="0.15"/><rect x="701" y="24" width="1" height="1" fill="#fff" opacity="0.3"/><rect x="783" y="16" width="1" height="1" fill="#fff" opacity="0.2"/><rect x="757" y="14" width="1" height="1" fill="#fff" opacity="0.3"/><rect x="692" y="14" width="1" height="1" fill="#fff" opacity="0.3"/><rect x="729" y="40" width="1" height="1" fill="#fff" opacity="0.3"/><rect x="771" y="17" width="1" height="1" fill="#fff" opacity="0.4"/><rect x="731" y="13" width="1" height="1" fill="#fff" opacity="0.2"/><rect x="791" y="35" width="1" height="1" fill="#fff" opacity="0.15"/><rect x="730" y="12" width="1" height="1" fill="#fff" opacity="0.15"/><rect x="787" y="46" width="1" height="1" fill="#fff" opacity="0.2"/><rect x="786" y="5" width="1" height="1" fill="#fff" opacity="0.4"/><rect x="760" y="6" width="1" height="1" fill="#fff" opacity="0.3"/><rect x="749" y="13" width="1" height="1" fill="#fff" opacity="0.4"/><rect x="735" y="3" width="1" height="1" fill="#fff" opacity="0.15"/><rect x="720" y="10" width="1" height="1" fill="#fff" opacity="0.3"/><rect x="743" y="20" width="1" height="1" fill="#fff" opacity="0.2"/><rect x="793" y="43" width="1" height="1" fill="#fff" opacity="0.3"/><rect x="795" y="17" width="1" height="1" fill="#fff" opacity="0.15"/><rect x="746" y="24" width="1" height="1" fill="#fff" opacity="0.2"/><rect x="716" y="34" width="1" height="1" fill="#fff" opacity="0.15"/><rect x="786" y="6" width="1" height="1" fill="#fff" opacity="0.4"/><rect x="789" y="23" width="1" height="1" fill="#fff" opacity="0.4"/><rect x="771" y="2" width="1" height="1" fill="#fff" opacity="0.15"/><rect x="797" y="32" width="1" height="1" fill="#fff" opacity="0.15"/><rect x="728" y="8" width="1" height="1" fill="#fff" opacity="0.4"/><rect x="728" y="36" width="1" height="1" fill="#fff" opacity="0.2"/><rect x="738" y="25" width="1" height="1" fill="#fff" opacity="0.3"/><rect x="790" y="32" width="1" height="1" fill="#fff" opacity="0.3"/><rect x="731" y="36" width="1" height="1" fill="#fff" opacity="0.3"/><rect x="714" y="43" width="1" height="1" fill="#fff" opacity="0.15"/><rect x="802" y="35" width="1" height="1" fill="#fff" opacity="0.4"/><rect x="697" y="8" width="1" height="1" fill="#fff" opacity="0.15"/><rect x="772" y="16" width="1" height="1" fill="#fff" opacity="0.4"/><rect x="801" y="14" width="1" height="1" fill="#fff" opacity="0.2"/><rect x="700" y="1" width="1" height="1" fill="#fff" opacity="0.15"/><rect x="709" y="27" width="1" height="1" fill="#fff" opacity="0.4"/><rect x="733" y="45" width="1" height="1" fill="#fff" opacity="0.3"/><rect x="726" y="9" width="1" height="1" fill="#fff" opacity="0.4"/><rect x="702" y="1" width="1" height="1" fill="#fff" opacity="0.15"/><rect x="718" y="6" width="1" height="1" fill="#fff" opacity="0.3"/><rect x="770" y="39" width="1" height="1" fill="#fff" opacity="0.2"/><rect x="718" y="7" width="1" height="1" fill="#fff" opacity="0.4"/><rect x="796" y="43" width="1" height="1" fill="#fff" opacity="0.4"/><rect x="696" y="17" width="1" height="1" fill="#fff" opacity="0.2"/><rect x="698" y="14" width="1" height="1" fill="#fff" opacity="0.15"/><rect x="690" y="43" width="1" height="1" fill="#fff" opacity="0.15"/><rect x="791" y="2" width="1" height="1" fill="#fff" opacity="0.4"/><rect x="718" y="40" width="1" height="1" fill="#fff" opacity="0.2"/><rect x="701" y="25" width="1" height="1" fill="#fff" opacity="0.15"/><rect x="705" y="5" width="1" height="1" fill="#fff" opacity="0.3"/><rect x="741" y="6" width="1" height="1" fill="#fff" opacity="0.4"/><rect x="786" y="12" width="1" height="1" fill="#fff" opacity="0.4"/><rect x="752" y="34" width="1" height="1" fill="#fff" opacity="0.2"/><rect x="771" y="11" width="1" height="1" fill="#fff" opacity="0.2"/><rect x="704" y="40" width="1" height="1" fill="#fff" opacity="0.2"/><rect x="754" y="4" width="1" height="1" fill="#fff" opacity="0.3"/><rect x="738" y="2" width="1" height="1" fill="#fff" opacity="0.15"/><rect x="696" y="30" width="1" height="1" fill="#fff" opacity="0.4"/><rect x="792" y="18" width="1" height="1" fill="#fff" opacity="0.2"/><rect x="710" y="34" width="1" height="1" fill="#fff" opacity="0.2"/><rect x="805" y="11" width="1" height="1" fill="#fff" opacity="0.4"/><rect x="700" y="38" width="1" height="1" fill="#fff" opacity="0.4"/><rect x="738" y="45" width="1" height="1" fill="#fff" opacity="0.15"/><rect x="706" y="6" width="1" height="1" fill="#fff" opacity="0.3"/><rect x="765" y="38" width="1" height="1" fill="#fff" opacity="0.2"/><rect x="758" y="21" width="1" height="1" fill="#fff" opacity="0.4"/><rect x="747" y="1" width="1" height="1" fill="#fff" opacity="0.2"/><rect x="769" y="38" width="1" height="1" fill="#fff" opacity="0.4"/><rect x="793" y="9" width="1" height="1" fill="#fff" opacity="0.4"/><rect x="786" y="38" width="1" height="1" fill="#fff" opacity="0.2"/><rect x="727" y="9" width="1" height="1" fill="#fff" opacity="0.4"/><rect x="779" y="22" width="1" height="1" fill="#fff" opacity="0.2"/><rect x="724" y="20" width="1" height="1" fill="#fff" opacity="0.3"/><rect x="778" y="41" width="1" height="1" fill="#fff" opacity="0.3"/><rect x="725" y="26" width="1" height="1" fill="#fff" opacity="0.2"/><rect x="754" y="25" width="1" height="1" fill="#fff" opacity="0.3"/><rect x="744" y="4" width="1" height="1" fill="#fff" opacity="0.4"/><rect x="746" y="10" width="1" height="1" fill="#fff" opacity="0.15"/><rect x="789" y="21" width="1" height="1" fill="#fff" opacity="0.4"/><rect x="782" y="45" width="1" height="1" fill="#fff" opacity="0.15"/><rect x="756" y="19" width="1" height="1" fill="#fff" opacity="0.2"/><rect x="769" y="34" width="1" height="1" fill="#fff" opacity="0.2"/><rect x="704" y="4" width="1" height="1" fill="#fff" opacity="0.4"/><rect x="703" y="5" width="1" height="1" fill="#fff" opacity="0.15"/><rect x="761" y="41" width="1" height="1" fill="#fff" opacity="0.2"/><rect x="785" y="43" width="1" height="1" fill="#fff" opacity="0.15"/><rect x="693" y="16" width="1" height="1" fill="#fff" opacity="0.15"/><rect x="788" y="44" width="1" height="1" fill="#fff" opacity="0.15"/><rect x="720" y="2" width="1" height="1" fill="#fff" opacity="0.3"/><rect x="737" y="44" width="1" height="1" fill="#fff" opacity="0.2"/><rect x="744" y="10" width="1" height="1" fill="#fff" opacity="0.4"/><rect x="693" y="38" width="1" height="1" fill="#fff" opacity="0.4"/><rect x="708" y="1" width="1" height="1" fill="#fff" opacity="0.3"/><rect x="719" y="29" width="1" height="1" fill="#fff" opacity="0.3"/><rect x="774" y="26" width="1" height="1" fill="#fff" opacity="0.3"/><rect x="778" y="12" width="1" height="1" fill="#fff" opacity="0.2"/><rect x="793" y="16" width="1" height="1" fill="#fff" opacity="0.15"/><rect x="720" y="30" width="1" height="1" fill="#fff" opacity="0.3"/><rect x="775" y="36" width="1" height="1" fill="#fff" opacity="0.2"/><rect x="718" y="5" width="1" height="1" fill="#fff" opacity="0.2"/><rect x="794" y="22" width="1" height="1" fill="#fff" opacity="0.2"/><rect x="732" y="44" width="1" height="1" fill="#fff" opacity="0.2"/><rect x="760" y="44" width="1" height="1" fill="#fff" opacity="0.2"/><rect x="758" y="15" width="1" height="1" fill="#fff" opacity="0.4"/><rect x="760" y="13" width="1" height="1" fill="#fff" opacity="0.4"/><rect x="790" y="34" width="1" height="1" fill="#fff" opacity="0.2"/><rect x="767" y="11" width="1" height="1" fill="#fff" opacity="0.15"/><rect x="740" y="40" width="1" height="1" fill="#fff" opacity="0.3"/><rect x="750" y="28" width="1" height="1" fill="#fff" opacity="0.15"/><rect x="769" y="26" width="1" height="1" fill="#fff" opacity="0.2"/><rect x="724" y="27" width="1" height="1" fill="#fff" opacity="0.3"/><rect x="793" y="44" width="1" height="1" fill="#fff" opacity="0.3"/><rect x="692" y="19" width="1" height="1" fill="#fff" opacity="0.4"/><rect x="745" y="45" width="1" height="1" fill="#fff" opacity="0.15"/><rect x="770" y="32" width="1" height="1" fill="#fff" opacity="0.2"/><rect x="691" y="31" width="1" height="1" fill="#fff" opacity="0.2"/><rect x="751" y="8" width="1" height="1" fill="#fff" opacity="0.4"/><rect x="745" y="7" width="1" height="1" fill="#fff" opacity="0.4"/><rect x="751" y="25" width="1" height="1" fill="#fff" opacity="0.3"/><rect x="775" y="28" width="1" height="1" fill="#fff" opacity="0.3"/><rect x="761" y="26" width="1" height="1" fill="#fff" opacity="0.2"/><rect x="723" y="18" width="1" height="1" fill="#fff" opacity="0.4"/><rect x="747" y="42" width="1" height="1" fill="#fff" opacity="0.2"/><rect x="731" y="7" width="1" height="1" fill="#fff" opacity="0.4"/><rect x="750" y="16" width="1" height="1" fill="#fff" opacity="0.2"/><rect x="735" y="4" width="1" height="1" fill="#fff" opacity="0.15"/><rect x="727" y="35" width="1" height="1" fill="#fff" opacity="0.2"/><rect x="781" y="21" width="1" height="1" fill="#fff" opacity="0.4"/><rect x="760" y="30" width="1" height="1" fill="#fff" opacity="0.3"/><rect x="767" y="26" width="1" height="1" fill="#fff" opacity="0.15"/><rect x="790" y="26" width="1" height="1" fill="#fff" opacity="0.15"/><rect x="740" y="46" width="1" height="1" fill="#fff" opacity="0.4"/><rect x="776" y="18" width="1" height="1" fill="#fff" opacity="0.3"/><rect x="725" y="1" width="1" height="1" fill="#fff" opacity="0.2"/><rect x="711" y="33" width="1" height="1" fill="#fff" opacity="0.2"/><rect x="756" y="10" width="1" height="1" fill="#fff" opacity="0.3"/><rect x="700" y="40" width="1" height="1" fill="#fff" opacity="0.15"/><rect x="754" y="9" width="1" height="1" fill="#fff" opacity="0.4"/><rect x="699" y="37" width="1" height="1" fill="#fff" opacity="0.2"/><rect x="789" y="17" width="1" height="1" fill="#fff" opacity="0.3"/><rect x="791" y="5" width="1" height="1" fill="#fff" opacity="0.4"/><rect x="785" y="0" width="1" height="1" fill="#fff" opacity="0.4"/><rect x="728" y="45" width="1" height="1" fill="#fff" opacity="0.3"/><rect x="730" y="24" width="1" height="1" fill="#fff" opacity="0.15"/><rect x="797" y="11" width="1" height="1" fill="#fff" opacity="0.3"/><rect x="723" y="7" width="1" height="1" fill="#fff" opacity="0.2"/><rect x="714" y="11" width="1" height="1" fill="#fff" opacity="0.3"/><rect x="760" y="13" width="1" height="1" fill="#fff" opacity="0.4"/><rect x="764" y="44" width="1" height="1" fill="#fff" opacity="0.2"/><rect x="718" y="46" width="1" height="1" fill="#fff" opacity="0.3"/><rect x="732" y="20" width="1" height="1" fill="#fff" opacity="0.4"/><rect x="748" y="47" width="1" height="1" fill="#fff" opacity="0.3"/><rect x="734" y="47" width="1" height="1" fill="#fff" opacity="0.4"/><rect x="737" y="27" width="1" height="1" fill="#fff" opacity="0.4"/><rect x="755" y="45" width="1" height="1" fill="#fff" opacity="0.2"/><rect x="701" y="46" width="1" height="1" fill="#fff" opacity="0.15"/><rect x="751" y="41" width="1" height="1" fill="#fff" opacity="0.3"/><rect x="802" y="37" width="1" height="1" fill="#fff" opacity="0.4"/><rect x="702" y="22" width="1" height="1" fill="#fff" opacity="0.2"/><rect x="728" y="32" width="1" height="1" fill="#fff" opacity="0.4"/><rect x="727" y="23" width="1" height="1" fill="#fff" opacity="0.2"/><rect x="759" y="43" width="1" height="1" fill="#fff" opacity="0.2"/><rect x="745" y="17" width="1" height="1" fill="#fff" opacity="0.15"/><rect x="738" y="20" width="1" height="1" fill="#fff" opacity="0.2"/><rect x="713" y="23" width="1" height="1" fill="#fff" opacity="0.4"/><rect x="722" y="28" width="1" height="1" fill="#fff" opacity="0.15"/><rect x="761" y="3" width="1" height="1" fill="#fff" opacity="0.3"/><rect x="749" y="32" width="1" height="1" fill="#fff" opacity="0.2"/><rect x="691" y="44" width="1" height="1" fill="#fff" opacity="0.3"/><rect x="777" y="47" width="1" height="1" fill="#fff" opacity="0.3"/><rect x="718" y="23" width="1" height="1" fill="#fff" opacity="0.2"/><rect x="749" y="8" width="1" height="1" fill="#fff" opacity="0.15"/><rect x="776" y="47" width="1" height="1" fill="#fff" opacity="0.15"/><rect x="703" y="2" width="1" height="1" fill="#fff" opacity="0.15"/><rect x="713" y="12" width="1" height="1" fill="#fff" opacity="0.4"/><rect x="728" y="22" width="1" height="1" fill="#fff" opacity="0.2"/><rect x="742" y="25" width="1" height="1" fill="#fff" opacity="0.4"/><rect x="781" y="12" width="1" height="1" fill="#fff" opacity="0.15"/><rect x="790" y="4" width="1" height="1" fill="#fff" opacity="0.2"/><rect x="711" y="26" width="1" height="1" fill="#fff" opacity="0.3"/><rect x="691" y="17" width="1" height="1" fill="#fff" opacity="0.4"/><rect x="720" y="0" width="1" height="1" fill="#fff" opacity="0.4"/><rect x="721" y="19" width="1" height="1" fill="#fff" opacity="0.3"/><rect x="770" y="15" width="1" height="1" fill="#fff" opacity="0.3"/><rect x="788" y="10" width="1" height="1" fill="#fff" opacity="0.3"/><rect x="691" y="23" width="1" height="1" fill="#fff" opacity="0.2"/><rect x="743" y="27" width="1" height="1" fill="#fff" opacity="0.4"/><rect x="692" y="15" width="1" height="1" fill="#fff" opacity="0.4"/><rect x="773" y="25" width="1" height="1" fill="#fff" opacity="0.3"/><rect x="754" y="5" width="1" height="1" fill="#fff" opacity="0.4"/><rect x="760" y="36" width="1" height="1" fill="#fff" opacity="0.4"/><rect x="800" y="23" width="1" height="1" fill="#fff" opacity="0.3"/><rect x="708" y="30" width="1" height="1" fill="#fff" opacity="0.15"/><rect x="736" y="40" width="1" height="1" fill="#fff" opacity="0.15"/><rect x="706" y="26" width="1" height="1" fill="#fff" opacity="0.3"/><rect x="733" y="1" width="1" height="1" fill="#fff" opacity="0.4"/><rect x="767" y="2" width="1" height="1" fill="#fff" opacity="0.4"/><rect x="698" y="11" width="1" height="1" fill="#fff" opacity="0.2"/><rect x="744" y="1" width="1" height="1" fill="#fff" opacity="0.2"/><rect x="751" y="9" width="1" height="1" fill="#fff" opacity="0.15"/><rect x="779" y="14" width="1" height="1" fill="#fff" opacity="0.4"/><rect x="743" y="30" width="1" height="1" fill="#fff" opacity="0.4"/><rect x="738" y="40" width="1" height="1" fill="#fff" opacity="0.3"/><rect x="792" y="46" width="1" height="1" fill="#fff" opacity="0.2"/><rect x="758" y="3" width="1" height="1" fill="#fff" opacity="0.3"/><rect x="719" y="29" width="1" height="1" fill="#fff" opacity="0.4"/><rect x="760" y="20" width="1" height="1" fill="#fff" opacity="0.2"/><rect x="710" y="42" width="1" height="1" fill="#fff" opacity="0.15"/><rect x="793" y="15" width="1" height="1" fill="#fff" opacity="0.3"/><rect x="749" y="3" width="1" height="1" fill="#fff" opacity="0.15"/><rect x="779" y="38" width="1" height="1" fill="#fff" opacity="0.4"/><rect x="742" y="21" width="1" height="1" fill="#fff" opacity="0.3"/><rect x="726" y="39" width="1" height="1" fill="#fff" opacity="0.4"/><rect x="717" y="38" width="1" height="1" fill="#fff" opacity="0.4"/><rect x="732" y="0" width="1" height="1" fill="#fff" opacity="0.3"/><rect x="766" y="25" width="1" height="1" fill="#fff" opacity="0.2"/><rect x="699" y="47" width="1" height="1" fill="#fff" opacity="0.15"/><rect x="782" y="13" width="1" height="1" fill="#fff" opacity="0.15"/><rect x="766" y="7" width="1" height="1" fill="#fff" opacity="0.3"/><rect x="730" y="30" width="1" height="1" fill="#fff" opacity="0.2"/><rect x="795" y="42" width="1" height="1" fill="#fff" opacity="0.4"/><rect x="716" y="16" width="1" height="1" fill="#fff" opacity="0.3"/><rect x="767" y="44" width="1" height="1" fill="#fff" opacity="0.4"/><rect x="720" y="3" width="1" height="1" fill="#fff" opacity="0.4"/><rect x="746" y="18" width="1" height="1" fill="#fff" opacity="0.15"/><rect x="756" y="41" width="1" height="1" fill="#fff" opacity="0.2"/><rect x="751" y="35" width="1" height="1" fill="#fff" opacity="0.15"/><rect x="760" y="45" width="1" height="1" fill="#fff" opacity="0.4"/><rect x="695" y="44" width="1" height="1" fill="#fff" opacity="0.4"/><rect x="717" y="41" width="1" height="1" fill="#fff" opacity="0.2"/><rect x="789" y="26" width="1" height="1" fill="#fff" opacity="0.3"/><rect x="757" y="11" width="1" height="1" fill="#fff" opacity="0.15"/><rect x="731" y="27" width="1" height="1" fill="#fff" opacity="0.2"/><rect x="777" y="9" width="1" height="1" fill="#fff" opacity="0.4"/><rect x="693" y="25" width="1" height="1" fill="#fff" opacity="0.4"/><rect x="785" y="7" width="1" height="1" fill="#fff" opacity="0.3"/><rect x="766" y="13" width="1" height="1" fill="#fff" opacity="0.3"/><rect x="776" y="33" width="1" height="1" fill="#fff" opacity="0.2"/><rect x="800" y="32" width="1" height="1" fill="#fff" opacity="0.2"/><rect x="700" y="5" width="1" height="1" fill="#fff" opacity="0.3"/><rect x="735" y="18" width="1" height="1" fill="#fff" opacity="0.3"/><rect x="725" y="11" width="1" height="1" fill="#fff" opacity="0.2"/><rect x="736" y="4" width="1" height="1" fill="#fff" opacity="0.3"/><rect x="721" y="8" width="1" height="1" fill="#fff" opacity="0.2"/><rect x="792" y="33" width="1" height="1" fill="#fff" opacity="0.3"/><rect x="796" y="44" width="1" height="1" fill="#fff" opacity="0.4"/><rect x="710" y="22" width="1" height="1" fill="#fff" opacity="0.15"/><rect x="732" y="15" width="1" height="1" fill="#fff" opacity="0.3"/><rect x="691" y="35" width="1" height="1" fill="#fff" opacity="0.15"/><rect x="782" y="0" width="1" height="1" fill="#fff" opacity="0.15"/><rect x="763" y="7" width="1" height="1" fill="#fff" opacity="0.3"/><rect x="717" y="29" width="1" height="1" fill="#fff" opacity="0.4"/><rect x="757" y="35" width="1" height="1" fill="#fff" opacity="0.2"/><rect x="722" y="15" width="1" height="1" fill="#fff" opacity="0.3"/><rect x="730" y="11" width="1" height="1" fill="#fff" opacity="0.15"/><rect x="786" y="30" width="1" height="1" fill="#fff" opacity="0.4"/><rect x="785" y="34" width="1" height="1" fill="#fff" opacity="0.15"/><rect x="762" y="29" width="1" height="1" fill="#fff" opacity="0.4"/><rect x="725" y="9" width="1" height="1" fill="#fff" opacity="0.3"/><rect x="771" y="17" width="1" height="1" fill="#fff" opacity="0.2"/><rect x="768" y="43" width="1" height="1" fill="#fff" opacity="0.4"/><rect x="699" y="7" width="1" height="1" fill="#fff" opacity="0.4"/><rect x="709" y="21" width="1" height="1" fill="#fff" opacity="0.3"/><rect x="733" y="1" width="1" height="1" fill="#fff" opacity="0.15"/><rect x="735" y="39" width="1" height="1" fill="#fff" opacity="0.15"/><rect x="766" y="25" width="1" height="1" fill="#fff" opacity="0.2"/><rect x="773" y="21" width="1" height="1" fill="#fff" opacity="0.3"/><rect x="806" y="26" width="1" height="1" fill="#fff" opacity="0.3"/><rect x="760" y="22" width="1" height="1" fill="#fff" opacity="0.2"/><rect x="799" y="21" width="1" height="1" fill="#fff" opacity="0.15"/><rect x="691" y="27" width="1" height="1" fill="#fff" opacity="0.4"/><rect x="746" y="13" width="1" height="1" fill="#fff" opacity="0.3"/><rect x="750" y="14" width="1" height="1" fill="#fff" opacity="0.4"/><rect x="744" y="17" width="1" height="1" fill="#fff" opacity="0.15"/><rect x="735" y="37" width="1" height="1" fill="#fff" opacity="0.3"/><rect x="753" y="44" width="1" height="1" fill="#fff" opacity="0.15"/><rect x="757" y="37" width="1" height="1" fill="#fff" opacity="0.4"/><rect x="701" y="42" width="1" height="1" fill="#fff" opacity="0.4"/><rect x="766" y="10" width="1" height="1" fill="#fff" opacity="0.4"/><rect x="747" y="11" width="1" height="1" fill="#fff" opacity="0.15"/><rect x="772" y="35" width="1" height="1" fill="#fff" opacity="0.2"/><rect x="803" y="46" width="1" height="1" fill="#fff" opacity="0.3"/><rect x="775" y="36" width="1" height="1" fill="#fff" opacity="0.4"/><rect x="734" y="35" width="1" height="1" fill="#fff" opacity="0.4"/><rect x="693" y="22" width="1" height="1" fill="#fff" opacity="0.3"/><rect x="794" y="33" width="1" height="1" fill="#fff" opacity="0.2"/><rect x="790" y="24" width="1" height="1" fill="#fff" opacity="0.4"/><rect x="699" y="31" width="1" height="1" fill="#fff" opacity="0.4"/><rect x="723" y="2" width="1" height="1" fill="#fff" opacity="0.2"/><rect x="727" y="43" width="1" height="1" fill="#fff" opacity="0.4"/><rect x="750" y="2" width="1" height="1" fill="#fff" opacity="0.4"/><rect x="766" y="8" width="1" height="1" fill="#fff" opacity="0.15"/><rect x="711" y="24" width="1" height="1" fill="#fff" opacity="0.4"/><rect x="714" y="22" width="1" height="1" fill="#fff" opacity="0.4"/><rect x="712" y="8" width="1" height="1" fill="#fff" opacity="0.15"/><rect x="795" y="3" width="1" height="1" fill="#fff" opacity="0.2"/><rect x="719" y="45" width="1" height="1" fill="#fff" opacity="0.4"/><rect x="748" y="7" width="1" height="1" fill="#dfe6f0" opacity="1"/><rect x="564" y="38" width="1" height="1" fill="#dfe6f0" opacity="0.8"/><rect x="69" y="32" width="1" height="1" fill="#fff" opacity="0.4"/><rect x="600" y="8" width="2" height="2" fill="#dfe6f0" opacity="0.6"/><rect x="606" y="46" width="2" height="2" fill="#dfe6f0" opacity="0.4"/><rect x="31" y="19" width="2" height="2" fill="#fff" opacity="0.6"/><rect x="66" y="39" width="1.5" height="1.5" fill="#fff" opacity="0.6"/><rect x="605" y="0" width="1" height="1" fill="#fff" opacity="0.8"/><rect x="596" y="18" width="1" height="1" fill="#fff" opacity="1"/><rect x="128" y="21" width="1" height="1" fill="#fff" opacity="0.8"/><rect x="456" y="4" width="2" height="2" fill="#dfe6f0" opacity="1"/><rect x="377" y="0" width="1.5" height="1.5" fill="#fff" opacity="1"/><rect x="514" y="37" width="2" height="2" fill="#fff" opacity="1"/><rect x="219" y="42" width="1" height="1" fill="#fff" opacity="0.4"/><rect x="485" y="29" width="2" height="2" fill="#fff" opacity="0.6"/><rect x="799" y="33" width="1" height="1" fill="#fff" opacity="0.8"/><rect x="738" y="14" width="1" height="1" fill="#fff" opacity="0.8"/><rect x="747" y="31" width="1" height="1" fill="#dfe6f0" opacity="0.4"/><rect x="227" y="22" width="1" height="1" fill="#fff" opacity="1"/><rect x="508" y="17" width="1.5" height="1.5" fill="#fff" opacity="0.4"/><rect x="23" y="28" width="2" height="2" fill="#fff" opacity="0.4"/><rect x="452" y="25" width="1" height="1" fill="#fff" opacity="0.6"/><rect x="448" y="27" width="1" height="1" fill="#fff" opacity="0.8"/><rect x="472" y="32" width="1" height="1" fill="#dfe6f0" opacity="0.6"/><rect x="350" y="18" width="1" height="1" fill="#dfe6f0" opacity="1"/><rect x="428" y="43" width="1" height="1" fill="#fff" opacity="0.8"/><rect x="4" y="17" width="1" height="1" fill="#fff" opacity="0.6"/><rect x="740" y="32" width="1.5" height="1.5" fill="#fff" opacity="1"/><rect x="302" y="47" width="1" height="1" fill="#fff" opacity="0.4"/><rect x="703" y="14" width="1" height="1" fill="#fff" opacity="1"/><rect x="306" y="36" width="1.5" height="1.5" fill="#fff" opacity="0.4"/><rect x="381" y="30" width="1" height="1" fill="#fff" opacity="0.8"/><rect x="546" y="4" width="1" height="1" fill="#fff" opacity="0.4"/><rect x="636" y="44" width="2" height="2" fill="#fff" opacity="0.8"/><rect x="235" y="6" width="1" height="1" fill="#dfe6f0" opacity="0.6"/><rect x="384" y="41" width="2" height="2" fill="#dfe6f0" opacity="0.6"/><rect x="66" y="20" width="1" height="1" fill="#fff" opacity="0.4"/><rect x="612" y="6" width="1" height="1" fill="#fff" opacity="1"/><rect x="177" y="28" width="2" height="2" fill="#fff" opacity="0.6"/><rect x="120" y="37" width="2" height="2" fill="#fff" opacity="0.8"/><rect x="484" y="38" width="1" height="1" fill="#fff" opacity="0.4"/><rect x="505" y="3" width="2" height="2" fill="#fff" opacity="1"/><rect x="311" y="7" width="2" height="2" fill="#fff" opacity="0.8"/><rect x="255" y="19" width="2" height="2" fill="#fff" opacity="0.6"/><rect x="470" y="15" width="2" height="2" fill="#fff" opacity="0.4"/><rect x="678" y="21" width="1" height="1" fill="#fff" opacity="1"/><rect x="775" y="2" width="2" height="2" fill="#fff" opacity="1"/><rect x="561" y="45" width="2" height="2" fill="#fff" opacity="1"/><rect x="775" y="9" width="1" height="1" fill="#dfe6f0" opacity="0.8"/><rect x="508" y="27" width="1" height="1" fill="#fff" opacity="0.6"/><rect x="482" y="25" width="1" height="1" fill="#dfe6f0" opacity="0.8"/><rect x="689" y="10" width="1" height="1" fill="#dfe6f0" opacity="0.8"/><rect x="760" y="19" width="1.5" height="1.5" fill="#fff" opacity="0.4"/><rect x="46" y="27" width="1" height="1" fill="#fff" opacity="0.6"/><rect x="118" y="45" width="2" height="2" fill="#fff" opacity="0.4"/><rect x="309" y="17" width="1" height="1" fill="#fff" opacity="0.4"/><rect x="387" y="0" width="2" height="2" fill="#fff" opacity="1"/><rect x="187" y="43" width="1" height="1" fill="#fff" opacity="1"/><rect x="285" y="35" width="1" height="1" fill="#fff" opacity="0.8"/><rect x="597" y="17" width="1" height="1" fill="#fff" opacity="1"/><rect x="92" y="34" width="1" height="1" fill="#fff" opacity="1"/><rect x="642" y="2" width="2" height="2" fill="#dfe6f0" opacity="0.4"/><rect x="300" y="22" width="1" height="1" fill="#dfe6f0" opacity="1"/><rect x="654" y="44" width="1.5" height="1.5" fill="#dfe6f0" opacity="0.8"/><rect x="242" y="9" width="2" height="2" fill="#fff" opacity="0.8"/><rect x="576" y="30" width="1" height="1" fill="#fff" opacity="0.8"/><rect x="143" y="38" width="1.5" height="1.5" fill="#fff" opacity="1"/><rect x="90" y="32" width="1" height="1" fill="#dfe6f0" opacity="0.4"/><rect x="497" y="29" width="2" height="2" fill="#dfe6f0" opacity="0.6"/><rect x="506" y="12" width="2" height="2" fill="#fff" opacity="1"/><rect x="655" y="31" width="1" height="1" fill="#fff" opacity="0.6"/><rect x="187" y="38" width="1" height="1" fill="#fff" opacity="1"/><rect x="582" y="28" width="2" height="2" fill="#fff" opacity="0.4"/><rect x="778" y="14" width="2" height="2" fill="#fff" opacity="0.4"/><rect x="237" y="14" width="1" height="1" fill="#dfe6f0" opacity="0.6"/><rect x="76" y="29" width="2" height="2" fill="#dfe6f0" opacity="0.8"/><rect x="585" y="13" width="1" height="1" fill="#fff" opacity="0.6"/><rect x="209" y="27" width="1" height="1" fill="#fff" opacity="0.8"/><rect x="48" y="18" width="1.5" height="1.5" fill="#fff" opacity="0.6"/><rect x="698" y="2" width="1" height="1" fill="#fff" opacity="0.8"/><rect x="431" y="38" width="1" height="1" fill="#fff" opacity="0.8"/><rect x="396" y="44" width="1" height="1" fill="#dfe6f0" opacity="0.4"/><rect x="756" y="40" width="2" height="2" fill="#fff" opacity="0.6"/><rect x="29" y="11" width="1" height="1" fill="#dfe6f0" opacity="0.4"/><rect x="161" y="28" width="2" height="2" fill="#fff" opacity="0.4"/><rect x="50" y="9" width="1" height="1" fill="#dfe6f0" opacity="0.6"/><rect x="60" y="30" width="2" height="2" fill="#dfe6f0" opacity="0.6"/><rect x="496" y="17" width="2" height="2" fill="#dfe6f0" opacity="0.6"/><rect x="111" y="21" width="1" height="1" fill="#fff" opacity="0.6"/><rect x="563" y="17" width="1" height="1" fill="#dfe6f0" opacity="1"/><rect x="102" y="13" width="2" height="2" fill="#fff" opacity="1"/><rect x="88" y="33" width="1" height="1" fill="#fff" opacity="1"/><rect x="62" y="25" width="1" height="1" fill="#fff" opacity="0.8"/><rect x="423" y="21" width="1.5" height="1.5" fill="#fff" opacity="0.8"/><rect x="405" y="11" width="1" height="1" fill="#fff" opacity="0.4"/><rect x="23" y="16" width="1.5" height="1.5" fill="#dfe6f0" opacity="1"/><rect x="656" y="22" width="2" height="2" fill="#fff" opacity="0.8"/><rect x="360" y="12" width="2" height="2" fill="#fff" opacity="1"/><rect x="204" y="14" width="1" height="1" fill="#fff" opacity="0.4"/><rect x="277" y="18" width="1" height="1" fill="#fff" opacity="0.6"/><rect x="548" y="36" width="1" height="1" fill="#fff" opacity="0.4"/><rect x="29" y="0" width="2" height="2" fill="#fff" opacity="1"/><rect x="673" y="40" width="1" height="1" fill="#fff" opacity="0.4"/><rect x="754" y="9" width="1" height="1" fill="#fff" opacity="0.4"/><rect x="282" y="6" width="2" height="2" fill="#fff" opacity="0.6"/><rect x="257" y="8" width="1" height="1" fill="#fff" opacity="0.4"/><rect x="354" y="10" width="1" height="1" fill="#fff" opacity="0.4"/><rect x="576" y="35" width="1" height="1" fill="#dfe6f0" opacity="0.4"/><rect x="512" y="11" width="1" height="1" fill="#dfe6f0" opacity="1"/><rect x="89" y="13" width="1" height="1" fill="#fff" opacity="0.6"/><rect x="794" y="29" width="1" height="1" fill="#dfe6f0" opacity="0.6"/><rect x="773" y="37" width="2" height="2" fill="#dfe6f0" opacity="0.8"/><rect x="536" y="47" width="2" height="2" fill="#fff" opacity="0.8"/><rect x="622" y="25" width="1.5" height="1.5" fill="#dfe6f0" opacity="0.4"/><rect x="733" y="33" width="1" height="1" fill="#dfe6f0" opacity="1"/><rect x="687" y="8" width="1" height="1" fill="#dfe6f0" opacity="0.8"/><rect x="38" y="19" width="1" height="1" fill="#fff" opacity="1"/><rect x="107" y="46" width="1" height="1" fill="#fff" opacity="0.4"/><rect x="344" y="27" width="1" height="1" fill="#dfe6f0" opacity="1"/><rect x="272" y="38" width="1.5" height="1.5" fill="#dfe6f0" opacity="0.8"/><rect x="605" y="4" width="1" height="1" fill="#fff" opacity="0.6"/><rect x="657" y="42" width="1" height="1" fill="#dfe6f0" opacity="1"/><rect x="773" y="17" width="1.5" height="1.5" fill="#dfe6f0" opacity="1"/><rect x="252" y="38" width="1" height="1" fill="#dfe6f0" opacity="0.4"/><rect x="110" y="15" width="1" height="1" fill="#fff" opacity="0.4"/><rect x="720" y="37" width="2" height="2" fill="#dfe6f0" opacity="0.8"/><rect x="353" y="38" width="1" height="1" fill="#dfe6f0" opacity="0.4"/><rect x="352" y="18" width="1" height="1" fill="#fff" opacity="0.4"/><rect x="157" y="19" width="1" height="1" fill="#dfe6f0" opacity="1"/><rect x="608" y="47" width="1" height="1" fill="#dfe6f0" opacity="0.8"/><rect x="322" y="45" width="2" height="2" fill="#fff" opacity="1"/><rect x="394" y="5" width="1" height="1" fill="#fff" opacity="0.8"/><rect x="196" y="4" width="2" height="2" fill="#fff" opacity="0.6"/><rect x="287" y="4" width="1" height="1" fill="#fff" opacity="1"/><rect x="357" y="4" width="1" height="1" fill="#fff" opacity="1"/><rect x="408" y="19" width="2" height="2" fill="#dfe6f0" opacity="0.4"/><rect x="186" y="37" width="1" height="1" fill="#fff" opacity="0.8"/><rect x="348" y="14" width="1" height="1" fill="#dfe6f0" opacity="0.8"/><rect x="43" y="43" width="2" height="2" fill="#fff" opacity="0.6"/><rect x="582" y="25" width="1" height="1" fill="#fff" opacity="0.8"/><rect x="452" y="29" width="1.5" height="1.5" fill="#fff" opacity="0.4"/><rect x="435" y="41" width="1" height="1" fill="#dfe6f0" opacity="0.6"/><rect x="500" y="11" width="1" height="1" fill="#fff" opacity="0.4"/><rect x="732" y="32" width="1.5" height="1.5" fill="#dfe6f0" opacity="0.8"/><rect x="496" y="34" width="2" height="2" fill="#dfe6f0" opacity="0.8"/><rect x="307" y="46" width="2" height="2" fill="#dfe6f0" opacity="0.8"/><rect x="693" y="42" width="1" height="1" fill="#fff" opacity="0.4"/><rect x="484" y="44" width="1" height="1" fill="#dfe6f0" opacity="0.8"/><rect x="1" y="10" width="1" height="1" fill="#fff" opacity="0.6"/><rect x="127" y="37" width="2" height="2" fill="#fff" opacity="0.6"/><rect x="119" y="41" width="1" height="1" fill="#dfe6f0" opacity="0.8"/><rect x="781" y="1" width="2" height="2" fill="#fff" opacity="0.8"/><rect x="794" y="18" width="1" height="1" fill="#fff" opacity="0.4"/><rect x="433" y="18" width="1" height="1" fill="#fff" opacity="0.8"/><rect x="739" y="40" width="1" height="1" fill="#fff" opacity="0.4"/><rect x="94" y="24" width="2" height="2" fill="#dfe6f0" opacity="0.6"/><rect x="327" y="36" width="1" height="1" fill="#dfe6f0" opacity="0.4"/><rect x="649" y="39" width="1.5" height="1.5" fill="#fff" opacity="0.4"/><rect x="278" y="22" width="1" height="1" fill="#fff" opacity="0.4"/><rect x="98" y="45" width="2" height="2" fill="#dfe6f0" opacity="0.6"/><rect x="163" y="41" width="1" height="1" fill="#fff" opacity="0.6"/><rect x="523" y="45" width="2" height="2" fill="#fff" opacity="0.8"/><rect x="591" y="44" width="1" height="1" fill="#fff" opacity="0.4"/><rect x="608" y="46" width="1.5" height="1.5" fill="#fff" opacity="0.4"/><rect x="181" y="31" width="2" height="2" fill="#fff" opacity="0.8"/><rect x="384" y="20" width="1" height="1" fill="#fff" opacity="0.4"/><rect x="755" y="20" width="1" height="1" fill="#fff" opacity="0.4"/><rect x="258" y="14" width="1" height="1" fill="#dfe6f0" opacity="0.6"/><rect x="34" y="32" width="1" height="1" fill="#dfe6f0" opacity="1"/><rect x="639" y="35" width="1" height="1" fill="#dfe6f0" opacity="1"/><rect x="645" y="39" width="2" height="2" fill="#fff" opacity="0.4"/><rect x="127" y="1" width="2" height="2" fill="#fff" opacity="0.6"/><rect x="150" y="38" width="1" height="1" fill="#dfe6f0" opacity="0.6"/><rect x="125" y="31" width="2" height="2" fill="#fff" opacity="0.6"/><rect x="732" y="10" width="2" height="2" fill="#fff" opacity="0.4"/><rect x="344" y="25" width="1.5" height="1.5" fill="#fff" opacity="0.4"/><rect x="519" y="38" width="1" height="1" fill="#dfe6f0" opacity="0.8"/><rect x="734" y="2" width="1" height="1" fill="#fff" opacity="0.4"/><rect x="583" y="45" width="1" height="1" fill="#dfe6f0" opacity="1"/><rect x="527" y="42" width="2" height="2" fill="#fff" opacity="1"/><rect x="654" y="16" width="1.5" height="1.5" fill="#fff" opacity="0.6"/><rect x="185" y="38" width="1" height="1" fill="#fff" opacity="0.8"/><rect x="380" y="5" width="2" height="2" fill="#fff" opacity="0.4"/><rect x="193" y="35" width="1" height="1" fill="#fff" opacity="1"/><rect x="532" y="3" width="1.5" height="1.5" fill="#dfe6f0" opacity="1"/><rect x="370" y="26" width="2" height="2" fill="#fff" opacity="0.8"/><rect x="786" y="22" width="1" height="1" fill="#fff" opacity="1"/><rect x="353" y="1" width="1" height="1" fill="#dfe6f0" opacity="1"/><rect x="709" y="45" width="2" height="2" fill="#fff" opacity="0.8"/><rect x="600" y="24" width="2" height="2" fill="#dfe6f0" opacity="0.6"/><rect x="167" y="25" width="2" height="2" fill="#fff" opacity="0.6"/><rect x="22" y="26" width="1.5" height="1.5" fill="#fff" opacity="0.8"/><rect x="237" y="42" width="1" height="1" fill="#dfe6f0" opacity="0.6"/><rect x="234" y="21" width="1.5" height="1.5" fill="#fff" opacity="0.4"/><rect x="322" y="21" width="1.5" height="1.5" fill="#fff" opacity="1"/><rect x="429" y="8" width="1" height="1" fill="#fff" opacity="1"/><rect x="747" y="24" width="1" height="1" fill="#fff" opacity="0.4"/><rect x="164" y="25" width="2" height="2" fill="#fff" opacity="0.6"/><rect x="593" y="25" width="2" height="2" fill="#dfe6f0" opacity="0.8"/><rect x="110" y="28" width="1.5" height="1.5" fill="#dfe6f0" opacity="0.6"/><rect x="740" y="27" width="1" height="1" fill="#c8d4e6" opacity="0.4"/><rect x="758" y="46" width="1" height="1" fill="#dfe6f0" opacity="0.8"/><rect x="752" y="26" width="1" height="1" fill="#dfe6f0" opacity="1"/><rect x="702" y="26" width="2" height="2" fill="#c8d4e6" opacity="0.8"/><rect x="798" y="11" width="1" height="1" fill="#c8d4e6" opacity="1"/><rect x="775" y="1" width="2" height="2" fill="#c8d4e6" opacity="1"/><rect x="799" y="32" width="1" height="1" fill="#dfe6f0" opacity="0.4"/><rect x="735" y="15" width="1" height="1" fill="#c8d4e6" opacity="0.8"/><rect x="761" y="16" width="1" height="1" fill="#dfe6f0" opacity="1"/><rect x="759" y="12" width="1.5" height="1.5" fill="#dfe6f0" opacity="1"/><rect x="794" y="23" width="1.5" height="1.5" fill="#c8d4e6" opacity="0.4"/><rect x="782" y="5" width="2" height="2" fill="#dfe6f0" opacity="0.8"/><rect x="769" y="8" width="1" height="1" fill="#fff" opacity="0.8"/><rect x="730" y="27" width="1" height="1" fill="#c8d4e6" opacity="0.4"/><rect x="757" y="8" width="1.5" height="1.5" fill="#c8d4e6" opacity="1"/><rect x="709" y="0" width="2" height="2" fill="#c8d4e6" opacity="0.4"/><rect x="707" y="43" width="1" height="1" fill="#c8d4e6" opacity="0.6"/><rect x="765" y="16" width="1" height="1" fill="#c8d4e6" opacity="0.4"/><rect x="784" y="12" width="2" height="2" fill="#c8d4e6" opacity="0.6"/><rect x="750" y="44" width="1.5" height="1.5" fill="#dfe6f0" opacity="1"/><rect x="768" y="5" width="1" height="1" fill="#dfe6f0" opacity="0.4"/><rect x="705" y="4" width="2" height="2" fill="#c8d4e6" opacity="0.8"/><rect x="752" y="22" width="1" height="1" fill="#dfe6f0" opacity="0.6"/><rect x="727" y="30" width="1" height="1" fill="#dfe6f0" opacity="0.6"/><rect x="750" y="39" width="2" height="2" fill="#dfe6f0" opacity="1"/><rect x="761" y="12" width="1" height="1" fill="#c8d4e6" opacity="0.4"/><rect x="774" y="3" width="2" height="2" fill="#dfe6f0" opacity="0.6"/><rect x="725" y="39" width="2" height="2" fill="#fff" opacity="0.4"/><rect x="752" y="18" width="1" height="1" fill="#dfe6f0" opacity="0.4"/><rect x="728" y="17" width="2" height="2" fill="#fff" opacity="1"/><rect x="732" y="22" width="1.5" height="1.5" fill="#fff" opacity="0.4"/><rect x="737" y="6" width="2" height="2" fill="#c8d4e6" opacity="0.6"/><rect x="713" y="5" width="2" height="2" fill="#dfe6f0" opacity="0.4"/><rect x="732" y="20" width="1.5" height="1.5" fill="#fff" opacity="0.6"/><rect x="770" y="28" width="2" height="2" fill="#c8d4e6" opacity="0.4"/><rect x="806" y="3" width="1" height="1" fill="#c8d4e6" opacity="0.6"/><rect x="763" y="23" width="1" height="1" fill="#fff" opacity="1"/><rect x="771" y="18" width="1.5" height="1.5" fill="#dfe6f0" opacity="1"/><rect x="792" y="3" width="1.5" height="1.5" fill="#fff" opacity="0.6"/><rect x="752" y="40" width="1" height="1" fill="#fff" opacity="1"/><rect x="775" y="24" width="1" height="1" fill="#dfe6f0" opacity="0.8"/><rect x="790" y="42" width="1" height="1" fill="#c8d4e6" opacity="0.6"/><rect x="704" y="23" width="1" height="1" fill="#dfe6f0" opacity="1"/><rect x="758" y="20" width="1" height="1" fill="#dfe6f0" opacity="0.8"/><rect x="721" y="11" width="1" height="1" fill="#dfe6f0" opacity="1"/><rect x="753" y="36" width="2" height="2" fill="#dfe6f0" opacity="0.8"/><rect x="731" y="24" width="1" height="1" fill="#dfe6f0" opacity="0.4"/><rect x="763" y="28" width="1.5" height="1.5" fill="#fff" opacity="1"/><rect x="733" y="1" width="1" height="1" fill="#fff" opacity="0.4"/><rect x="739" y="45" width="1" height="1" fill="#c8d4e6" opacity="0.8"/><rect x="794" y="8" width="1" height="1" fill="#c8d4e6" opacity="0.8"/><rect x="733" y="42" width="2" height="2" fill="#c8d4e6" opacity="1"/><rect x="777" y="32" width="1.5" height="1.5" fill="#fff" opacity="0.8"/><rect x="767" y="13" width="1" height="1" fill="#fff" opacity="0.6"/><rect x="764" y="1" width="1" height="1" fill="#fff" opacity="0.6"/><rect x="778" y="43" width="1" height="1" fill="#c8d4e6" opacity="0.8"/><rect x="777" y="12" width="1.5" height="1.5" fill="#dfe6f0" opacity="1"/><rect x="782" y="24" width="1" height="1" fill="#dfe6f0" opacity="0.4"/><rect x="782" y="31" width="2" height="2" fill="#fff" opacity="0.4"/><rect x="755" y="20" width="2" height="2" fill="#dfe6f0" opacity="1"/><rect x="713" y="16" width="1" height="1" fill="#dfe6f0" opacity="0.8"/><rect x="794" y="26" width="2" height="2" fill="#dfe6f0" opacity="0.8"/><rect x="759" y="2" width="2" height="2" fill="#dfe6f0" opacity="0.8"/><rect x="748" y="13" width="1.5" height="1.5" fill="#fff" opacity="0.8"/><rect x="728" y="32" width="2" height="2" fill="#fff" opacity="1"/><rect x="763" y="14" width="1" height="1" fill="#dfe6f0" opacity="0.8"/><rect x="777" y="14" width="2" height="2" fill="#fff" opacity="0.4"/><rect x="706" y="41" width="2" height="2" fill="#dfe6f0" opacity="0.6"/><rect x="783" y="36" width="2" height="2" fill="#dfe6f0" opacity="0.4"/><rect x="756" y="15" width="1" height="1" fill="#dfe6f0" opacity="0.4"/><rect x="758" y="4" width="1" height="1" fill="#dfe6f0" opacity="0.4"/><rect x="764" y="44" width="2" height="2" fill="#fff" opacity="1"/><rect x="743" y="46" width="2" height="2" fill="#c8d4e6" opacity="1"/><rect x="781" y="3" width="1" height="1" fill="#c8d4e6" opacity="1"/><rect x="701" y="34" width="2" height="2" fill="#dfe6f0" opacity="0.4"/><rect x="716" y="38" width="1.5" height="1.5" fill="#c8d4e6" opacity="0.6"/><rect x="722" y="34" width="2" height="2" fill="#fff" opacity="1"/><rect x="794" y="10" width="1" height="1" fill="#fff" opacity="1"/><rect x="801" y="46" width="2" height="2" fill="#c8d4e6" opacity="0.4"/><rect x="710" y="28" width="2" height="2" fill="#fff" opacity="0.8"/><rect x="769" y="36" width="2" height="2" fill="#c8d4e6" opacity="0.4"/><rect x="726" y="34" width="1" height="1" fill="#dfe6f0" opacity="1"/><rect x="743" y="7" width="2" height="2" fill="#c8d4e6" opacity="0.8"/><rect x="784" y="17" width="1.5" height="1.5" fill="#dfe6f0" opacity="0.6"/><rect x="758" y="21" width="1" height="1" fill="#fff" opacity="0.6"/><rect x="736" y="29" width="1" height="1" fill="#fff" opacity="0.8"/><rect x="804" y="32" width="1" height="1" fill="#c8d4e6" opacity="0.8"/><rect x="718" y="24" width="1.5" height="1.5" fill="#fff" opacity="0.6"/><rect x="716" y="40" width="2" height="2" fill="#c8d4e6" opacity="1"/><rect x="761" y="35" width="2" height="2" fill="#c8d4e6" opacity="0.8"/><rect x="755" y="41" width="1" height="1" fill="#dfe6f0" opacity="1"/><rect x="728" y="42" width="2" height="2" fill="#dfe6f0" opacity="0.6"/><rect x="702" y="20" width="1.5" height="1.5" fill="#c8d4e6" opacity="0.4"/><rect x="705" y="46" width="1" height="1" fill="#dfe6f0" opacity="0.4"/><rect x="736" y="7" width="1" height="1" fill="#c8d4e6" opacity="0.8"/><rect x="702" y="6" width="2" height="2" fill="#dfe6f0" opacity="0.4"/><rect x="749" y="18" width="2" height="2" fill="#dfe6f0" opacity="0.8"/><rect x="778" y="40" width="1" height="1" fill="#dfe6f0" opacity="1"/><rect x="796" y="21" width="2" height="2" fill="#dfe6f0" opacity="0.8"/><rect x="776" y="31" width="1.5" height="1.5" fill="#dfe6f0" opacity="0.6"/><rect x="710" y="40" width="2" height="2" fill="#dfe6f0" opacity="0.8"/><rect x="743" y="42" width="2" height="2" fill="#dfe6f0" opacity="0.6"/><rect x="743" y="35" width="2" height="2" fill="#c8d4e6" opacity="0.6"/><rect x="703" y="15" width="1" height="1" fill="#fff" opacity="0.4"/><rect x="755" y="35" width="1" height="1" fill="#fff" opacity="1"/><rect x="788" y="1" width="2" height="2" fill="#dfe6f0" opacity="0.8"/><rect x="761" y="27" width="2" height="2" fill="#c8d4e6" opacity="0.8"/><rect x="717" y="20" width="1" height="1" fill="#c8d4e6" opacity="0.4"/><rect x="716" y="21" width="1" height="1" fill="#fff" opacity="0.6"/><rect x="789" y="1" width="2" height="2" fill="#c8d4e6" opacity="1"/><path d="M0,47 Q8,47 8,39 V21 Q8,13 16,13 H240 Q248,13 248,21 V39 Q248,47 256,47 Z" fill="#000"/><rect x="507" y="29" width="1" height="1" fill="#fff" opacity="0.15"/><rect x="104" y="59" width="1" height="1" fill="#fff" opacity="0.4"/><rect x="204" y="32" width="1" height="1" fill="#fff" opacity="0.15"/><rect x="295" y="72" width="1" height="1" fill="#fff" opacity="0.3"/><rect x="308" y="16" width="1" height="1" fill="#fff" opacity="0.3"/><rect x="757" y="75" width="1" height="1" fill="#fff" opacity="0.4"/><rect x="642" y="73" width="1" height="1" fill="#fff" opacity="0.15"/><rect x="712" y="78" width="1" height="1" fill="#fff" opacity="0.2"/><rect x="101" y="80" width="1" height="1" fill="#fff" opacity="0.2"/><rect x="703" y="67" width="1" height="1" fill="#fff" opacity="0.15"/><rect x="651" y="59" width="1" height="1" fill="#fff" opacity="0.15"/><rect x="717" y="26" width="1" height="1" fill="#fff" opacity="0.4"/><rect x="50" y="77" width="1" height="1" fill="#fff" opacity="0.3"/><rect x="25" y="71" width="1" height="1" fill="#fff" opacity="0.3"/><rect x="755" y="25" width="1" height="1" fill="#fff" opacity="0.2"/><rect x="788" y="57" width="1" height="1" fill="#fff" opacity="0.2"/><rect x="711" y="50" width="1" height="1" fill="#fff" opacity="0.2"/><rect x="437" y="22" width="1" height="1" fill="#fff" opacity="0.3"/><rect x="565" y="68" width="1" height="1" fill="#fff" opacity="0.15"/><rect x="757" y="65" width="1" height="1" fill="#fff" opacity="0.4"/><rect x="487" y="74" width="1" height="1" fill="#fff" opacity="0.3"/><rect x="158" y="58" width="1" height="1" fill="#fff" opacity="0.3"/><rect x="586" y="49" width="1" height="1" fill="#fff" opacity="0.3"/><rect x="427" y="60" width="1" height="1" fill="#fff" opacity="0.15"/><rect x="383" y="81" width="1" height="1" fill="#fff" opacity="0.4"/><rect x="678" y="55" width="1" height="1" fill="#fff" opacity="0.3"/><rect x="681" y="73" width="1" height="1" fill="#fff" opacity="0.2"/><rect x="609" y="27" width="1" height="1" fill="#fff" opacity="0.4"/><rect x="716" y="74" width="1" height="1" fill="#fff" opacity="0.15"/><rect x="74" y="36" width="1" height="1" fill="#fff" opacity="0.3"/><rect x="323" y="16" width="1" height="1" fill="#fff" opacity="0.3"/><rect x="300" y="42" width="1" height="1" fill="#fff" opacity="0.15"/><rect x="128" y="16" width="1" height="1" fill="#fff" opacity="0.3"/><rect x="194" y="45" width="1" height="1" fill="#fff" opacity="0.3"/><rect x="279" y="17" width="1" height="1" fill="#fff" opacity="0.2"/><rect x="752" y="58" width="1" height="1" fill="#fff" opacity="0.2"/><rect x="437" y="50" width="1" height="1" fill="#fff" opacity="0.15"/><rect x="301" y="18" width="1" height="1" fill="#fff" opacity="0.4"/><rect x="737" y="14" width="1" height="1" fill="#fff" opacity="0.2"/><rect x="40" y="72" width="1" height="1" fill="#fff" opacity="0.15"/><rect x="346" y="40" width="1" height="1" fill="#fff" opacity="0.4"/><rect x="247" y="29" width="1" height="1" fill="#fff" opacity="0.3"/><rect x="575" y="76" width="1" height="1" fill="#fff" opacity="0.2"/><rect x="56" y="16" width="1" height="1" fill="#fff" opacity="0.15"/><rect x="122" y="20" width="1" height="1" fill="#fff" opacity="0.3"/><rect x="244" y="24" width="1" height="1" fill="#fff" opacity="0.4"/><rect x="295" y="47" width="1" height="1" fill="#fff" opacity="0.2"/><rect x="152" y="49" width="1" height="1" fill="#fff" opacity="0.15"/><rect x="596" y="75" width="1" height="1" fill="#fff" opacity="0.4"/><rect x="249" y="58" width="1" height="1" fill="#fff" opacity="0.4"/><rect x="704" y="27" width="1" height="1" fill="#fff" opacity="0.4"/><rect x="787" y="81" width="1" height="1" fill="#fff" opacity="0.2"/><rect x="163" y="27" width="1" height="1" fill="#fff" opacity="0.15"/><rect x="356" y="14" width="1" height="1" fill="#fff" opacity="0.3"/><rect x="115" y="32" width="1" height="1" fill="#fff" opacity="0.2"/><rect x="67" y="70" width="1" height="1" fill="#fff" opacity="0.3"/><rect x="312" y="53" width="1" height="1" fill="#fff" opacity="0.4"/><rect x="581" y="28" width="1" height="1" fill="#fff" opacity="0.3"/><rect x="141" y="30" width="1" height="1" fill="#fff" opacity="0.4"/><rect x="130" y="42" width="1" height="1" fill="#fff" opacity="0.15"/><rect x="324" y="69" width="1" height="1" fill="#fff" opacity="0.3"/><rect x="167" y="60" width="1" height="1" fill="#fff" opacity="0.4"/><rect x="408" y="15" width="1" height="1" fill="#fff" opacity="0.3"/><rect x="346" y="46" width="1" height="1" fill="#fff" opacity="0.2"/><rect x="28" y="16" width="1" height="1" fill="#fff" opacity="0.3"/><rect x="599" y="59" width="1" height="1" fill="#fff" opacity="0.3"/><rect x="480" y="76" width="1" height="1" fill="#fff" opacity="0.4"/><rect x="445" y="53" width="1" height="1" fill="#fff" opacity="0.2"/><rect x="725" y="66" width="1" height="1" fill="#fff" opacity="0.4"/><rect x="231" y="60" width="1" height="1" fill="#fff" opacity="0.2"/><rect x="688" y="39" width="1" height="1" fill="#fff" opacity="0.4"/><rect x="692" y="51" width="1" height="1" fill="#fff" opacity="0.15"/><rect x="285" y="20" width="1" height="1" fill="#fff" opacity="0.2"/><rect x="33" y="26" width="1" height="1" fill="#fff" opacity="0.15"/><rect x="158" y="83" width="1" height="1" fill="#fff" opacity="0.2"/><rect x="93" y="18" width="1" height="1" fill="#fff" opacity="0.4"/><rect x="518" y="15" width="1" height="1" fill="#fff" opacity="0.15"/><rect x="315" y="50" width="1" height="1" fill="#fff" opacity="0.3"/><rect x="223" y="79" width="1" height="1" fill="#fff" opacity="0.2"/><rect x="93" y="76" width="1" height="1" fill="#fff" opacity="0.15"/><rect x="497" y="34" width="1" height="1" fill="#fff" opacity="0.2"/><rect x="655" y="27" width="1" height="1" fill="#fff" opacity="0.4"/><rect x="779" y="28" width="1" height="1" fill="#fff" opacity="0.3"/><rect x="594" y="20" width="1" height="1" fill="#fff" opacity="0.15"/><rect x="404" y="67" width="1" height="1" fill="#fff" opacity="0.4"/><rect x="548" y="39" width="1" height="1" fill="#fff" opacity="0.4"/><rect x="113" y="56" width="1" height="1" fill="#fff" opacity="0.2"/><rect x="729" y="71" width="1" height="1" fill="#fff" opacity="0.3"/><rect x="382" y="51" width="1" height="1" fill="#fff" opacity="0.15"/><rect x="523" y="64" width="1" height="1" fill="#fff" opacity="0.3"/><rect x="403" y="78" width="1" height="1" fill="#fff" opacity="0.4"/><rect x="540" y="15" width="1" height="1" fill="#fff" opacity="0.4"/><rect x="207" y="16" width="1" height="1" fill="#fff" opacity="0.2"/><rect x="683" y="13" width="1" height="1" fill="#fff" opacity="0.3"/><rect x="670" y="38" width="1" height="1" fill="#fff" opacity="0.4"/><rect x="139" y="31" width="1" height="1" fill="#fff" opacity="0.4"/><rect x="355" y="22" width="1" height="1" fill="#fff" opacity="0.4"/><rect x="147" y="46" width="1" height="1" fill="#fff" opacity="0.2"/><rect x="69" y="50" width="1" height="1" fill="#fff" opacity="0.15"/><rect x="776" y="81" width="1" height="1" fill="#fff" opacity="0.15"/><rect x="626" y="83" width="1" height="1" fill="#fff" opacity="0.3"/><rect x="684" y="82" width="1" height="1" fill="#fff" opacity="0.2"/><rect x="532" y="33" width="1" height="1" fill="#fff" opacity="0.2"/><rect x="54" y="82" width="1" height="1" fill="#fff" opacity="0.2"/><rect x="223" y="31" width="1" height="1" fill="#fff" opacity="0.15"/><rect x="414" y="21" width="1" height="1" fill="#fff" opacity="0.4"/><rect x="353" y="55" width="1" height="1" fill="#fff" opacity="0.2"/><rect x="97" y="28" width="1" height="1" fill="#fff" opacity="0.3"/><rect x="761" y="52" width="1" height="1" fill="#fff" opacity="0.4"/><rect x="207" y="78" width="1" height="1" fill="#fff" opacity="0.15"/><rect x="350" y="29" width="1" height="1" fill="#fff" opacity="0.15"/><rect x="358" y="34" width="1" height="1" fill="#fff" opacity="0.3"/><rect x="122" y="43" width="1" height="1" fill="#fff" opacity="0.4"/><rect x="260" y="62" width="1" height="1" fill="#fff" opacity="0.3"/><rect x="350" y="68" width="1" height="1" fill="#fff" opacity="0.2"/><rect x="636" y="34" width="1" height="1" fill="#fff" opacity="0.3"/><rect x="221" y="18" width="1" height="1" fill="#fff" opacity="0.2"/><rect x="63" y="72" width="1" height="1" fill="#fff" opacity="0.15"/><rect x="22" y="33" width="1" height="1" fill="#fff" opacity="0.3"/><rect x="388" y="26" width="1" height="1" fill="#fff" opacity="0.2"/><rect x="547" y="41" width="1" height="1" fill="#fff" opacity="0.3"/><rect x="796" y="63" width="1" height="1" fill="#fff" opacity="0.15"/><rect x="241" y="44" width="1" height="1" fill="#fff" opacity="0.15"/><rect x="773" y="21" width="1" height="1" fill="#fff" opacity="0.3"/><rect x="32" y="77" width="1" height="1" fill="#fff" opacity="0.3"/><rect x="493" y="52" width="1" height="1" fill="#fff" opacity="0.15"/><rect x="794" y="63" width="1" height="1" fill="#fff" opacity="0.3"/><rect x="665" y="68" width="1" height="1" fill="#fff" opacity="0.2"/><rect x="523" y="82" width="1" height="1" fill="#fff" opacity="0.2"/><rect x="579" y="39" width="1" height="1" fill="#fff" opacity="0.15"/><rect x="380" y="21" width="1" height="1" fill="#fff" opacity="0.15"/><rect x="695" y="37" width="1" height="1" fill="#fff" opacity="0.2"/><rect x="363" y="28" width="1" height="1" fill="#fff" opacity="0.15"/><rect x="795" y="18" width="1" height="1" fill="#fff" opacity="0.3"/><rect x="286" y="32" width="1" height="1" fill="#fff" opacity="0.2"/><rect x="596" y="23" width="1" height="1" fill="#fff" opacity="0.15"/><rect x="377" y="49" width="1" height="1" fill="#fff" opacity="0.3"/><rect x="43" y="36" width="1" height="1" fill="#fff" opacity="0.4"/><rect x="649" y="67" width="1" height="1" fill="#fff" opacity="0.4"/><rect x="69" y="22" width="1" height="1" fill="#fff" opacity="0.2"/><rect x="291" y="24" width="1" height="1" fill="#fff" opacity="0.3"/><rect x="701" y="23" width="1" height="1" fill="#fff" opacity="0.2"/><rect x="376" y="76" width="1" height="1" fill="#fff" opacity="0.3"/><rect x="284" y="27" width="1" height="1" fill="#fff" opacity="0.4"/><rect x="517" y="32" width="1" height="1" fill="#fff" opacity="0.4"/><rect x="594" y="73" width="1" height="1" fill="#fff" opacity="0.2"/><rect x="161" y="69" width="1" height="1" fill="#fff" opacity="0.15"/><rect x="550" y="57" width="1" height="1" fill="#fff" opacity="0.2"/><rect x="74" y="73" width="1" height="1" fill="#fff" opacity="0.3"/><rect x="183" y="63" width="1" height="1" fill="#fff" opacity="0.4"/><rect x="723" y="30" width="1" height="1" fill="#fff" opacity="0.3"/><rect x="40" y="28" width="1" height="1" fill="#fff" opacity="0.3"/><rect x="333" y="72" width="1" height="1" fill="#fff" opacity="0.2"/><rect x="155" y="60" width="1" height="1" fill="#fff" opacity="0.15"/><rect x="327" y="53" width="1" height="1" fill="#fff" opacity="0.4"/><rect x="582" y="41" width="1" height="1" fill="#fff" opacity="0.4"/><rect x="521" y="18" width="1" height="1" fill="#fff" opacity="0.2"/><rect x="271" y="69" width="1" height="1" fill="#fff" opacity="0.15"/><rect x="25" y="71" width="1" height="1" fill="#fff" opacity="0.3"/><rect x="701" y="71" width="1" height="1" fill="#fff" opacity="0.3"/><rect x="338" y="26" width="1" height="1" fill="#fff" opacity="0.2"/><rect x="321" y="14" width="1" height="1" fill="#fff" opacity="0.4"/><rect x="27" y="14" width="1" height="1" fill="#fff" opacity="0.4"/><rect x="398" y="80" width="1" height="1" fill="#fff" opacity="0.2"/><rect x="116" y="82" width="1" height="1" fill="#fff" opacity="0.4"/><rect x="652" y="77" width="1" height="1" fill="#fff" opacity="0.2"/><rect x="449" y="47" width="1" height="1" fill="#fff" opacity="0.15"/><rect x="442" y="31" width="1" height="1" fill="#fff" opacity="0.3"/><rect x="429" y="24" width="1" height="1" fill="#fff" opacity="0.15"/><rect x="358" y="45" width="1" height="1" fill="#fff" opacity="0.2"/><rect x="353" y="63" width="1" height="1" fill="#fff" opacity="0.4"/><rect x="634" y="16" width="1" height="1" fill="#fff" opacity="0.3"/><rect x="327" y="37" width="1" height="1" fill="#fff" opacity="0.15"/><rect x="570" y="53" width="1" height="1" fill="#fff" opacity="0.15"/><rect x="801" y="25" width="1" height="1" fill="#fff" opacity="0.4"/><rect x="166" y="77" width="1" height="1" fill="#fff" opacity="0.4"/><rect x="111" y="17" width="1" height="1" fill="#fff" opacity="0.15"/><rect x="520" y="43" width="1" height="1" fill="#fff" opacity="0.3"/><rect x="166" y="56" width="1" height="1" fill="#fff" opacity="0.4"/><rect x="239" y="48" width="1" height="1" fill="#fff" opacity="0.4"/><rect x="218" y="35" width="1" height="1" fill="#fff" opacity="0.15"/><rect x="529" y="61" width="1" height="1" fill="#fff" opacity="0.4"/><rect x="119" y="18" width="1" height="1" fill="#fff" opacity="0.2"/><rect x="220" y="38" width="1" height="1" fill="#fff" opacity="0.3"/><rect x="429" y="74" width="1" height="1" fill="#fff" opacity="0.4"/><rect x="63" y="21" width="1" height="1" fill="#fff" opacity="0.3"/><rect x="431" y="78" width="1" height="1" fill="#fff" opacity="0.4"/><rect x="248" y="71" width="1" height="1" fill="#fff" opacity="0.15"/><rect x="111" y="26" width="1" height="1" fill="#fff" opacity="0.15"/><rect x="747" y="26" width="1" height="1" fill="#fff" opacity="0.2"/><rect x="564" y="52" width="1" height="1" fill="#fff" opacity="0.4"/><rect x="93" y="80" width="1" height="1" fill="#fff" opacity="0.2"/><rect x="763" y="79" width="1" height="1" fill="#fff" opacity="0.3"/><rect x="135" y="73" width="1" height="1" fill="#fff" opacity="0.2"/><rect x="727" y="74" width="1" height="1" fill="#fff" opacity="0.4"/><rect x="72" y="47" width="1" height="1" fill="#fff" opacity="0.2"/><rect x="538" y="60" width="1" height="1" fill="#fff" opacity="0.4"/><rect x="544" y="13" width="1" height="1" fill="#fff" opacity="0.4"/><rect x="626" y="40" width="1" height="1" fill="#fff" opacity="0.3"/><rect x="658" y="29" width="1" height="1" fill="#fff" opacity="0.15"/><rect x="663" y="27" width="1" height="1" fill="#fff" opacity="0.2"/><rect x="259" y="36" width="1" height="1" fill="#fff" opacity="0.3"/><rect x="721" y="38" width="1" height="1" fill="#fff" opacity="0.3"/><rect x="671" y="16" width="1" height="1" fill="#fff" opacity="0.15"/><rect x="246" y="63" width="1" height="1" fill="#fff" opacity="0.3"/><rect x="695" y="35" width="1" height="1" fill="#fff" opacity="0.15"/><rect x="717" y="76" width="1" height="1" fill="#fff" opacity="0.4"/><rect x="52" y="18" width="1" height="1" fill="#fff" opacity="0.15"/><rect x="788" y="62" width="1" height="1" fill="#fff" opacity="0.3"/><rect x="64" y="42" width="1" height="1" fill="#fff" opacity="0.3"/><rect x="698" y="51" width="1" height="1" fill="#fff" opacity="0.4"/><rect x="184" y="23" width="1" height="1" fill="#fff" opacity="0.2"/><rect x="300" y="56" width="1" height="1" fill="#fff" opacity="0.4"/><rect x="225" y="29" width="1" height="1" fill="#fff" opacity="0.3"/><rect x="756" y="30" width="1" height="1" fill="#fff" opacity="0.3"/><rect x="169" y="72" width="1" height="1" fill="#fff" opacity="0.15"/><rect x="113" y="16" width="1" height="1" fill="#fff" opacity="0.15"/><rect x="194" y="70" width="1" height="1" fill="#fff" opacity="0.4"/><rect x="35" y="22" width="1" height="1" fill="#fff" opacity="0.3"/><rect x="782" y="21" width="1" height="1" fill="#fff" opacity="0.15"/><rect x="561" y="68" width="1" height="1" fill="#fff" opacity="0.2"/><rect x="269" y="13" width="1" height="1" fill="#fff" opacity="0.3"/><rect x="656" y="69" width="1" height="1" fill="#fff" opacity="0.2"/><rect x="447" y="66" width="1" height="1" fill="#fff" opacity="0.15"/><rect x="678" y="36" width="1" height="1" fill="#fff" opacity="0.3"/><rect x="384" y="82" width="1" height="1" fill="#fff" opacity="0.2"/><rect x="230" y="64" width="1" height="1" fill="#fff" opacity="0.4"/><rect x="252" y="41" width="1" height="1" fill="#fff" opacity="0.4"/><rect x="391" y="54" width="1" height="1" fill="#fff" opacity="0.2"/><rect x="739" y="41" width="1" height="1" fill="#fff" opacity="0.15"/><rect x="27" y="29" width="1" height="1" fill="#fff" opacity="0.3"/><rect x="271" y="50" width="1" height="1" fill="#fff" opacity="0.4"/><rect x="455" y="61" width="1" height="1" fill="#fff" opacity="0.3"/><rect x="797" y="28" width="1" height="1" fill="#fff" opacity="0.4"/><rect x="27" y="43" width="1" height="1" fill="#fff" opacity="0.4"/><rect x="253" y="83" width="1" height="1" fill="#fff" opacity="0.4"/><rect x="66" y="80" width="1" height="1" fill="#fff" opacity="0.3"/><rect x="454" y="16" width="1" height="1" fill="#fff" opacity="0.4"/><rect x="351" y="84" width="1" height="1" fill="#fff" opacity="0.15"/><rect x="620" y="62" width="1" height="1" fill="#fff" opacity="0.2"/><rect x="601" y="70" width="1" height="1" fill="#fff" opacity="0.15"/><rect x="224" y="27" width="1" height="1" fill="#fff" opacity="0.4"/><rect x="715" y="62" width="1" height="1" fill="#fff" opacity="0.4"/><rect x="441" y="65" width="1" height="1" fill="#fff" opacity="0.2"/><rect x="36" y="62" width="1" height="1" fill="#fff" opacity="0.3"/><rect x="63" y="53" width="1" height="1" fill="#fff" opacity="0.15"/><rect x="696" y="70" width="1" height="1" fill="#fff" opacity="0.4"/><rect x="517" y="55" width="1" height="1" fill="#fff" opacity="0.4"/><rect x="586" y="24" width="1" height="1" fill="#fff" opacity="0.15"/><rect x="278" y="70" width="1" height="1" fill="#fff" opacity="0.2"/><rect x="355" y="50" width="1" height="1" fill="#fff" opacity="0.15"/><rect x="658" y="63" width="1" height="1" fill="#fff" opacity="0.2"/><rect x="568" y="16" width="1" height="1" fill="#fff" opacity="0.15"/><rect x="144" y="32" width="1" height="1" fill="#fff" opacity="0.4"/><rect x="346" y="30" width="1" height="1" fill="#fff" opacity="0.2"/><rect x="705" y="39" width="1" height="1" fill="#fff" opacity="0.4"/><rect x="399" y="43" width="1" height="1" fill="#fff" opacity="0.15"/><rect x="750" y="34" width="1" height="1" fill="#fff" opacity="0.15"/><rect x="789" y="28" width="1" height="1" fill="#fff" opacity="0.2"/><rect x="396" y="74" width="1" height="1" fill="#fff" opacity="0.15"/><rect x="805" y="60" width="1" height="1" fill="#fff" opacity="0.2"/><rect x="583" y="25" width="1" height="1" fill="#fff" opacity="0.15"/><rect x="84" y="73" width="1" height="1" fill="#fff" opacity="0.4"/><rect x="193" y="47" width="1" height="1" fill="#fff" opacity="0.3"/><rect x="536" y="74" width="1" height="1" fill="#fff" opacity="0.3"/><rect x="76" y="76" width="1" height="1" fill="#fff" opacity="0.3"/><rect x="393" y="21" width="1" height="1" fill="#fff" opacity="0.2"/><rect x="526" y="58" width="1" height="1" fill="#fff" opacity="0.15"/><rect x="105" y="81" width="1" height="1" fill="#fff" opacity="0.15"/><rect x="198" y="53" width="1" height="1" fill="#fff" opacity="0.2"/><rect x="624" y="25" width="1" height="1" fill="#fff" opacity="0.3"/><rect x="49" y="50" width="1" height="1" fill="#fff" opacity="0.4"/><rect x="466" y="60" width="1" height="1" fill="#fff" opacity="0.4"/><rect x="424" y="44" width="1" height="1" fill="#fff" opacity="0.3"/><rect x="423" y="75" width="1" height="1" fill="#fff" opacity="0.15"/><rect x="160" y="73" width="1" height="1" fill="#fff" opacity="0.15"/><rect x="40" y="58" width="1" height="1" fill="#fff" opacity="0.2"/><rect x="752" y="70" width="1" height="1" fill="#fff" opacity="0.3"/><rect x="68" y="34" width="1" height="1" fill="#fff" opacity="0.15"/><rect x="649" y="14" width="1" height="1" fill="#fff" opacity="0.15"/><rect x="210" y="45" width="1" height="1" fill="#fff" opacity="0.2"/><rect x="733" y="27" width="1" height="1" fill="#fff" opacity="0.3"/><rect x="61" y="32" width="1" height="1" fill="#fff" opacity="0.15"/><rect x="400" y="47" width="1" height="1" fill="#fff" opacity="0.3"/><rect x="127" y="29" width="1" height="1" fill="#fff" opacity="0.2"/><rect x="31" y="14" width="1" height="1" fill="#fff" opacity="0.3"/><rect x="470" y="60" width="1" height="1" fill="#fff" opacity="0.4"/><rect x="445" y="65" width="1" height="1" fill="#fff" opacity="0.3"/><rect x="575" y="79" width="1" height="1" fill="#fff" opacity="0.2"/><rect x="562" y="53" width="1" height="1" fill="#fff" opacity="0.15"/><rect x="450" y="69" width="1" height="1" fill="#fff" opacity="0.15"/><rect x="54" y="16" width="1" height="1" fill="#fff" opacity="0.4"/><rect x="341" y="46" width="1" height="1" fill="#fff" opacity="0.4"/><rect x="783" y="23" width="1" height="1" fill="#fff" opacity="0.4"/><rect x="196" y="15" width="1" height="1" fill="#fff" opacity="0.15"/><rect x="179" y="33" width="1" height="1" fill="#fff" opacity="0.3"/><rect x="24" y="61" width="1" height="1" fill="#fff" opacity="0.2"/><rect x="676" y="32" width="1" height="1" fill="#fff" opacity="0.3"/><rect x="254" y="21" width="1" height="1" fill="#fff" opacity="0.15"/><rect x="246" y="54" width="1" height="1" fill="#fff" opacity="0.3"/><rect x="142" y="40" width="1" height="1" fill="#fff" opacity="0.3"/><rect x="660" y="73" width="1" height="1" fill="#fff" opacity="0.2"/><rect x="225" y="15" width="1" height="1" fill="#fff" opacity="0.15"/><rect x="168" y="78" width="1" height="1" fill="#fff" opacity="0.15"/><rect x="725" y="20" width="1" height="1" fill="#fff" opacity="0.2"/><rect x="668" y="71" width="1" height="1" fill="#fff" opacity="0.3"/><rect x="391" y="18" width="1" height="1" fill="#fff" opacity="0.4"/><rect x="301" y="68" width="1" height="1" fill="#fff" opacity="0.15"/><rect x="285" y="30" width="1" height="1" fill="#fff" opacity="0.2"/><rect x="198" y="22" width="1" height="1" fill="#fff" opacity="0.2"/><rect x="457" y="80" width="1" height="1" fill="#fff" opacity="0.3"/><rect x="336" y="14" width="1" height="1" fill="#fff" opacity="0.4"/><rect x="716" y="82" width="1" height="1" fill="#fff" opacity="0.2"/><rect x="225" y="57" width="1" height="1" fill="#fff" opacity="0.15"/><rect x="67" y="54" width="1" height="1" fill="#fff" opacity="0.4"/><rect x="733" y="69" width="1" height="1" fill="#fff" opacity="0.3"/><rect x="481" y="20" width="1" height="1" fill="#fff" opacity="0.2"/><rect x="796" y="53" width="1" height="1" fill="#fff" opacity="0.15"/><rect x="318" y="70" width="1" height="1" fill="#fff" opacity="0.3"/><rect x="755" y="76" width="1" height="1" fill="#fff" opacity="0.2"/><rect x="14" y="24" width="1" height="1" fill="#fff" opacity="0.2"/><rect x="433" y="72" width="1" height="1" fill="#fff" opacity="0.15"/><rect x="559" y="73" width="1" height="1" fill="#fff" opacity="0.4"/><rect x="611" y="19" width="1" height="1" fill="#fff" opacity="0.4"/><rect x="187" y="44" width="1" height="1" fill="#fff" opacity="0.3"/><rect x="607" y="49" width="1" height="1" fill="#fff" opacity="0.4"/><rect x="735" y="70" width="1" height="1" fill="#fff" opacity="0.4"/><rect x="791" y="21" width="1" height="1" fill="#fff" opacity="0.15"/><rect x="786" y="79" width="1" height="1" fill="#fff" opacity="0.15"/><rect x="715" y="65" width="1" height="1" fill="#fff" opacity="0.2"/><rect x="165" y="14" width="1" height="1" fill="#fff" opacity="0.2"/><rect x="787" y="37" width="1" height="1" fill="#fff" opacity="0.3"/><rect x="315" y="40" width="1" height="1" fill="#fff" opacity="0.3"/><rect x="560" y="77" width="1" height="1" fill="#fff" opacity="0.3"/><rect x="511" y="62" width="1" height="1" fill="#fff" opacity="0.4"/><rect x="421" y="78" width="1" height="1" fill="#fff" opacity="0.3"/><rect x="31" y="68" width="1" height="1" fill="#fff" opacity="0.15"/><rect x="316" y="71" width="1" height="1" fill="#fff" opacity="0.3"/><rect x="71" y="54" width="1" height="1" fill="#fff" opacity="0.3"/><rect x="149" y="46" width="1" height="1" fill="#fff" opacity="0.4"/><rect x="130" y="31" width="1" height="1" fill="#fff" opacity="0.4"/><rect x="440" y="70" width="1" height="1" fill="#fff" opacity="0.4"/><rect x="453" y="73" width="1" height="1" fill="#fff" opacity="0.2"/><rect x="59" y="79" width="1" height="1" fill="#fff" opacity="0.15"/><rect x="503" y="61" width="1" height="1" fill="#fff" opacity="0.4"/><rect x="256" y="78" width="1" height="1" fill="#fff" opacity="0.15"/><rect x="236" y="83" width="1" height="1" fill="#fff" opacity="0.15"/><rect x="515" y="69" width="1" height="1" fill="#fff" opacity="0.2"/><rect x="347" y="53" width="1" height="1" fill="#fff" opacity="0.2"/><rect x="380" y="38" width="1" height="1" fill="#fff" opacity="0.15"/><rect x="41" y="53" width="1" height="1" fill="#fff" opacity="0.4"/><rect x="283" y="84" width="1" height="1" fill="#fff" opacity="0.15"/><rect x="310" y="23" width="1" height="1" fill="#fff" opacity="0.3"/><rect x="230" y="64" width="1" height="1" fill="#fff" opacity="0.2"/><rect x="206" y="44" width="1" height="1" fill="#fff" opacity="0.3"/><rect x="642" y="45" width="1" height="1" fill="#fff" opacity="0.3"/><rect x="86" y="42" width="1" height="1" fill="#fff" opacity="0.15"/><rect x="666" y="30" width="1" height="1" fill="#fff" opacity="0.2"/><rect x="301" y="18" width="1" height="1" fill="#fff" opacity="0.2"/><rect x="103" y="72" width="1" height="1" fill="#fff" opacity="0.3"/><rect x="740" y="46" width="1" height="1" fill="#fff" opacity="0.4"/><rect x="66" y="77" width="1" height="1" fill="#fff" opacity="0.15"/><rect x="204" y="73" width="1" height="1" fill="#fff" opacity="0.2"/><rect x="608" y="71" width="1" height="1" fill="#fff" opacity="0.3"/><rect x="114" y="58" width="1" height="1" fill="#fff" opacity="0.4"/><rect x="20" y="21" width="1" height="1" fill="#fff" opacity="0.4"/><rect x="365" y="49" width="1" height="1" fill="#fff" opacity="0.3"/><rect x="400" y="29" width="1" height="1" fill="#fff" opacity="0.3"/><rect x="608" y="65" width="1" height="1" fill="#fff" opacity="0.4"/><rect x="48" y="82" width="1" height="1" fill="#fff" opacity="0.3"/><rect x="519" y="70" width="1" height="1" fill="#fff" opacity="0.3"/><rect x="444" y="65" width="1" height="1" fill="#fff" opacity="0.3"/><rect x="225" y="69" width="1" height="1" fill="#fff" opacity="0.3"/><rect x="613" y="25" width="1" height="1" fill="#fff" opacity="0.4"/><rect x="330" y="76" width="1" height="1" fill="#fff" opacity="0.15"/><rect x="56" y="80" width="1" height="1" fill="#fff" opacity="0.4"/><rect x="533" y="62" width="1" height="1" fill="#fff" opacity="0.2"/><rect x="498" y="17" width="1" height="1" fill="#fff" opacity="0.15"/><rect x="571" y="27" width="1" height="1" fill="#fff" opacity="0.4"/><rect x="190" y="17" width="1" height="1" fill="#fff" opacity="0.15"/><rect x="145" y="54" width="1" height="1" fill="#fff" opacity="0.3"/><rect x="553" y="34" width="1" height="1" fill="#fff" opacity="0.2"/><rect x="752" y="73" width="1" height="1" fill="#fff" opacity="0.4"/><rect x="763" y="74" width="1" height="1" fill="#fff" opacity="0.2"/><rect x="110" y="83" width="1" height="1" fill="#fff" opacity="0.3"/><rect x="350" y="62" width="1" height="1" fill="#fff" opacity="0.3"/><rect x="256" y="56" width="1" height="1" fill="#fff" opacity="0.15"/><rect x="177" y="33" width="1" height="1" fill="#fff" opacity="0.3"/><rect x="693" y="69" width="1" height="1" fill="#fff" opacity="0.2"/><rect x="20" y="53" width="1" height="1" fill="#fff" opacity="0.15"/><rect x="176" y="44" width="1" height="1" fill="#fff" opacity="0.15"/><rect x="619" y="63" width="1" height="1" fill="#fff" opacity="0.15"/><rect x="701" y="74" width="1" height="1" fill="#fff" opacity="0.2"/><rect x="492" y="77" width="1" height="1" fill="#fff" opacity="0.15"/><rect x="186" y="40" width="1" height="1" fill="#fff" opacity="0.15"/><rect x="162" y="74" width="1" height="1" fill="#fff" opacity="0.4"/><rect x="756" y="51" width="1" height="1" fill="#fff" opacity="0.3"/><rect x="553" y="50" width="1" height="1" fill="#fff" opacity="0.3"/><rect x="249" y="46" width="1" height="1" fill="#fff" opacity="0.4"/><rect x="519" y="58" width="1" height="1" fill="#fff" opacity="0.15"/><rect x="57" y="23" width="1" height="1" fill="#fff" opacity="0.4"/><rect x="585" y="77" width="1" height="1" fill="#fff" opacity="0.3"/><rect x="184" y="28" width="1" height="1" fill="#fff" opacity="0.15"/><rect x="795" y="82" width="1" height="1" fill="#fff" opacity="0.2"/><rect x="420" y="41" width="1" height="1" fill="#fff" opacity="0.3"/><rect x="606" y="41" width="1" height="1" fill="#fff" opacity="0.4"/><rect x="724" y="69" width="1" height="1" fill="#fff" opacity="0.4"/><rect x="76" y="72" width="1" height="1" fill="#fff" opacity="0.2"/><rect x="68" y="71" width="1" height="1" fill="#fff" opacity="0.3"/><rect x="274" y="31" width="1" height="1" fill="#fff" opacity="0.3"/><rect x="595" y="65" width="1" height="1" fill="#fff" opacity="0.15"/><rect x="612" y="82" width="1" height="1" fill="#fff" opacity="0.3"/><rect x="40" y="68" width="1" height="1" fill="#fff" opacity="0.4"/><rect x="470" y="21" width="1" height="1" fill="#fff" opacity="0.3"/><rect x="471" y="47" width="1" height="1" fill="#fff" opacity="0.3"/><rect x="154" y="40" width="1" height="1" fill="#fff" opacity="0.2"/><rect x="724" y="83" width="1" height="1" fill="#fff" opacity="0.2"/><rect x="218" y="43" width="1" height="1" fill="#fff" opacity="0.3"/><rect x="375" y="19" width="1" height="1" fill="#fff" opacity="0.3"/><rect x="139" y="30" width="1" height="1" fill="#fff" opacity="0.4"/><rect x="710" y="76" width="1" height="1" fill="#fff" opacity="0.15"/><rect x="787" y="14" width="1" height="1" fill="#fff" opacity="0.3"/><rect x="226" y="37" width="1" height="1" fill="#fff" opacity="0.15"/><rect x="484" y="77" width="1" height="1" fill="#fff" opacity="0.2"/><rect x="447" y="45" width="1" height="1" fill="#fff" opacity="0.3"/><rect x="435" y="32" width="1" height="1" fill="#fff" opacity="0.4"/><rect x="403" y="19" width="1" height="1" fill="#fff" opacity="0.15"/><rect x="430" y="31" width="1" height="1" fill="#fff" opacity="0.2"/><rect x="321" y="29" width="1" height="1" fill="#fff" opacity="0.2"/><rect x="441" y="51" width="1" height="1" fill="#fff" opacity="0.3"/><rect x="209" y="64" width="1" height="1" fill="#fff" opacity="0.15"/><rect x="292" y="55" width="1" height="1" fill="#fff" opacity="0.2"/><rect x="307" y="66" width="1" height="1" fill="#fff" opacity="0.3"/><rect x="508" y="35" width="1" height="1" fill="#fff" opacity="0.4"/><rect x="402" y="44" width="1" height="1" fill="#fff" opacity="0.3"/><rect x="79" y="24" width="1" height="1" fill="#fff" opacity="0.3"/><rect x="736" y="60" width="1" height="1" fill="#fff" opacity="0.4"/><rect x="364" y="69" width="1" height="1" fill="#fff" opacity="0.3"/><rect x="721" y="83" width="1" height="1" fill="#fff" opacity="0.3"/><rect x="170" y="20" width="1" height="1" fill="#fff" opacity="0.15"/><rect x="439" y="46" width="1" height="1" fill="#fff" opacity="0.3"/><rect x="135" y="32" width="1" height="1" fill="#fff" opacity="0.2"/><rect x="211" y="38" width="1" height="1" fill="#fff" opacity="0.4"/><rect x="132" y="78" width="1" height="1" fill="#fff" opacity="0.2"/><rect x="732" y="32" width="1" height="1" fill="#fff" opacity="0.4"/><rect x="398" y="38" width="1" height="1" fill="#fff" opacity="0.15"/><rect x="339" y="34" width="1" height="1" fill="#fff" opacity="0.15"/><rect x="313" y="31" width="1" height="1" fill="#fff" opacity="0.2"/><rect x="294" y="70" width="1" height="1" fill="#fff" opacity="0.3"/><rect x="415" y="34" width="1" height="1" fill="#fff" opacity="0.15"/><rect x="277" y="60" width="1" height="1" fill="#fff" opacity="0.4"/><rect x="648" y="68" width="1" height="1" fill="#fff" opacity="0.15"/><rect x="16" y="21" width="1" height="1" fill="#fff" opacity="0.2"/><rect x="721" y="44" width="1" height="1" fill="#fff" opacity="0.15"/><rect x="431" y="23" width="1" height="1" fill="#fff" opacity="0.3"/><rect x="279" y="47" width="1" height="1" fill="#fff" opacity="0.15"/><rect x="60" y="38" width="1" height="1" fill="#fff" opacity="0.2"/><rect x="554" y="29" width="1" height="1" fill="#fff" opacity="0.4"/><rect x="595" y="79" width="1" height="1" fill="#fff" opacity="0.2"/><rect x="524" y="81" width="1" height="1" fill="#fff" opacity="0.15"/><rect x="254" y="50" width="1" height="1" fill="#fff" opacity="0.4"/><rect x="488" y="32" width="1" height="1" fill="#fff" opacity="0.2"/><rect x="212" y="36" width="1" height="1" fill="#fff" opacity="0.2"/><rect x="288" y="81" width="1" height="1" fill="#fff" opacity="0.2"/><rect x="509" y="59" width="1" height="1" fill="#fff" opacity="0.4"/><rect x="410" y="77" width="1" height="1" fill="#fff" opacity="0.3"/><rect x="626" y="70" width="1" height="1" fill="#fff" opacity="0.3"/><rect x="801" y="78" width="1" height="1" fill="#fff" opacity="0.2"/><rect x="608" y="67" width="1" height="1" fill="#fff" opacity="0.4"/><rect x="239" y="16" width="1" height="1" fill="#fff" opacity="0.2"/><rect x="220" y="83" width="1" height="1" fill="#fff" opacity="0.4"/><rect x="336" y="32" width="1" height="1" fill="#fff" opacity="0.3"/><rect x="134" y="66" width="1" height="1" fill="#fff" opacity="0.2"/><rect x="516" y="37" width="1" height="1" fill="#fff" opacity="0.3"/><rect x="600" y="52" width="1" height="1" fill="#fff" opacity="0.2"/><rect x="679" y="22" width="1" height="1" fill="#fff" opacity="0.4"/><rect x="202" y="54" width="1" height="1" fill="#fff" opacity="0.15"/><rect x="228" y="23" width="1" height="1" fill="#fff" opacity="0.4"/><rect x="666" y="14" width="1" height="1" fill="#fff" opacity="0.4"/><rect x="266" y="22" width="1" height="1" fill="#fff" opacity="0.3"/><rect x="678" y="79" width="1" height="1" fill="#fff" opacity="0.2"/><rect x="143" y="13" width="1" height="1" fill="#fff" opacity="0.2"/><rect x="42" y="61" width="1" height="1" fill="#fff" opacity="0.2"/><rect x="337" y="54" width="1" height="1" fill="#fff" opacity="0.15"/><rect x="55" y="34" width="1" height="1" fill="#fff" opacity="0.2"/><rect x="38" y="33" width="1" height="1" fill="#fff" opacity="0.2"/><rect x="280" y="14" width="1" height="1" fill="#fff" opacity="0.2"/><rect x="798" y="83" width="1" height="1" fill="#fff" opacity="0.2"/><rect x="114" y="79" width="1" height="1" fill="#fff" opacity="0.15"/><rect x="646" y="49" width="1" height="1" fill="#fff" opacity="0.3"/><rect x="152" y="41" width="1" height="1" fill="#fff" opacity="0.2"/><rect x="608" y="24" width="1" height="1" fill="#fff" opacity="0.3"/><rect x="247" y="16" width="1" height="1" fill="#fff" opacity="0.3"/><rect x="385" y="44" width="1" height="1" fill="#fff" opacity="0.4"/><rect x="336" y="78" width="1" height="1" fill="#fff" opacity="0.3"/><rect x="506" y="55" width="1" height="1" fill="#fff" opacity="0.3"/><rect x="682" y="77" width="1" height="1" fill="#fff" opacity="0.4"/><rect x="84" y="41" width="1" height="1" fill="#fff" opacity="0.2"/><rect x="163" y="83" width="1" height="1" fill="#fff" opacity="0.2"/><rect x="257" y="63" width="1" height="1" fill="#fff" opacity="0.3"/><rect x="627" y="36" width="1" height="1" fill="#fff" opacity="0.3"/><rect x="446" y="28" width="1" height="1" fill="#fff" opacity="0.4"/><rect x="499" y="39" width="1" height="1" fill="#fff" opacity="0.3"/><rect x="122" y="28" width="1" height="1" fill="#fff" opacity="0.2"/><rect x="170" y="35" width="1" height="1" fill="#fff" opacity="0.2"/><rect x="750" y="28" width="1" height="1" fill="#fff" opacity="0.4"/><rect x="161" y="49" width="1" height="1" fill="#fff" opacity="0.15"/><rect x="582" y="82" width="1" height="1" fill="#fff" opacity="0.15"/><rect x="287" y="80" width="1" height="1" fill="#fff" opacity="0.2"/><rect x="277" y="24" width="1" height="1" fill="#fff" opacity="0.3"/><rect x="367" y="25" width="1" height="1" fill="#fff" opacity="0.3"/><rect x="411" y="66" width="1" height="1" fill="#fff" opacity="0.3"/><rect x="451" y="14" width="1" height="1" fill="#fff" opacity="0.2"/><rect x="297" y="39" width="1" height="1" fill="#fff" opacity="0.3"/><rect x="296" y="74" width="1" height="1" fill="#fff" opacity="0.4"/><rect x="434" y="69" width="1" height="1" fill="#fff" opacity="0.15"/><rect x="787" y="56" width="1" height="1" fill="#fff" opacity="0.3"/><rect x="296" y="64" width="1" height="1" fill="#fff" opacity="0.3"/><rect x="713" y="82" width="1" height="1" fill="#fff" opacity="0.3"/><rect x="801" y="71" width="1" height="1" fill="#fff" opacity="0.15"/><rect x="473" y="44" width="1" height="1" fill="#fff" opacity="0.2"/><rect x="128" y="45" width="1" height="1" fill="#fff" opacity="0.3"/><rect x="519" y="23" width="1" height="1" fill="#fff" opacity="0.15"/><rect x="284" y="40" width="1" height="1" fill="#fff" opacity="0.15"/><rect x="21" y="39" width="1" height="1" fill="#fff" opacity="0.3"/><rect x="588" y="72" width="1" height="1" fill="#fff" opacity="0.2"/><rect x="624" y="47" width="1" height="1" fill="#fff" opacity="0.15"/><rect x="570" y="79" width="1" height="1" fill="#fff" opacity="0.2"/><rect x="124" y="42" width="1" height="1" fill="#fff" opacity="0.3"/><rect x="285" y="78" width="1" height="1" fill="#fff" opacity="0.2"/><rect x="573" y="39" width="1" height="1" fill="#fff" opacity="0.2"/><rect x="427" y="75" width="1" height="1" fill="#fff" opacity="0.4"/><rect x="570" y="46" width="1" height="1" fill="#fff" opacity="0.2"/><rect x="594" y="64" width="1" height="1" fill="#fff" opacity="0.2"/><rect x="106" y="82" width="1" height="1" fill="#fff" opacity="0.2"/><rect x="604" y="26" width="1" height="1" fill="#fff" opacity="0.2"/><rect x="20" y="82" width="1" height="1" fill="#fff" opacity="0.3"/><rect x="204" y="56" width="1" height="1" fill="#fff" opacity="0.3"/><rect x="460" y="54" width="1" height="1" fill="#fff" opacity="0.2"/><rect x="792" y="60" width="1" height="1" fill="#fff" opacity="0.4"/><rect x="419" y="24" width="1" height="1" fill="#fff" opacity="0.15"/><rect x="412" y="53" width="1" height="1" fill="#fff" opacity="0.4"/><rect x="159" y="57" width="1" height="1" fill="#fff" opacity="0.2"/><rect x="622" y="57" width="1" height="1" fill="#fff" opacity="0.15"/><rect x="18" y="68" width="1" height="1" fill="#fff" opacity="0.4"/><rect x="565" y="23" width="1" height="1" fill="#fff" opacity="0.3"/><rect x="637" y="37" width="1" height="1" fill="#fff" opacity="0.2"/><rect x="713" y="74" width="1" height="1" fill="#fff" opacity="0.3"/><rect x="148" y="28" width="1" height="1" fill="#fff" opacity="0.15"/><rect x="607" y="25" width="1" height="1" fill="#fff" opacity="0.3"/><rect x="120" y="26" width="1" height="1" fill="#fff" opacity="0.4"/><rect x="170" y="66" width="1" height="1" fill="#fff" opacity="0.15"/><rect x="346" y="67" width="1" height="1" fill="#fff" opacity="0.4"/><rect x="382" y="23" width="1" height="1" fill="#fff" opacity="0.4"/><rect x="785" y="63" width="1" height="1" fill="#fff" opacity="0.15"/><rect x="624" y="79" width="1" height="1" fill="#fff" opacity="0.15"/><rect x="714" y="19" width="1" height="1" fill="#fff" opacity="0.2"/><rect x="348" y="43" width="1" height="1" fill="#fff" opacity="0.3"/><rect x="638" y="79" width="1" height="1" fill="#fff" opacity="0.4"/><rect x="759" y="62" width="1" height="1" fill="#fff" opacity="0.3"/><rect x="601" y="72" width="1" height="1" fill="#fff" opacity="0.4"/><rect x="45" y="42" width="1" height="1" fill="#fff" opacity="0.4"/><rect x="449" y="76" width="1" height="1" fill="#fff" opacity="0.15"/><rect x="544" y="22" width="1" height="1" fill="#fff" opacity="0.3"/><rect x="546" y="67" width="1" height="1" fill="#fff" opacity="0.2"/><rect x="805" y="17" width="1" height="1" fill="#fff" opacity="0.4"/><rect x="481" y="52" width="1" height="1" fill="#fff" opacity="0.4"/><rect x="342" y="29" width="1" height="1" fill="#fff" opacity="0.3"/><rect x="149" y="55" width="1" height="1" fill="#fff" opacity="0.15"/><rect x="733" y="56" width="1" height="1" fill="#fff" opacity="0.2"/><rect x="627" y="72" width="1" height="1" fill="#fff" opacity="0.3"/><rect x="308" y="36" width="1" height="1" fill="#fff" opacity="0.15"/><rect x="356" y="19" width="1" height="1" fill="#fff" opacity="0.4"/><rect x="399" y="82" width="1" height="1" fill="#fff" opacity="0.3"/><rect x="175" y="27" width="1" height="1" fill="#fff" opacity="0.2"/><rect x="386" y="78" width="1" height="1" fill="#fff" opacity="0.15"/><rect x="353" y="72" width="1" height="1" fill="#fff" opacity="0.15"/><rect x="50" y="78" width="1" height="1" fill="#fff" opacity="0.3"/><rect x="588" y="60" width="1" height="1" fill="#fff" opacity="0.2"/><rect x="55" y="60" width="1" height="1" fill="#fff" opacity="0.2"/><rect x="770" y="51" width="1" height="1" fill="#fff" opacity="0.15"/><rect x="196" y="57" width="1" height="1" fill="#fff" opacity="0.2"/><rect x="55" y="64" width="1" height="1" fill="#fff" opacity="0.2"/><rect x="733" y="15" width="1" height="1" fill="#fff" opacity="0.3"/><rect x="608" y="21" width="1" height="1" fill="#fff" opacity="0.4"/><rect x="651" y="24" width="1" height="1" fill="#fff" opacity="0.4"/><rect x="336" y="13" width="1" height="1" fill="#fff" opacity="0.4"/><rect x="501" y="33" width="1" height="1" fill="#fff" opacity="0.3"/><rect x="57" y="24" width="1" height="1" fill="#fff" opacity="0.2"/><rect x="621" y="14" width="1" height="1" fill="#fff" opacity="0.15"/><rect x="360" y="40" width="1" height="1" fill="#fff" opacity="0.4"/><rect x="666" y="49" width="1" height="1" fill="#fff" opacity="0.3"/><rect x="226" y="44" width="1" height="1" fill="#fff" opacity="0.2"/><rect x="63" y="17" width="1" height="1" fill="#fff" opacity="0.4"/><rect x="376" y="39" width="1" height="1" fill="#fff" opacity="0.2"/><rect x="568" y="24" width="1" height="1" fill="#fff" opacity="0.3"/><rect x="491" y="14" width="1" height="1" fill="#fff" opacity="0.2"/><rect x="669" y="80" width="1" height="1" fill="#fff" opacity="0.15"/><rect x="458" y="50" width="1" height="1" fill="#fff" opacity="0.2"/><rect x="446" y="42" width="1" height="1" fill="#fff" opacity="0.3"/><rect x="480" y="63" width="1" height="1" fill="#fff" opacity="0.15"/><rect x="551" y="37" width="1" height="1" fill="#fff" opacity="0.3"/><rect x="587" y="79" width="1" height="1" fill="#fff" opacity="0.15"/><rect x="610" y="53" width="1" height="1" fill="#fff" opacity="0.15"/><rect x="299" y="75" width="1" height="1" fill="#fff" opacity="0.2"/><rect x="150" y="80" width="1" height="1" fill="#fff" opacity="0.2"/><rect x="122" y="13" width="1" height="1" fill="#fff" opacity="0.15"/><rect x="532" y="20" width="1" height="1" fill="#fff" opacity="0.2"/><rect x="463" y="39" width="1" height="1" fill="#fff" opacity="0.4"/><rect x="468" y="26" width="1" height="1" fill="#fff" opacity="0.15"/><rect x="315" y="57" width="1" height="1" fill="#fff" opacity="0.4"/><rect x="508" y="33" width="1" height="1" fill="#fff" opacity="0.15"/><rect x="248" y="75" width="1" height="1" fill="#fff" opacity="0.4"/><rect x="722" y="55" width="1" height="1" fill="#fff" opacity="0.4"/><rect x="500" y="67" width="1" height="1" fill="#fff" opacity="0.4"/><rect x="29" y="49" width="1" height="1" fill="#fff" opacity="0.3"/><rect x="582" y="17" width="1" height="1" fill="#fff" opacity="0.15"/><rect x="343" y="79" width="1" height="1" fill="#fff" opacity="0.4"/><rect x="685" y="25" width="1" height="1" fill="#fff" opacity="0.15"/><rect x="605" y="61" width="1" height="1" fill="#fff" opacity="0.4"/><rect x="766" y="39" width="1" height="1" fill="#fff" opacity="0.3"/><rect x="616" y="79" width="1" height="1" fill="#fff" opacity="0.15"/><rect x="572" y="74" width="1" height="1" fill="#fff" opacity="0.15"/><rect x="130" y="54" width="1" height="1" fill="#fff" opacity="0.2"/><rect x="551" y="69" width="1" height="1" fill="#fff" opacity="0.2"/><rect x="160" y="39" width="1" height="1" fill="#fff" opacity="0.2"/><rect x="137" y="57" width="1" height="1" fill="#fff" opacity="0.15"/><rect x="596" y="45" width="1" height="1" fill="#fff" opacity="0.2"/><rect x="781" y="60" width="1" height="1" fill="#fff" opacity="0.4"/><rect x="581" y="38" width="1" height="1" fill="#fff" opacity="0.3"/><rect x="195" y="17" width="1" height="1" fill="#fff" opacity="0.4"/><rect x="657" y="32" width="1" height="1" fill="#fff" opacity="0.2"/><rect x="173" y="61" width="1" height="1" fill="#fff" opacity="0.2"/><rect x="612" y="31" width="1" height="1" fill="#fff" opacity="0.3"/><rect x="694" y="66" width="1" height="1" fill="#fff" opacity="0.3"/><rect x="577" y="21" width="1" height="1" fill="#fff" opacity="0.2"/><rect x="475" y="39" width="1" height="1" fill="#fff" opacity="0.3"/><rect x="530" y="25" width="1" height="1" fill="#fff" opacity="0.3"/><rect x="478" y="72" width="1" height="1" fill="#fff" opacity="0.3"/><rect x="115" y="47" width="1" height="1" fill="#fff" opacity="0.4"/><rect x="504" y="56" width="1" height="1" fill="#fff" opacity="0.15"/><rect x="538" y="48" width="1" height="1" fill="#fff" opacity="0.15"/><rect x="13" y="15" width="1" height="1" fill="#fff" opacity="0.4"/><rect x="223" y="50" width="1" height="1" fill="#fff" opacity="0.3"/><rect x="606" y="54" width="1" height="1" fill="#fff" opacity="0.2"/><rect x="207" y="22" width="1" height="1" fill="#fff" opacity="0.4"/><rect x="146" y="38" width="1" height="1" fill="#fff" opacity="0.3"/><rect x="255" y="70" width="1" height="1" fill="#fff" opacity="0.4"/><rect x="417" y="20" width="1" height="1" fill="#fff" opacity="0.15"/><rect x="381" y="62" width="1" height="1" fill="#fff" opacity="0.3"/><rect x="333" y="56" width="1" height="1" fill="#fff" opacity="0.15"/><rect x="53" y="77" width="1" height="1" fill="#fff" opacity="0.4"/><rect x="228" y="59" width="1" height="1" fill="#fff" opacity="0.4"/><rect x="60" y="78" width="1" height="1" fill="#fff" opacity="0.2"/><rect x="645" y="79" width="1" height="1" fill="#fff" opacity="0.3"/><rect x="406" y="63" width="1" height="1" fill="#fff" opacity="0.3"/><rect x="740" y="61" width="1" height="1" fill="#fff" opacity="0.15"/><rect x="528" y="58" width="1" height="1" fill="#fff" opacity="0.4"/><rect x="376" y="59" width="1" height="1" fill="#fff" opacity="0.3"/><rect x="346" y="69" width="1" height="1" fill="#fff" opacity="0.15"/><rect x="684" y="23" width="1" height="1" fill="#fff" opacity="0.2"/><rect x="126" y="45" width="1" height="1" fill="#fff" opacity="0.4"/><rect x="245" y="13" width="1" height="1" fill="#fff" opacity="0.4"/><rect x="465" y="26" width="1" height="1" fill="#fff" opacity="0.2"/><rect x="635" y="43" width="1" height="1" fill="#fff" opacity="0.15"/><rect x="779" y="42" width="1" height="1" fill="#fff" opacity="0.15"/><rect x="299" y="62" width="1" height="1" fill="#fff" opacity="0.2"/><rect x="203" y="58" width="1" height="1" fill="#fff" opacity="0.15"/><rect x="522" y="56" width="1" height="1" fill="#fff" opacity="0.2"/><rect x="405" y="40" width="1" height="1" fill="#fff" opacity="0.2"/><rect x="553" y="46" width="1" height="1" fill="#fff" opacity="0.15"/><rect x="348" y="29" width="1" height="1" fill="#fff" opacity="0.4"/><rect x="318" y="70" width="1" height="1" fill="#fff" opacity="0.3"/><rect x="683" y="18" width="1" height="1" fill="#fff" opacity="0.4"/><rect x="548" y="39" width="1" height="1" fill="#fff" opacity="0.3"/><rect x="377" y="83" width="1" height="1" fill="#fff" opacity="0.4"/><rect x="669" y="35" width="1" height="1" fill="#fff" opacity="0.3"/><rect x="574" y="60" width="1" height="1" fill="#fff" opacity="0.4"/><rect x="353" y="39" width="1" height="1" fill="#fff" opacity="0.15"/><rect x="555" y="84" width="1" height="1" fill="#fff" opacity="0.4"/><rect x="740" y="55" width="1" height="1" fill="#fff" opacity="0.2"/><rect x="455" y="43" width="1" height="1" fill="#fff" opacity="0.15"/><rect x="125" y="59" width="1" height="1" fill="#fff" opacity="0.2"/><rect x="125" y="54" width="1" height="1" fill="#fff" opacity="0.15"/><rect x="514" y="52" width="1" height="1" fill="#fff" opacity="0.3"/><rect x="106" y="58" width="1" height="1" fill="#fff" opacity="0.15"/><rect x="97" y="50" width="1" height="1" fill="#fff" opacity="0.15"/><rect x="390" y="55" width="1" height="1" fill="#fff" opacity="0.4"/><rect x="666" y="71" width="1" height="1" fill="#fff" opacity="0.3"/><rect x="760" y="66" width="1" height="1" fill="#fff" opacity="0.4"/><rect x="652" y="42" width="1" height="1" fill="#fff" opacity="0.15"/><rect x="98" y="75" width="1" height="1" fill="#fff" opacity="0.2"/><rect x="146" y="46" width="1" height="1" fill="#fff" opacity="0.3"/><rect x="467" y="83" width="1" height="1" fill="#fff" opacity="0.4"/><rect x="356" y="22" width="1" height="1" fill="#fff" opacity="0.3"/><rect x="188" y="53" width="1" height="1" fill="#fff" opacity="0.3"/><rect x="548" y="72" width="1" height="1" fill="#fff" opacity="0.2"/><rect x="10" y="37" width="1" height="1" fill="#fff" opacity="0.3"/><rect x="494" y="21" width="1" height="1" fill="#fff" opacity="0.3"/><rect x="747" y="66" width="1" height="1" fill="#fff" opacity="0.4"/><rect x="726" y="30" width="2" height="2" fill="#fff" opacity="0.8"/><rect x="693" y="64" width="2" height="2" fill="#fff" opacity="0.6"/><rect x="351" y="58" width="1" height="1" fill="#fff" opacity="0.4"/><rect x="708" y="48" width="1.5" height="1.5" fill="#fff" opacity="1"/><rect x="679" y="17" width="2" height="2" fill="#fff" opacity="0.8"/><rect x="587" y="22" width="1" height="1" fill="#fff" opacity="1"/><rect x="195" y="48" width="1" height="1" fill="#fff" opacity="0.8"/><rect x="752" y="54" width="1" height="1" fill="#fff" opacity="0.8"/><rect x="185" y="53" width="2" height="2" fill="#fff" opacity="0.4"/><rect x="657" y="46" width="1.5" height="1.5" fill="#fff" opacity="0.8"/><rect x="104" y="40" width="1" height="1" fill="#fff" opacity="0.6"/><rect x="52" y="42" width="1" height="1" fill="#fff" opacity="0.8"/><rect x="609" y="27" width="2" height="2" fill="#fff" opacity="1"/><rect x="279" y="35" width="1.5" height="1.5" fill="#fff" opacity="0.6"/><rect x="510" y="80" width="1" height="1" fill="#fff" opacity="0.6"/><rect x="423" y="67" width="1.5" height="1.5" fill="#fff" opacity="0.6"/><rect x="203" y="53" width="2" height="2" fill="#fff" opacity="0.8"/><rect x="804" y="82" width="1" height="1" fill="#fff" opacity="0.8"/><rect x="164" y="67" width="2" height="2" fill="#fff" opacity="1"/><rect x="44" y="58" width="2" height="2" fill="#fff" opacity="1"/><rect x="296" y="27" width="1" height="1" fill="#fff" opacity="0.4"/><rect x="502" y="83" width="1" height="1" fill="#fff" opacity="1"/><rect x="159" y="23" width="1" height="1" fill="#fff" opacity="0.6"/><rect x="262" y="22" width="1.5" height="1.5" fill="#fff" opacity="0.8"/><rect x="260" y="17" width="1.5" height="1.5" fill="#fff" opacity="0.4"/><rect x="109" y="63" width="2" height="2" fill="#fff" opacity="0.4"/><rect x="703" y="44" width="1" height="1" fill="#fff" opacity="1"/><rect x="89" y="52" width="1" height="1" fill="#fff" opacity="0.6"/><rect x="713" y="32" width="2" height="2" fill="#fff" opacity="0.8"/><rect x="689" y="29" width="1.5" height="1.5" fill="#fff" opacity="0.8"/><rect x="302" y="27" width="2" height="2" fill="#fff" opacity="1"/><rect x="313" y="55" width="1" height="1" fill="#fff" opacity="1"/><rect x="362" y="49" width="1" height="1" fill="#fff" opacity="0.6"/><rect x="422" y="52" width="1" height="1" fill="#fff" opacity="0.4"/><rect x="177" y="36" width="1.5" height="1.5" fill="#fff" opacity="0.8"/><rect x="175" y="41" width="1.5" height="1.5" fill="#fff" opacity="0.8"/><rect x="709" y="73" width="2" height="2" fill="#fff" opacity="0.6"/><rect x="322" y="64" width="2" height="2" fill="#fff" opacity="1"/><rect x="748" y="29" width="2" height="2" fill="#fff" opacity="0.4"/><rect x="191" y="75" width="1" height="1" fill="#fff" opacity="1"/><rect x="685" y="50" width="2" height="2" fill="#fff" opacity="0.8"/><rect x="739" y="43" width="2" height="2" fill="#fff" opacity="1"/><rect x="515" y="77" width="2" height="2" fill="#fff" opacity="0.6"/><rect x="758" y="33" width="1" height="1" fill="#fff" opacity="1"/><rect x="343" y="70" width="1.5" height="1.5" fill="#fff" opacity="0.8"/><rect x="582" y="75" width="1" height="1" fill="#fff" opacity="0.4"/><rect x="391" y="24" width="1" height="1" fill="#fff" opacity="1"/><rect x="207" y="15" width="1" height="1" fill="#fff" opacity="0.8"/><rect x="261" y="54" width="2" height="2" fill="#fff" opacity="0.4"/><rect x="25" y="71" width="1" height="1" fill="#fff" opacity="0.6"/><rect x="55" y="18" width="1.5" height="1.5" fill="#fff" opacity="0.4"/><rect x="475" y="60" width="1.5" height="1.5" fill="#fff" opacity="0.6"/><rect x="691" y="81" width="2" height="2" fill="#fff" opacity="0.4"/><rect x="222" y="48" width="1.5" height="1.5" fill="#fff" opacity="0.8"/><rect x="95" y="72" width="1" height="1" fill="#fff" opacity="0.4"/><rect x="657" y="20" width="1" height="1" fill="#fff" opacity="0.4"/><rect x="197" y="49" width="2" height="2" fill="#fff" opacity="0.6"/><rect x="397" y="64" width="2" height="2" fill="#fff" opacity="0.8"/><rect x="209" y="50" width="1" height="1" fill="#fff" opacity="1"/><rect x="145" y="29" width="1.5" height="1.5" fill="#fff" opacity="1"/><rect x="259" y="71" width="1" height="1" fill="#fff" opacity="0.4"/><rect x="464" y="55" width="1" height="1" fill="#fff" opacity="0.4"/><rect x="98" y="67" width="1.5" height="1.5" fill="#fff" opacity="1"/><rect x="195" y="68" width="1" height="1" fill="#fff" opacity="1"/><rect x="404" y="75" width="2" height="2" fill="#fff" opacity="0.4"/><rect x="571" y="15" width="1" height="1" fill="#fff" opacity="0.6"/><rect x="472" y="60" width="1" height="1" fill="#fff" opacity="1"/><rect x="686" y="62" width="2" height="2" fill="#fff" opacity="0.6"/><rect x="575" y="70" width="1" height="1" fill="#fff" opacity="0.4"/><rect x="474" y="81" width="1" height="1" fill="#fff" opacity="1"/><rect x="18" y="41" width="1" height="1" fill="#fff" opacity="0.8"/><rect x="113" y="83" width="1.5" height="1.5" fill="#fff" opacity="1"/><rect x="761" y="20" width="2" height="2" fill="#fff" opacity="0.6"/><rect x="643" y="54" width="1" height="1" fill="#fff" opacity="0.6"/><rect x="295" y="17" width="2" height="2" fill="#fff" opacity="0.6"/><rect x="379" y="60" width="1" height="1" fill="#fff" opacity="0.8"/><rect x="470" y="21" width="1" height="1" fill="#fff" opacity="1"/><rect x="112" y="69" width="1" height="1" fill="#fff" opacity="1"/><rect x="465" y="59" width="1" height="1" fill="#fff" opacity="1"/><rect x="634" y="58" width="1" height="1" fill="#fff" opacity="0.4"/><rect x="403" y="24" width="1" height="1" fill="#fff" opacity="0.4"/><rect x="710" y="15" width="1" height="1" fill="#fff" opacity="1"/><rect x="202" y="29" width="1" height="1" fill="#fff" opacity="1"/><rect x="634" y="16" width="1.5" height="1.5" fill="#fff" opacity="0.8"/><rect x="56" y="83" width="1" height="1" fill="#fff" opacity="0.8"/><rect x="331" y="61" width="2" height="2" fill="#fff" opacity="0.6"/><rect x="48" y="51" width="2" height="2" fill="#fff" opacity="0.8"/><rect x="52" y="53" width="1" height="1" fill="#fff" opacity="0.6"/><rect x="665" y="83" width="1" height="1" fill="#fff" opacity="0.4"/><rect x="132" y="20" width="1" height="1" fill="#fff" opacity="0.4"/><rect x="380" y="67" width="1" height="1" fill="#fff" opacity="0.6"/><rect x="738" y="40" width="1" height="1" fill="#fff" opacity="0.4"/><rect x="550" y="57" width="2" height="2" fill="#fff" opacity="0.6"/><rect x="478" y="39" width="2" height="2" fill="#fff" opacity="0.8"/><rect x="89" y="78" width="2" height="2" fill="#fff" opacity="0.4"/><rect x="735" y="54" width="2" height="2" fill="#fff" opacity="1"/><rect x="794" y="76" width="1" height="1" fill="#fff" opacity="0.6"/><rect x="565" y="65" width="1.5" height="1.5" fill="#fff" opacity="0.4"/><rect x="68" y="40" width="2" height="2" fill="#fff" opacity="0.6"/><rect x="218" y="73" width="1" height="1" fill="#fff" opacity="0.4"/><rect x="50" y="48" width="1" height="1" fill="#fff" opacity="1"/><rect x="774" y="78" width="1" height="1" fill="#fff" opacity="0.8"/><rect x="360" y="18" width="1" height="1" fill="#fff" opacity="0.4"/><rect x="219" y="41" width="1" height="1" fill="#fff" opacity="0.4"/><rect x="468" y="80" width="1" height="1" fill="#fff" opacity="1"/><rect x="373" y="78" width="1" height="1" fill="#fff" opacity="0.8"/><rect x="678" y="67" width="1" height="1" fill="#fff" opacity="0.6"/><rect x="622" y="26" width="2" height="2" fill="#fff" opacity="0.4"/><rect x="234" y="75" width="1.5" height="1.5" fill="#fff" opacity="1"/><rect x="97" y="51" width="2" height="2" fill="#fff" opacity="0.8"/><rect x="532" y="71" width="1.5" height="1.5" fill="#fff" opacity="0.6"/><rect x="264" y="13" width="1" height="1" fill="#fff" opacity="0.8"/><rect x="442" y="70" width="2" height="2" fill="#fff" opacity="0.8"/><rect x="790" y="39" width="1" height="1" fill="#fff" opacity="0.6"/><rect x="686" y="61" width="1.5" height="1.5" fill="#fff" opacity="1"/><rect x="146" y="18" width="2" height="2" fill="#fff" opacity="0.4"/><rect x="57" y="25" width="1.5" height="1.5" fill="#fff" opacity="0.4"/><rect x="602" y="57" width="2" height="2" fill="#fff" opacity="0.6"/><rect x="709" y="26" width="1" height="1" fill="#fff" opacity="0.4"/><rect x="35" y="16" width="1" height="1" fill="#fff" opacity="1"/><rect x="141" y="26" width="2" height="2" fill="#fff" opacity="0.8"/><rect x="76" y="35" width="1" height="1" fill="#fff" opacity="0.6"/><rect x="292" y="81" width="1" height="1" fill="#fff" opacity="1"/><rect x="460" y="16" width="1" height="1" fill="#fff" opacity="0.4"/><rect x="559" y="38" width="1" height="1" fill="#fff" opacity="0.4"/><rect x="437" y="28" width="1" height="1" fill="#fff" opacity="0.6"/><rect x="125" y="61" width="1" height="1" fill="#fff" opacity="0.8"/><rect x="461" y="63" width="1" height="1" fill="#fff" opacity="0.6"/><rect x="779" y="37" width="1.5" height="1.5" fill="#fff" opacity="0.6"/><rect x="194" y="47" width="1" height="1" fill="#fff" opacity="0.8"/><rect x="67" y="79" width="1" height="1" fill="#fff" opacity="0.4"/><rect x="320" y="68" width="1" height="1" fill="#fff" opacity="0.8"/><rect x="544" y="76" width="2" height="2" fill="#fff" opacity="0.4"/><rect x="548" y="31" width="1.5" height="1.5" fill="#fff" opacity="0.4"/><rect x="467" y="60" width="1" height="1" fill="#fff" opacity="0.6"/><rect x="497" y="45" width="1" height="1" fill="#fff" opacity="0.4"/><rect x="703" y="21" width="1" height="1" fill="#fff" opacity="0.4"/><rect x="619" y="35" width="2" height="2" fill="#fff" opacity="0.8"/><rect x="741" y="69" width="1" height="1" fill="#fff" opacity="1"/><rect x="62" y="45" width="1" height="1" fill="#fff" opacity="0.6"/><rect x="641" y="17" width="1.5" height="1.5" fill="#fff" opacity="1"/><rect x="587" y="76" width="1" height="1" fill="#fff" opacity="1"/><rect x="272" y="15" width="2" height="2" fill="#fff" opacity="0.6"/><rect x="775" y="70" width="1.5" height="1.5" fill="#fff" opacity="0.4"/><rect x="222" y="82" width="2" height="2" fill="#fff" opacity="0.6"/><rect x="139" y="65" width="2" height="2" fill="#fff" opacity="1"/><rect x="503" y="75" width="1" height="1" fill="#fff" opacity="1"/><rect x="216" y="59" width="1" height="1" fill="#fff" opacity="0.8"/><rect x="367" y="78" width="2" height="2" fill="#fff" opacity="0.4"/><rect x="509" y="65" width="1" height="1" fill="#fff" opacity="0.6"/><circle cx="270" cy="30" r="14" fill="#b9bdd8"/><path d="M264,30 H276 M270,24 V36" stroke="#333" stroke-width="2"/><path d="M228.5,26.5 L235.5,33.5 M235.5,26.5 L228.5,33.5" stroke="#fff" stroke-width="2"/><circle cx="28" cy="30" r="7" fill="#fff"/><circle cx="28" cy="30" r="5.3" fill="#000"/><path d="M23,29 Q23.5,25 27,24.6 Q25.5,27 28,27.5 Q30.5,27 30,29 Q27,30 25.5,31.5 Q23.5,31.5 23,29 Z M28,33.5 Q29.5,30.5 33,30 Q32.8,33.5 29.5,35 Q28,35 28,33.5 Z M30.5,24.8 Q32.5,25.5 33.2,27.5 Q31.5,27 30.5,24.8 Z" fill="#fff"/><rect x="109" y="51" width="720" height="28" rx="14" fill="#1f232a"/><path d="M16,65 H30 M15.5,65 L22,58.5 M15.5,65 L22,71.5" stroke="#fff" stroke-width="2" fill="none"/><path d="M47,65 H61 M61.5,65 L55,58.5 M61.5,65 L55,71.5" stroke="#808080" stroke-width="2" fill="none"/><path d="M89.7,60.4 A5.8,5.8 0 1 0 91.5,66.8" stroke="#fff" stroke-width="2.2" fill="none"/><path d="M88,57.5 L94.5,57.5 L94.5,64 Z" fill="#fff"/><circle cx="126" cy="65" r="6.8" fill="none" stroke="#fff" stroke-width="1.6"/><path d="M126,63.5 V69 M126,60.5 V62" stroke="#fff" stroke-width="1.8"/></svg>
</div>
<div class="t" style="left:246px;top:173.50px;font-size:12px;color:#ffffff;font-weight:bold;">Title</div>
<div class="t" style="left:345px;top:206.62px;font-size:15.5px;color:#ffffff;">127.0.0.1<span style="color:#9aa0a6;letter-spacing:-0.85px">:8000/session_login/</span></div>
<div class="a" style="left:202px;top:233px;width:806px;height:149px;background:#ffffff;"></div>
<svg style="left:202px;top:233px" width="806" height="149"><rect x="8.5" y="140.5" width="42" height="20" rx="1" fill="#f8f8f8" stroke="#a0a0a0"/><g fill="none" stroke="#000" stroke-linecap="square"><g stroke-width="10.5"><path transform="translate(7.3,23.6) scale(0.1900,0.1750)" d="M20,8 V58 Q20,82 8,95 M20,8 H84 V88 Q84,94 72,92 M20,36 H84 M20,62 H84 M52,8 V95"/><path transform="translate(26.3,23.6) scale(0.1900,0.1750)" d="M44,2 L54,12 M22,22 H80 V56 H22 M22,22 V56 Q20,82 6,96"/><path transform="translate(44.1,23.6) scale(0.1900,0.1750)" d="M12,8 H36 L16,30 M26,18 L44,30 M56,6 Q70,24 92,30 M62,16 H82 M28,38 H72 M32,48 H68 V64 H32 Z M38,70 L44,82 M62,70 L56,82 M10,92 H90"/><path transform="translate(64.1,23.6) scale(0.1900,0.1750)" d="M18,8 H78 V42 M24,25 H78 M10,42 H90 M50,42 V86 Q50,95 40,92 M16,52 L36,64 M10,84 L40,68 M86,50 L64,64 M56,60 L92,92"/></g><g stroke-width="6.2"><path transform="translate(6.8,65.2) scale(0.1700,0.1550)" d="M20,8 V58 Q20,82 8,95 M20,8 H84 V88 Q84,94 72,92 M20,36 H84 M20,62 H84 M52,8 V95"/><path transform="translate(23,65.2) scale(0.1700,0.1550)" d="M44,2 L54,12 M22,22 H80 V56 H22 M22,22 V56 Q20,82 6,96"/><path transform="translate(38.5,65.2) scale(0.1700,0.1550)" d="M42,4 L14,36 M34,16 H66 Q50,44 16,60 M34,30 L52,42 M34,60 H80 V94 H34 Z"/><path transform="translate(6.8,104.7) scale(0.1700,0.1550)" d="M50,0 V10 M8,30 V18 H92 V30 M14,50 L24,38 M32,28 Q40,62 86,44 M74,26 L38,62 M80,34 L90,44 M18,70 V95 H82 V70 M50,62 V95"/><path transform="translate(24.2,104.7) scale(0.1500,0.1550)" d="M2,10 H40 M22,10 Q14,38 4,56 M14,44 H40 V90 H14 Z M48,8 H86 L84,44 M56,8 L54,48 H95 V88 Q95,96 82,96 M48,72 H88"/><path transform="translate(14,144) scale(0.1300,0.1500)" d="M6,28 H34 M22,6 V90 Q22,96 14,92 M6,60 L36,44 M48,8 H86 V40 H48 Z M48,24 H86 M42,54 H94 M66,54 V90 M66,70 H90 M52,64 Q50,88 40,96 M52,84 Q70,94 96,94"/><path transform="translate(29,144) scale(0.1300,0.1500)" d="M50,2 V12 M6,20 H94 M34,30 L14,48 M66,30 L88,48 M28,48 Q50,88 92,96 M72,48 Q50,88 8,96"/></g></g><g fill="#000"><rect x="59.5" y="70.5" width="2" height="2"/><rect x="59.5" y="77" width="2" height="2"/><rect x="43" y="108.5" width="2" height="2"/><rect x="43" y="116" width="2" height="2"/></g><rect x="77.5" y="64.5" width="172" height="20" fill="#fff" stroke="#8f8f8f"/><rect x="61.5" y="103.5" width="172" height="20" fill="#fff" stroke="#8f8f8f"/></svg>
<div class="a" style="left:202px;top:382px;width:806px;height:430px;background:#f3f3f3;"></div>
<div class="a" style="left:202px;top:382px;width:806px;height:1px;background:#cdcdcd;"></div>
<div class="a" style="left:202px;top:412px;width:806px;height:1px;background:#cdcdcd;"></div>
<svg style="left:0;top:0" width="1008" height="812"><path d="M218,404.5 H213.5 V391.5 H226 V396" fill="none" stroke="#6e6e6e" stroke-width="1.4"/><path d="M219,397 L227.5,401.5 L224,402.5 L227.5,406 L226,407.5 L222.5,404 L221,407.5 Z" fill="#6e6e6e"/><path d="M247,394 V389.5 H257 V405.5 H249" fill="none" stroke="#6e6e6e" stroke-width="1.4"/><rect x="242.7" y="395.2" width="6" height="10.3" rx="1" fill="none" stroke="#6e6e6e" stroke-width="1.4"/><rect x="270" y="389" width="1" height="17" fill="#cdcdcd"/><rect x="750" y="411" width="92" height="2" fill="#1f74c4"/></svg>
<div class="t" style="left:291px;top:393.42px;font-size:12.5px;color:#5a5a5a;">Elements</div>
<div class="t" style="left:369px;top:393.42px;font-size:12.5px;color:#5a5a5a;">Console</div>
<div class="t" style="left:441px;top:393.42px;font-size:12.5px;color:#5a5a5a;">Sources</div>
<div class="t" style="left:513px;top:393.42px;font-size:12.5px;color:#5a5a5a;">Network</div>
<div class="t" style="left:589px;top:393.42px;font-size:12.5px;color:#5a5a5a;">Performance</div>
<div class="t" style="left:688px;top:393.42px;font-size:12.5px;color:#5a5a5a;">Memory</div>
<div class="t" style="left:762px;top:393.42px;font-size:12.5px;color:#333333;">Application</div>
<div class="t" style="left:855px;top:393.42px;font-size:12.5px;color:#5a5a5a;">Security</div>
<div class="t" style="left:927px;top:393.42px;font-size:12.5px;color:#5a5a5a;">Audits</div>
<div class="a" style="left:401px;top:413px;width:1px;height:399px;background:#cdcdcd;"></div>
<div class="a" style="left:386px;top:430px;width:13px;height:295px;background:#c1c1c1;"></div>
<svg style="left:386px;top:416px" width="13" height="10"><path d="M2,8.5 L6.5,4 L11,8.5 Z" fill="#a3a3a3"/></svg>
<div class="a" style="left:202px;top:525px;width:182px;height:1px;background:#e0e0e0;"></div>
<div class="a" style="left:202px;top:703px;width:182px;height:1px;background:#e0e0e0;"></div>
<div class="a" style="left:202px;top:794px;width:182px;height:1px;background:#e0e0e0;"></div>
<div class="a" style="left:202px;top:670px;width:182px;height:21px;background:#dadada;"></div>
<div class="t" style="left:211px;top:428.42px;font-size:12.5px;color:#555555;">Application</div>
<div class="t" style="left:249px;top:454.42px;font-size:12.5px;color:#4b4b4b;">Manifest</div>
<div class="t" style="left:249px;top:476.42px;font-size:12.5px;color:#4b4b4b;">Service Workers</div>
<div class="t" style="left:249px;top:498.42px;font-size:12.5px;color:#4b4b4b;">Clear storage</div>
<div class="t" style="left:211px;top:541.42px;font-size:12.5px;color:#555555;">Storage</div>
<div class="t" style="left:249px;top:567.42px;font-size:12.5px;color:#4b4b4b;">Local Storage</div>
<div class="t" style="left:249px;top:589.42px;font-size:12.5px;color:#4b4b4b;">Session Storage</div>
<div class="t" style="left:249px;top:611.42px;font-size:12.5px;color:#4b4b4b;">IndexedDB</div>
<div class="t" style="left:249px;top:633.42px;font-size:12.5px;color:#4b4b4b;">Web SQL</div>
<div class="t" style="left:249px;top:655.42px;font-size:12.5px;color:#4b4b4b;">Cookies</div>
<div class="t" style="left:262px;top:677.42px;font-size:12.5px;color:#4b4b4b;">http://127.0.0.1:8000</div>
<div class="t" style="left:211px;top:719.42px;font-size:12.5px;color:#555555;">Cache</div>
<div class="t" style="left:249px;top:746.42px;font-size:12.5px;color:#4b4b4b;">Cache Storage</div>
<div class="t" style="left:249px;top:768.42px;font-size:12.5px;color:#4b4b4b;">Application Cache</div>
<div class="t" style="left:211px;top:810.42px;font-size:12.5px;color:#555555;">Background Services</div>
<svg style="left:0;top:0" width="1008" height="812"><path d="M230,451 H237 L241,455 V466 H230 Z" fill="#6e6e6e"/><path d="M237,451 V455 H241" fill="#f3f3f3"/><circle cx="235.5" cy="480.5" r="5" fill="#6e6e6e"/><circle cx="235.5" cy="480.5" r="2" fill="#f3f3f3"/><g stroke="#6e6e6e" stroke-width="2.6"><path d="M235.5,473.5 V487.5 M228.5,480.5 H242.5 M230.5,475.5 L240.5,485.5 M240.5,475.5 L230.5,485.5"/></g><circle cx="235.5" cy="480.5" r="2" fill="#f3f3f3"/><path d="M229,497 H242 V499 H229 Z M233,495 H238 V497 H233 Z M230,500 H241 L240,509.5 H231 Z" fill="#6e6e6e"/><g fill="#6e6e6e"><rect x="229" y="566" width="7" height="3"/><rect x="237" y="566" width="6" height="3"/><rect x="229" y="570" width="7" height="3"/><rect x="237" y="570" width="6" height="3"/><rect x="229" y="574" width="7" height="3"/><rect x="237" y="574" width="6" height="3"/></g><g fill="#6e6e6e"><rect x="229" y="588" width="7" height="3"/><rect x="237" y="588" width="6" height="3"/><rect x="229" y="592" width="7" height="3"/><rect x="237" y="592" width="6" height="3"/><rect x="229" y="596" width="7" height="3"/><rect x="237" y="596" width="6" height="3"/></g><g fill="#6e6e6e"><rect x="229" y="766" width="7" height="3"/><rect x="237" y="766" width="6" height="3"/><rect x="229" y="770" width="7" height="3"/><rect x="237" y="770" width="6" height="3"/><rect x="229" y="774" width="7" height="3"/><rect x="237" y="774" width="6" height="3"/></g><path d="M217,568 L223,572 L217,576 Z M217,590 L223,594 L217,598 Z M215,657 L224,657 L219.5,663 Z" fill="#6e6e6e"/><g fill="#6e6e6e"><ellipse cx="236" cy="611" rx="7" ry="2.5"/><path d="M229,612.5 Q236,616.5 243,612.5 V615 Q236,619 229,615 Z"/><path d="M229,616.5 Q236,620.5 243,616.5 V619 Q236,623 229,619 Z"/><path d="M229,620.5 Q236,624.5 243,620.5 V621.5 Q236,625 229,621.5 Z"/></g><g fill="#6e6e6e"><ellipse cx="236" cy="633" rx="7" ry="2.5"/><path d="M229,634.5 Q236,638.5 243,634.5 V637 Q236,641 229,637 Z"/><path d="M229,638.5 Q236,642.5 243,638.5 V641 Q236,645 229,641 Z"/><path d="M229,642.5 Q236,646.5 243,642.5 V643.5 Q236,647 229,643.5 Z"/></g><g fill="#6e6e6e"><ellipse cx="236" cy="745" rx="7" ry="2.5"/><path d="M229,746.5 Q236,750.5 243,746.5 V749 Q236,753 229,749 Z"/><path d="M229,750.5 Q236,754.5 243,750.5 V753 Q236,757 229,753 Z"/><path d="M229,754.5 Q236,758.5 243,754.5 V755.5 Q236,759 229,755.5 Z"/></g><circle cx="235.5" cy="659.5" r="7" fill="#6e6e6e"/><g fill="#f3f3f3"><circle cx="233.0" cy="657.0" r="1.4"/><circle cx="238.0" cy="661.0" r="1.4"/><circle cx="233.5" cy="662.5" r="1.1"/><circle cx="238.5" cy="656.0" r="1"/></g><circle cx="241.5" cy="654.5" r="2.5" fill="#f3f3f3"/><circle cx="248.5" cy="681" r="7" fill="#6e6e6e"/><g fill="#dadada"><circle cx="246.0" cy="678.5" r="1.4"/><circle cx="251.0" cy="682.5" r="1.4"/><circle cx="246.5" cy="684" r="1.1"/><circle cx="251.5" cy="677.5" r="1"/></g><circle cx="254.5" cy="676" r="2.5" fill="#dadada"/></svg>
<div class="a" style="left:402px;top:413px;width:606px;height:29px;background:#f3f3f3;"></div>
<div class="a" style="left:402px;top:442px;width:606px;height:2px;background:#cbcbcb;"></div>
<div class="a" style="left:438px;top:417px;width:407px;height:21px;background:#ffffff;"></div>
<div class="t" style="left:443.5px;top:423.42px;font-size:12.5px;color:#757575;">Filter</div>
<svg style="left:0;top:0" width="1008" height="812"><path d="M424.5,422.5 A5.7,5.7 0 1 0 426,429.5" fill="none" stroke="#6e6e6e" stroke-width="2.2"/><path d="M421.5,419.5 L427,419 L426.5,425 Z" fill="#6e6e6e"/><rect x="853" y="419" width="1" height="18" fill="#cdcdcd"/><circle cx="874" cy="428.5" r="6" fill="none" stroke="#6e6e6e" stroke-width="2"/><path d="M870,424.5 L878,432.5" stroke="#6e6e6e" stroke-width="2"/><path d="M899.5,424 L908.5,433 M908.5,424 L899.5,433" stroke="#a8a8a8" stroke-width="1.8"/><rect x="927.5" y="421.5" width="10" height="10" rx="2" fill="#f8f8f8" stroke="#8f8f8f"/></svg>
<div class="t" style="left:946px;top:423.42px;font-size:12.5px;color:#333333;">Only blocked</div>
<div class="a" style="left:402px;top:444px;width:606px;height:22px;background:#f3f3f3;"></div>
<div class="a" style="left:402px;top:466px;width:606px;height:1px;background:#c4c4c4;"></div>
<div class="a" style="left:402px;top:467px;width:606px;height:22px;background:#ffffff;"></div>
<div class="a" style="left:402px;top:489px;width:606px;height:22px;background:#f0f6fe;"></div>
<div class="a" style="left:402px;top:511px;width:606px;height:121px;background:#ffffff;"></div>
<div class="a" style="left:402px;top:632px;width:606px;height:2px;background:#cdcdcd;"></div>
<div class="a" style="left:402px;top:443px;width:1px;height:190px;background:#cdcdcd;"></div>
<div class="a" style="left:619px;top:444px;width:1px;height:188px;background:#b4b4b4;"></div>
<div class="a" style="left:969px;top:444px;width:1px;height:188px;background:#b4b4b4;"></div>
<div class="t" style="left:408.5px;top:451.42px;font-size:12.5px;color:#222222;">Name</div>
<div class="t" style="left:625px;top:451.42px;font-size:12.5px;color:#222222;">Value</div>
<div class="t" style="left:975px;top:451.42px;font-size:12.5px;color:#222222;">Domain</div>
<div class="t" style="left:419px;top:473.42px;font-size:12.5px;color:#333333;">csrftoken</div>
<div class="t" style="left:625px;top:473.42px;font-size:12.5px;color:#333333;letter-spacing:-0.35px;">AGBnXPHFWceFGa2mafjtFa9tsyVOEm0MWqf2vVCfn87t0...</div>
<div class="t" style="left:975px;top:473.42px;font-size:12.5px;color:#333333;">127.0.0.1</div>
<div class="a" style="left:402px;top:633px;width:606px;height:179px;background:#fdfdfd;"></div>
<div class="t" style="left:760.5px;top:726.17px;font-size:20px;color:#727272;font-weight:bold;letter-spacing:-0.3px;">Select a cookie to preview</div></body></html>
